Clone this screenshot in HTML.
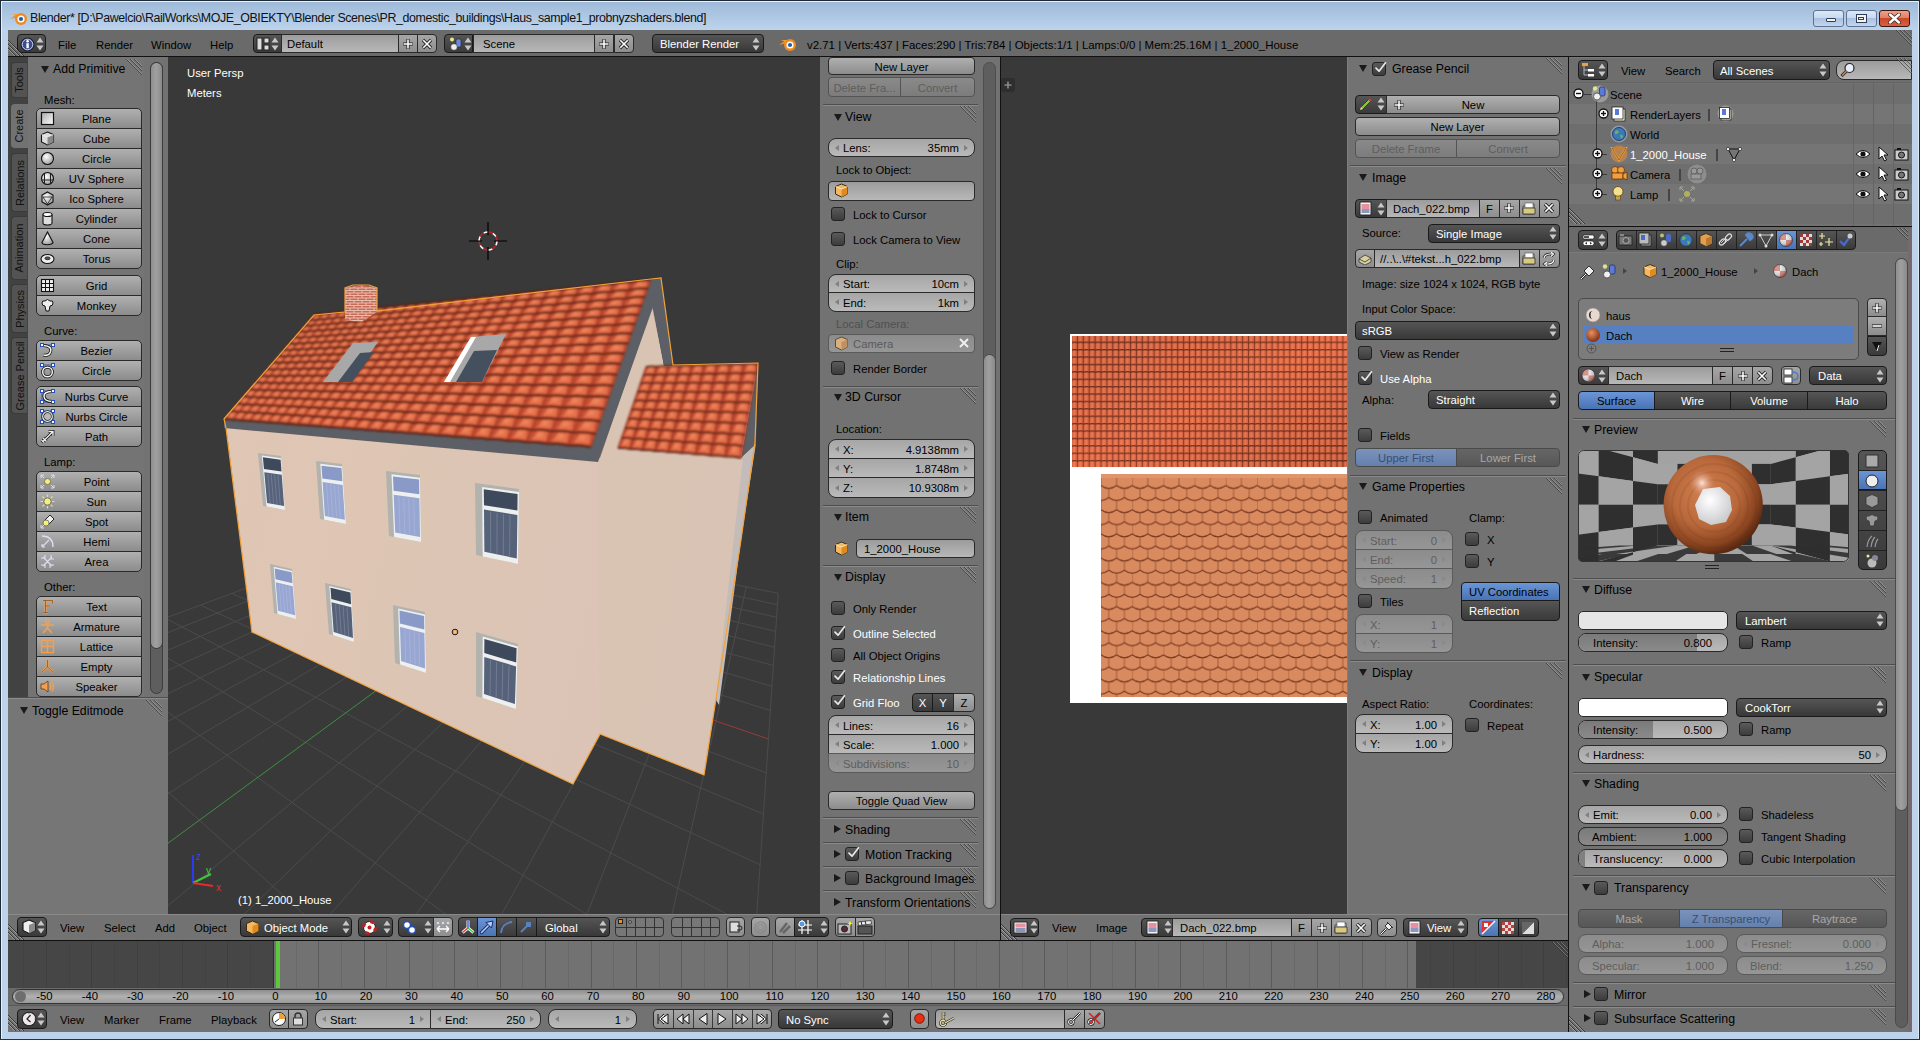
<!DOCTYPE html><html><head><meta charset="utf-8"><style>
*{margin:0;padding:0;box-sizing:border-box}
html,body{width:1920px;height:1040px;overflow:hidden}
body{position:relative;font-family:"Liberation Sans",sans-serif;font-size:11.3px;background:#b9d1ea}
.a{position:absolute}
.t{position:absolute;white-space:nowrap;line-height:1}
.bl{position:absolute;top:0;white-space:nowrap}
.arl{position:absolute;left:6px;width:0;height:0;border-top:3px solid transparent;border-bottom:3px solid transparent;border-right:4px solid #808080}
.arr{position:absolute;right:6px;width:0;height:0;border-top:3px solid transparent;border-bottom:3px solid transparent;border-left:4px solid #808080}
</style></head><body><div class="a " style="left:0px;top:0px;width:1920px;height:1040px;background:#bcd3eb"></div>
<div class="a " style="left:0px;top:0px;width:1920px;height:30px;background:linear-gradient(#9db9d8 0%,#a9c3e0 40%,#bcd3ec 100%)"></div>
<div class="a " style="left:0px;top:0px;width:1920px;height:1px;background:#1e2a36"></div>
<div class="a " style="left:0px;top:1px;width:1920px;height:1px;background:#e8f0f8"></div>
<div class="a " style="left:0px;top:0px;width:1px;height:1040px;background:#1e2a36"></div>
<div class="a " style="left:1px;top:1px;width:1px;height:1038px;background:#e8f0f8"></div>
<div class="a " style="left:1919px;top:0px;width:1px;height:1040px;background:#1e2a36"></div>
<div class="a " style="left:1918px;top:1px;width:1px;height:1038px;background:#dde8f5"></div>
<div class="a " style="left:0px;top:1039px;width:1920px;height:1px;background:#1a3a40"></div>
<svg class="a" style="left:9px;top:10px;" width="20" height="16" viewBox="0 0 20 16">
<path d="M1 9 L8 4 L9 7 Z" fill="#f0902a"/>
<path d="M3 4 L9 4 L8 6 Z" fill="#f5a040"/>
<circle cx="12" cy="9" r="6" fill="#f08a1c"/>
<circle cx="12" cy="9" r="3.6" fill="#fff"/>
<circle cx="12" cy="9" r="2.1" fill="#2a5aa8"/>
</svg>
<div class="t " style="left:30px;top:12.00px;font-size:12.4px;color:#111;letter-spacing:-0.38px">Blender* [D:\Pawelcio\RailWorks\MOJE_OBIEKTY\Blender Scenes\PR_domestic_buildings\Haus_sample1_probnyzshaders.blend]</div>
<div class="a " style="left:1813px;top:10px;width:31px;height:17px;background:linear-gradient(#dce8f6 0%,#c9daf0 45%,#aac0e0 50%,#c4d7ef 100%);border:1px solid #5f7294;border-radius:3px"></div>
<div class="a " style="left:1826px;top:18px;width:10px;height:4px;background:#f4f4ea;border:1px solid #303c5a;border-radius:1px"></div>
<div class="a " style="left:1846px;top:10px;width:31px;height:17px;background:linear-gradient(#dce8f6 0%,#c9daf0 45%,#aac0e0 50%,#c4d7ef 100%);border:1px solid #5f7294;border-radius:3px"></div>
<div class="a " style="left:1856px;top:14px;width:11px;height:9px;background:#f4f4f4;border:1px solid #303c5a;"></div>
<div class="a " style="left:1858px;top:17px;width:6px;height:3px;background:#f4f4f4;border:1px solid #303c5a;"></div>
<div class="a " style="left:1879px;top:10px;width:31px;height:17px;background:linear-gradient(#f0a08a 0%,#e0806a 45%,#c84a28 50%,#d86040 100%);border:1px solid #3a1810;border-radius:3px"></div>
<svg class="a" style="left:1888px;top:13px;" width="13" height="11" viewBox="0 0 13 11"><path d="M2 1.5 L11 9.5 M11 1.5 L2 9.5" stroke="#3a2a2a" stroke-width="4" stroke-linecap="round"/><path d="M2 1.5 L11 9.5 M11 1.5 L2 9.5" stroke="#fff" stroke-width="2.4" stroke-linecap="round"/></svg>
<div class="a " style="left:8px;top:30px;width:1904px;height:1002px;background:#111"></div>
<div class="a " style="left:8px;top:30px;width:1904px;height:26px;background:#6a6a6a"></div>
<div class="a " style="left:17px;top:34px;width:29px;height:19px;background:linear-gradient(#555,#3a3a3a);border:1px solid #1a1a1a;border-radius:4px;"></div>
<svg class="a" style="left:20px;top:37px;" width="15" height="15" viewBox="0 0 15 15"><circle cx="7.5" cy="7.5" r="6.5" fill="#3c4d8a" stroke="#1a1a2a" stroke-width="1"/><circle cx="7.5" cy="7.5" r="5.3" fill="none" stroke="#c8d0f0" stroke-width="1"/><rect x="6.4" y="6.2" width="2.4" height="5" fill="#fff"/><circle cx="7.6" cy="4.3" r="1.3" fill="#fff"/></svg>
<svg class="a" style="left:36px;top:37px;" width="8" height="14" viewBox="0 0 8 14"><path d="M4 0.5 L7.5 5.5 L0.5 5.5Z M4 13.5 L7.5 8.5 L0.5 8.5Z" fill="#c8c8c8"/></svg>
<div class="t " style="left:58px;top:40.43px;font-size:11.3px;color:#000;">File</div>
<div class="t " style="left:96px;top:40.43px;font-size:11.3px;color:#000;">Render</div>
<div class="t " style="left:151px;top:40.43px;font-size:11.3px;color:#000;">Window</div>
<div class="t " style="left:210px;top:40.43px;font-size:11.3px;color:#000;">Help</div>
<div class="a " style="left:253px;top:34px;width:29px;height:19px;background:linear-gradient(#555,#3a3a3a);border:1px solid #1a1a1a;border-radius:4px 0px 0px 4px;"></div>
<svg class="a" style="left:256px;top:37px;" width="14" height="14" viewBox="0 0 14 14"><rect x="1" y="1" width="5" height="12" fill="#ddd" stroke="#222" stroke-width="1"/><rect x="8" y="1" width="5" height="5" fill="#ddd" stroke="#222"/><rect x="8" y="8" width="5" height="5" fill="#ddd" stroke="#222"/></svg>
<svg class="a" style="left:271px;top:37px;" width="8" height="14" viewBox="0 0 8 14"><path d="M4 0.5 L7.5 5.5 L0.5 5.5Z M4 13.5 L7.5 8.5 L0.5 8.5Z" fill="#c8c8c8"/></svg>
<div class="a " style="left:281px;top:34px;width:118px;height:19px;background:linear-gradient(#9c9c9c,#b8b8b8);border:1px solid #2a2a2a;border-radius:0;"><div class="bl" style="left:5px;right:0;top:1px;text-align:left;line-height:17px;font-size:11.3px;color:#000">Default</div></div>
<div class="a " style="left:398px;top:34px;width:20px;height:19px;background:linear-gradient(#a6a6a6,#8e8e8e);border:1px solid #2a2a2a;border-radius:0;"></div>
<svg class="a" style="left:402px;top:38px;" width="12" height="12" viewBox="0 0 12 12"><path d="M6 1 V11 M1 6 H11" stroke="#222" stroke-width="3.2"/><path d="M6 1.5 V10.5 M1.5 6 H10.5" stroke="#fff" stroke-width="1.6"/></svg>
<div class="a " style="left:417px;top:34px;width:20px;height:19px;background:linear-gradient(#a6a6a6,#8e8e8e);border:1px solid #2a2a2a;border-radius:0px 4px 4px 0px;"></div>
<svg class="a" style="left:421px;top:38px;" width="12" height="12" viewBox="0 0 12 12"><path d="M2 2 L10 10 M10 2 L2 10" stroke="#222" stroke-width="3.2"/><path d="M2.3 2.3 L9.7 9.7 M9.7 2.3 L2.3 9.7" stroke="#fff" stroke-width="1.6"/></svg>
<div class="a " style="left:444px;top:34px;width:29px;height:19px;background:linear-gradient(#555,#3a3a3a);border:1px solid #1a1a1a;border-radius:4px 0px 0px 4px;"></div>
<svg class="a" style="left:448px;top:36px;" width="16" height="16" viewBox="0 0 16 16"><circle cx="4" cy="3.5" r="2" fill="#e8e890"/><rect x="8" y="3" width="5" height="8" rx="1.5" fill="#6a8ad8" stroke="#223" stroke-width="0.6"/><circle cx="6" cy="11" r="3.3" fill="#eee" stroke="#333" stroke-width="0.6"/></svg>
<svg class="a" style="left:464px;top:37px;" width="8" height="14" viewBox="0 0 8 14"><path d="M4 0.5 L7.5 5.5 L0.5 5.5Z M4 13.5 L7.5 8.5 L0.5 8.5Z" fill="#c8c8c8"/></svg>
<div class="a " style="left:473px;top:34px;width:122px;height:19px;background:linear-gradient(#9c9c9c,#b8b8b8);border:1px solid #2a2a2a;border-radius:0;"><div class="bl" style="left:9px;right:0;top:1px;text-align:left;line-height:17px;font-size:11.3px;color:#000">Scene</div></div>
<div class="a " style="left:594px;top:34px;width:20px;height:19px;background:linear-gradient(#a6a6a6,#8e8e8e);border:1px solid #2a2a2a;border-radius:0;"></div>
<svg class="a" style="left:598px;top:38px;" width="12" height="12" viewBox="0 0 12 12"><path d="M6 1 V11 M1 6 H11" stroke="#222" stroke-width="3.2"/><path d="M6 1.5 V10.5 M1.5 6 H10.5" stroke="#fff" stroke-width="1.6"/></svg>
<div class="a " style="left:614px;top:34px;width:20px;height:19px;background:linear-gradient(#a6a6a6,#8e8e8e);border:1px solid #2a2a2a;border-radius:0px 4px 4px 0px;"></div>
<svg class="a" style="left:618px;top:38px;" width="12" height="12" viewBox="0 0 12 12"><path d="M2 2 L10 10 M10 2 L2 10" stroke="#222" stroke-width="3.2"/><path d="M2.3 2.3 L9.7 9.7 M9.7 2.3 L2.3 9.7" stroke="#fff" stroke-width="1.6"/></svg>
<div class="a " style="left:652px;top:34px;width:112px;height:19px;background:linear-gradient(#555,#383838);border:1px solid #1a1a1a;border-radius:4px;"><div class="bl" style="left:7px;right:0;top:1px;text-align:left;line-height:17px;font-size:11.3px;color:#fff">Blender Render</div></div>
<svg class="a" style="left:752px;top:37px;" width="8" height="14" viewBox="0 0 8 14"><path d="M4 0.5 L7.5 5.5 L0.5 5.5Z M4 13.5 L7.5 8.5 L0.5 8.5Z" fill="#c8c8c8"/></svg>
<svg class="a" style="left:778px;top:36px;" width="20" height="16" viewBox="0 0 20 16">
<path d="M1 9 L8 4 L9 7 Z" fill="#f0902a"/>
<path d="M3 4 L9 4 L8 6 Z" fill="#f5a040"/>
<circle cx="12" cy="9" r="6" fill="#f08a1c"/>
<circle cx="12" cy="9" r="3.6" fill="#fff"/>
<circle cx="12" cy="9" r="2.1" fill="#2a5aa8"/>
</svg>
<div class="t " style="left:807px;top:40.31px;font-size:11.45px;color:#000;">v2.71 | Verts:437 | Faces:290 | Tris:784 | Objects:1/1 | Lamps:0/0 | Mem:25.16M | 1_2000_House</div>
<svg class="a" style="left:8px;top:40px" width="16" height="16"><line x1="0" y1="0" x2="16" y2="16" stroke="rgba(30,30,30,0.7)" stroke-width="1"/><line x1="0" y1="1" x2="15" y2="16" stroke="rgba(210,210,210,0.45)" stroke-width="1"/><line x1="0" y1="4" x2="12" y2="16" stroke="rgba(30,30,30,0.7)" stroke-width="1"/><line x1="0" y1="5" x2="11" y2="16" stroke="rgba(210,210,210,0.45)" stroke-width="1"/><line x1="0" y1="8" x2="8" y2="16" stroke="rgba(30,30,30,0.7)" stroke-width="1"/><line x1="0" y1="9" x2="7" y2="16" stroke="rgba(210,210,210,0.45)" stroke-width="1"/></svg>
<svg class="a" style="left:1896px;top:30px" width="16" height="16"><line x1="0" y1="0" x2="16" y2="16" stroke="rgba(40,40,40,0.55)" stroke-width="1"/><line x1="1" y1="0" x2="16" y2="15" stroke="rgba(200,200,200,0.35)" stroke-width="1"/><line x1="4" y1="0" x2="16" y2="12" stroke="rgba(40,40,40,0.55)" stroke-width="1"/><line x1="5" y1="0" x2="16" y2="11" stroke="rgba(200,200,200,0.35)" stroke-width="1"/><line x1="8" y1="0" x2="16" y2="8" stroke="rgba(40,40,40,0.55)" stroke-width="1"/><line x1="9" y1="0" x2="16" y2="7" stroke="rgba(200,200,200,0.35)" stroke-width="1"/></svg>
<svg width="0" height="0" style="position:absolute"><defs>
<linearGradient id="gw" x1="0" y1="0" x2="1" y2="1"><stop offset="0" stop-color="#aaa"/><stop offset="1" stop-color="#fff"/></linearGradient>
<radialGradient id="gs" cx="0.4" cy="0.35" r="0.7"><stop offset="0" stop-color="#fff"/><stop offset="1" stop-color="#999"/></radialGradient>
</defs></svg>
<div class="a " style="left:8px;top:57px;width:20px;height:857px;background:#424242"></div>
<div class="a " style="left:11px;top:62px;width:16px;height:36px;background:#535353;border-radius:4px 0 0 4px;border:1px solid #3a3a3a;border-right:none"></div>
<div class="t" style="left:1.0px;top:74.0px;width:36px;text-align:center;font-size:11px;transform:rotate(-90deg);color:#111;line-height:12px">Tools</div>
<div class="a " style="left:11px;top:104px;width:22px;height:44px;background:#727272;border-radius:4px 0 0 4px;"></div>
<div class="t" style="left:-3.0px;top:120.0px;width:44px;text-align:center;font-size:11px;transform:rotate(-90deg);color:#111;line-height:12px">Create</div>
<div class="a " style="left:11px;top:153px;width:16px;height:59px;background:#535353;border-radius:4px 0 0 4px;border:1px solid #3a3a3a;border-right:none"></div>
<div class="t" style="left:-10.5px;top:176.5px;width:59px;text-align:center;font-size:11px;transform:rotate(-90deg);color:#111;line-height:12px">Relations</div>
<div class="a " style="left:11px;top:216px;width:16px;height:64px;background:#535353;border-radius:4px 0 0 4px;border:1px solid #3a3a3a;border-right:none"></div>
<div class="t" style="left:-13.0px;top:242.0px;width:64px;text-align:center;font-size:11px;transform:rotate(-90deg);color:#111;line-height:12px">Animation</div>
<div class="a " style="left:11px;top:284px;width:16px;height:49px;background:#535353;border-radius:4px 0 0 4px;border:1px solid #3a3a3a;border-right:none"></div>
<div class="t" style="left:-5.5px;top:302.5px;width:49px;text-align:center;font-size:11px;transform:rotate(-90deg);color:#111;line-height:12px">Physics</div>
<div class="a " style="left:11px;top:337px;width:16px;height:77px;background:#535353;border-radius:4px 0 0 4px;border:1px solid #3a3a3a;border-right:none"></div>
<div class="t" style="left:-19.5px;top:369.5px;width:77px;text-align:center;font-size:11px;transform:rotate(-90deg);color:#111;line-height:12px">Grease Pencil</div>
<div class="a " style="left:28px;top:57px;width:140px;height:857px;background:#727272"></div>
<div class="a " style="left:28px;top:57px;width:116px;height:641px;background:#747474"></div>
<div class="a" style="left:41px;top:66px;width:0;height:0;border-left:4px solid transparent;border-right:4px solid transparent;border-top:7px solid #1a1a1a"></div>
<div class="t " style="left:53px;top:62.59px;font-size:12.3px;color:#000;">Add Primitive</div>
<svg class="a" style="left:126px;top:59px" width="16" height="16"><line x1="0" y1="0" x2="16" y2="16" stroke="rgba(40,40,40,0.55)" stroke-width="1"/><line x1="1" y1="0" x2="16" y2="15" stroke="rgba(200,200,200,0.35)" stroke-width="1"/><line x1="4" y1="0" x2="16" y2="12" stroke="rgba(40,40,40,0.55)" stroke-width="1"/><line x1="5" y1="0" x2="16" y2="11" stroke="rgba(200,200,200,0.35)" stroke-width="1"/><line x1="8" y1="0" x2="16" y2="8" stroke="rgba(40,40,40,0.55)" stroke-width="1"/><line x1="9" y1="0" x2="16" y2="7" stroke="rgba(200,200,200,0.35)" stroke-width="1"/></svg>
<div class="t " style="left:44px;top:95.43px;font-size:11.3px;color:#000;">Mesh:</div>
<div class="a " style="left:36px;top:108px;width:106px;height:21px;background:linear-gradient(#b0b0b0,#8c8c8c);border:1px solid #2a2a2a;border-radius:5px 5px 0px 0px;"><div class="bl" style="left:15px;right:0;top:1px;text-align:center;line-height:19px;font-size:11.3px;color:#000">Plane</div></div>
<svg class="a" style="left:40px;top:111px;" width="16" height="16" viewBox="0 0 16 16"><rect x="1.5" y="1.5" width="12" height="12" fill="url(#gw)" stroke="#111" stroke-width="1.2"/></svg>
<div class="a " style="left:36px;top:128px;width:106px;height:21px;background:linear-gradient(#b0b0b0,#8c8c8c);border:1px solid #2a2a2a;border-radius:0;"><div class="bl" style="left:15px;right:0;top:1px;text-align:center;line-height:19px;font-size:11.3px;color:#000">Cube</div></div>
<svg class="a" style="left:40px;top:131px;" width="16" height="16" viewBox="0 0 16 16"><path d="M7.5 1 L13.5 3.5 V11 L7.5 14 L1.5 11 V3.5Z" fill="#ddd" stroke="#111" stroke-width="1.1"/><path d="M7.5 6 L13.5 3.5 V11 L7.5 14Z" fill="#888"/><path d="M1.5 3.5 L7.5 6 L13.5 3.5" stroke="#eee" fill="none" stroke-width="0.8"/></svg>
<div class="a " style="left:36px;top:148px;width:106px;height:21px;background:linear-gradient(#b0b0b0,#8c8c8c);border:1px solid #2a2a2a;border-radius:0;"><div class="bl" style="left:15px;right:0;top:1px;text-align:center;line-height:19px;font-size:11.3px;color:#000">Circle</div></div>
<svg class="a" style="left:40px;top:151px;" width="16" height="16" viewBox="0 0 16 16"><circle cx="7.5" cy="7.5" r="6" fill="url(#gs)" stroke="#111" stroke-width="1.1"/></svg>
<div class="a " style="left:36px;top:168px;width:106px;height:21px;background:linear-gradient(#b0b0b0,#8c8c8c);border:1px solid #2a2a2a;border-radius:0;"><div class="bl" style="left:15px;right:0;top:1px;text-align:center;line-height:19px;font-size:11.3px;color:#000">UV Sphere</div></div>
<svg class="a" style="left:40px;top:171px;" width="16" height="16" viewBox="0 0 16 16"><circle cx="7.5" cy="7.5" r="6" fill="url(#gs)" stroke="#111" stroke-width="1.1"/><path d="M4.5 3 V13 M10.5 3 V13 M1.5 9 H13.5" stroke="#222" stroke-width="1"/></svg>
<div class="a " style="left:36px;top:188px;width:106px;height:21px;background:linear-gradient(#b0b0b0,#8c8c8c);border:1px solid #2a2a2a;border-radius:0;"><div class="bl" style="left:15px;right:0;top:1px;text-align:center;line-height:19px;font-size:11.3px;color:#000">Ico Sphere</div></div>
<svg class="a" style="left:40px;top:191px;" width="16" height="16" viewBox="0 0 16 16"><path d="M7.5 1 L13 4 V11 L7.5 14 L2 11 V4Z" fill="url(#gs)" stroke="#111" stroke-width="1.1"/><path d="M3 6 L12 6 L7.5 13Z" fill="none" stroke="#222" stroke-width="0.8"/></svg>
<div class="a " style="left:36px;top:208px;width:106px;height:21px;background:linear-gradient(#b0b0b0,#8c8c8c);border:1px solid #2a2a2a;border-radius:0;"><div class="bl" style="left:15px;right:0;top:1px;text-align:center;line-height:19px;font-size:11.3px;color:#000">Cylinder</div></div>
<svg class="a" style="left:40px;top:211px;" width="16" height="16" viewBox="0 0 16 16"><path d="M3 3.5 V12 A4.5 2 0 0 0 12 12 V3.5" fill="#ddd" stroke="#111" stroke-width="1.1"/><ellipse cx="7.5" cy="3.5" rx="4.5" ry="2" fill="#fff" stroke="#111" stroke-width="1.1"/></svg>
<div class="a " style="left:36px;top:228px;width:106px;height:21px;background:linear-gradient(#b0b0b0,#8c8c8c);border:1px solid #2a2a2a;border-radius:0;"><div class="bl" style="left:15px;right:0;top:1px;text-align:center;line-height:19px;font-size:11.3px;color:#000">Cone</div></div>
<svg class="a" style="left:40px;top:231px;" width="16" height="16" viewBox="0 0 16 16"><path d="M7.5 1 L13 11.5 A5.5 2.2 0 0 1 2 11.5Z" fill="url(#gs)" stroke="#111" stroke-width="1.1"/></svg>
<div class="a " style="left:36px;top:248px;width:106px;height:21px;background:linear-gradient(#b0b0b0,#8c8c8c);border:1px solid #2a2a2a;border-radius:0px 0px 5px 5px;"><div class="bl" style="left:15px;right:0;top:1px;text-align:center;line-height:19px;font-size:11.3px;color:#000">Torus</div></div>
<svg class="a" style="left:40px;top:251px;" width="16" height="16" viewBox="0 0 16 16"><ellipse cx="7.5" cy="8" rx="6.5" ry="4.5" fill="#eee" stroke="#111" stroke-width="1.1"/><ellipse cx="7.5" cy="7.3" rx="2.6" ry="1.4" fill="#555" stroke="#111" stroke-width="0.8"/></svg>
<div class="a " style="left:36px;top:275px;width:106px;height:21px;background:linear-gradient(#b0b0b0,#8c8c8c);border:1px solid #2a2a2a;border-radius:5px 5px 0px 0px;"><div class="bl" style="left:15px;right:0;top:1px;text-align:center;line-height:19px;font-size:11.3px;color:#000">Grid</div></div>
<svg class="a" style="left:40px;top:278px;" width="16" height="16" viewBox="0 0 16 16"><rect x="1.5" y="1.5" width="12" height="12" fill="#eee" stroke="#111" stroke-width="1.1"/><path d="M5.5 1.5 V13.5 M9.5 1.5 V13.5 M1.5 5.5 H13.5 M1.5 9.5 H13.5" stroke="#111" stroke-width="1"/></svg>
<div class="a " style="left:36px;top:295px;width:106px;height:21px;background:linear-gradient(#b0b0b0,#8c8c8c);border:1px solid #2a2a2a;border-radius:0px 0px 5px 5px;"><div class="bl" style="left:15px;right:0;top:1px;text-align:center;line-height:19px;font-size:11.3px;color:#000">Monkey</div></div>
<svg class="a" style="left:40px;top:298px;" width="16" height="16" viewBox="0 0 16 16"><path d="M2 5 Q2 2 5 3 Q7.5 0 10 3 Q13 2 13 5 Q13 8 10 8 L9 13 L6 13 L5 8 Q2 8 2 5Z" fill="#eee" stroke="#111" stroke-width="1"/></svg>
<div class="t " style="left:44px;top:326.43px;font-size:11.3px;color:#000;">Curve:</div>
<div class="a " style="left:36px;top:340px;width:106px;height:21px;background:linear-gradient(#b0b0b0,#8c8c8c);border:1px solid #2a2a2a;border-radius:5px 5px 0px 0px;"><div class="bl" style="left:15px;right:0;top:1px;text-align:center;line-height:19px;font-size:11.3px;color:#000">Bezier</div></div>
<svg class="a" style="left:40px;top:343px;" width="16" height="16" viewBox="0 0 16 16"><path d="M2 2 H13" stroke="#2050c0" stroke-width="0.9"/><path d="M3.5 2.5 Q12.5 3 10.5 9 Q8.5 13.5 3.5 12" fill="none" stroke="#111" stroke-width="3"/><path d="M3.5 2.5 Q12.5 3 10.5 9 Q8.5 13.5 3.5 12" fill="none" stroke="#f4f4f4" stroke-width="1.5"/><rect x="0.5" y="0.5" width="3" height="3" fill="#fff" stroke="#2050c0"/><rect x="11.5" y="0.5" width="3" height="3" fill="#fff" stroke="#2050c0"/></svg>
<div class="a " style="left:36px;top:360px;width:106px;height:21px;background:linear-gradient(#b0b0b0,#8c8c8c);border:1px solid #2a2a2a;border-radius:0px 0px 5px 5px;"><div class="bl" style="left:15px;right:0;top:1px;text-align:center;line-height:19px;font-size:11.3px;color:#000">Circle</div></div>
<svg class="a" style="left:40px;top:363px;" width="16" height="16" viewBox="0 0 16 16"><path d="M2 2 H13" stroke="#2050c0" stroke-width="0.9"/><circle cx="7.5" cy="9" r="4.8" fill="none" stroke="#111" stroke-width="3"/><circle cx="7.5" cy="9" r="4.8" fill="none" stroke="#f4f4f4" stroke-width="1.5"/><rect x="0.5" y="0.5" width="3" height="3" fill="#fff" stroke="#2050c0"/><rect x="11.5" y="0.5" width="3" height="3" fill="#fff" stroke="#2050c0"/></svg>
<div class="a " style="left:36px;top:386px;width:106px;height:21px;background:linear-gradient(#b0b0b0,#8c8c8c);border:1px solid #2a2a2a;border-radius:5px 5px 0px 0px;"><div class="bl" style="left:15px;right:0;top:1px;text-align:center;line-height:19px;font-size:11.3px;color:#000">Nurbs Curve</div></div>
<svg class="a" style="left:40px;top:389px;" width="16" height="16" viewBox="0 0 16 16"><path d="M2 2 V13 M2 2 H13 M2 13 H13" stroke="#2050c0" stroke-width="0.9"/><path d="M12.5 2.5 Q3.5 2.5 4 7.5 Q4.5 12.5 12.5 12.5" fill="none" stroke="#111" stroke-width="3"/><path d="M12.5 2.5 Q3.5 2.5 4 7.5 Q4.5 12.5 12.5 12.5" fill="none" stroke="#f4f4f4" stroke-width="1.5"/><rect x="0.5" y="0.5" width="3" height="3" fill="#fff" stroke="#2050c0"/><rect x="11.5" y="0.5" width="3" height="3" fill="#fff" stroke="#2050c0"/><rect x="0.5" y="11.5" width="3" height="3" fill="#fff" stroke="#2050c0"/><rect x="11.5" y="11.5" width="3" height="3" fill="#fff" stroke="#2050c0"/></svg>
<div class="a " style="left:36px;top:406px;width:106px;height:21px;background:linear-gradient(#b0b0b0,#8c8c8c);border:1px solid #2a2a2a;border-radius:0;"><div class="bl" style="left:15px;right:0;top:1px;text-align:center;line-height:19px;font-size:11.3px;color:#000">Nurbs Circle</div></div>
<svg class="a" style="left:40px;top:409px;" width="16" height="16" viewBox="0 0 16 16"><rect x="2" y="2" width="11" height="11" fill="none" stroke="#2050c0" stroke-width="0.9"/><circle cx="7.5" cy="7.5" r="4.8" fill="#b8b8b8" stroke="#111" stroke-width="2.6"/><circle cx="7.5" cy="7.5" r="4.8" fill="none" stroke="#f4f4f4" stroke-width="1.2"/><rect x="0.5" y="0.5" width="3" height="3" fill="#fff" stroke="#2050c0"/><rect x="11.5" y="0.5" width="3" height="3" fill="#fff" stroke="#2050c0"/><rect x="0.5" y="11.5" width="3" height="3" fill="#fff" stroke="#2050c0"/><rect x="11.5" y="11.5" width="3" height="3" fill="#fff" stroke="#2050c0"/></svg>
<div class="a " style="left:36px;top:426px;width:106px;height:21px;background:linear-gradient(#b0b0b0,#8c8c8c);border:1px solid #2a2a2a;border-radius:0px 0px 5px 5px;"><div class="bl" style="left:15px;right:0;top:1px;text-align:center;line-height:19px;font-size:11.3px;color:#000">Path</div></div>
<svg class="a" style="left:40px;top:429px;" width="16" height="16" viewBox="0 0 16 16"><path d="M2.5 13 L12.5 3 M8.5 2.5 H13 V7 M3 9 L6.5 12.5 M1.5 11 L4 13.5" stroke="#111" stroke-width="2.8" fill="none"/><path d="M2.5 13 L12.5 3 M8.5 2.5 H13 V7 M3 9 L6.5 12.5 M1.5 11 L4 13.5" stroke="#f4f4f4" stroke-width="1.3" fill="none"/></svg>
<div class="t " style="left:44px;top:457.43px;font-size:11.3px;color:#000;">Lamp:</div>
<div class="a " style="left:36px;top:471px;width:106px;height:21px;background:linear-gradient(#b0b0b0,#8c8c8c);border:1px solid #2a2a2a;border-radius:5px 5px 0px 0px;"><div class="bl" style="left:15px;right:0;top:1px;text-align:center;line-height:19px;font-size:11.3px;color:#000">Point</div></div>
<svg class="a" style="left:40px;top:474px;" width="16" height="16" viewBox="0 0 16 16"><circle cx="7.5" cy="7.5" r="3" fill="#f5f07a" stroke="#665" stroke-width="0.8"/><path d="M1 1 L4 4 M14 1 L11 4 M1 14 L4 11 M14 14 L11 11 M1 1 H4 M1 1 V4 M14 1 H11 M14 1 V4 M1 14 H4 M1 14 V11 M14 14 H11 M14 14 V11" stroke="#dde" stroke-width="1"/></svg>
<div class="a " style="left:36px;top:491px;width:106px;height:21px;background:linear-gradient(#b0b0b0,#8c8c8c);border:1px solid #2a2a2a;border-radius:0;"><div class="bl" style="left:15px;right:0;top:1px;text-align:center;line-height:19px;font-size:11.3px;color:#000">Sun</div></div>
<svg class="a" style="left:40px;top:494px;" width="16" height="16" viewBox="0 0 16 16"><circle cx="7.5" cy="7.5" r="3.6" fill="#f5f07a" stroke="#665" stroke-width="0.8"/><path d="M7.5 0.5 V3 M7.5 12 V14.5 M0.5 7.5 H3 M12 7.5 H14.5 M2.5 2.5 L4.3 4.3 M12.5 2.5 L10.7 4.3 M2.5 12.5 L4.3 10.7 M12.5 12.5 L10.7 10.7" stroke="#dda" stroke-width="1.2"/></svg>
<div class="a " style="left:36px;top:511px;width:106px;height:21px;background:linear-gradient(#b0b0b0,#8c8c8c);border:1px solid #2a2a2a;border-radius:0;"><div class="bl" style="left:15px;right:0;top:1px;text-align:center;line-height:19px;font-size:11.3px;color:#000">Spot</div></div>
<svg class="a" style="left:40px;top:514px;" width="16" height="16" viewBox="0 0 16 16"><path d="M5 6 L10 1 L14 5 L9 10Z" fill="#eee" stroke="#111" stroke-width="0.9"/><circle cx="6" cy="9" r="3" fill="#f5f07a" stroke="#665" stroke-width="0.8"/><path d="M1 14 L4 11 M1 14 H4 M1 14 V11" stroke="#ddd" stroke-width="1"/></svg>
<div class="a " style="left:36px;top:531px;width:106px;height:21px;background:linear-gradient(#b0b0b0,#8c8c8c);border:1px solid #2a2a2a;border-radius:0;"><div class="bl" style="left:15px;right:0;top:1px;text-align:center;line-height:19px;font-size:11.3px;color:#000">Hemi</div></div>
<svg class="a" style="left:40px;top:534px;" width="16" height="16" viewBox="0 0 16 16"><path d="M2 2 Q13 2 13 13" fill="none" stroke="#dde" stroke-width="1.4"/><path d="M2 13 L9 6 M2 13 H5 M2 13 V10" stroke="#dde" stroke-width="1.2"/></svg>
<div class="a " style="left:36px;top:551px;width:106px;height:21px;background:linear-gradient(#b0b0b0,#8c8c8c);border:1px solid #2a2a2a;border-radius:0px 0px 5px 5px;"><div class="bl" style="left:15px;right:0;top:1px;text-align:center;line-height:19px;font-size:11.3px;color:#000">Area</div></div>
<svg class="a" style="left:40px;top:554px;" width="16" height="16" viewBox="0 0 16 16"><path d="M3 3 L12 12 M12 3 L3 12 M1 4 H5 V1 M14 11 H10 V14 M11 1 V5 H14 M1 11 H5 V14" stroke="#dde" stroke-width="1.1" fill="none"/></svg>
<div class="t " style="left:44px;top:582.43px;font-size:11.3px;color:#000;">Other:</div>
<div class="a " style="left:36px;top:596px;width:106px;height:21px;background:linear-gradient(#b0b0b0,#8c8c8c);border:1px solid #2a2a2a;border-radius:5px 5px 0px 0px;"><div class="bl" style="left:15px;right:0;top:1px;text-align:center;line-height:19px;font-size:11.3px;color:#000">Text</div></div>
<svg class="a" style="left:40px;top:599px;" width="16" height="16" viewBox="0 0 16 16"><path d="M3 1.5 H12.5 V4.5 M5.5 1.5 V13.5 M3 13.5 H8 M5.5 7 H10" stroke="#f2a050" stroke-width="2" fill="none"/><path d="M3 1.5 H12.5 V4.5 M5.5 1.5 V13.5 M3 13.5 H8 M5.5 7 H10" stroke="#5a2a00" stroke-width="0.5" fill="none"/></svg>
<div class="a " style="left:36px;top:616px;width:106px;height:21px;background:linear-gradient(#b0b0b0,#8c8c8c);border:1px solid #2a2a2a;border-radius:0;"><div class="bl" style="left:15px;right:0;top:1px;text-align:center;line-height:19px;font-size:11.3px;color:#000">Armature</div></div>
<svg class="a" style="left:40px;top:619px;" width="16" height="16" viewBox="0 0 16 16"><circle cx="7.5" cy="2.5" r="2" fill="none" stroke="#f2a050" stroke-width="1.4"/><path d="M1 6 H14 M7.5 5 V9 L3 14 M7.5 9 L12 14" stroke="#f2a050" stroke-width="1.6" fill="none"/></svg>
<div class="a " style="left:36px;top:636px;width:106px;height:21px;background:linear-gradient(#b0b0b0,#8c8c8c);border:1px solid #2a2a2a;border-radius:0;"><div class="bl" style="left:15px;right:0;top:1px;text-align:center;line-height:19px;font-size:11.3px;color:#000">Lattice</div></div>
<svg class="a" style="left:40px;top:639px;" width="16" height="16" viewBox="0 0 16 16"><rect x="1.5" y="1.5" width="12" height="12" fill="none" stroke="#f2a050" stroke-width="1.4"/><path d="M7.5 1.5 V13.5 M1.5 7.5 H13.5" stroke="#f2a050" stroke-width="1.4"/></svg>
<div class="a " style="left:36px;top:656px;width:106px;height:21px;background:linear-gradient(#b0b0b0,#8c8c8c);border:1px solid #2a2a2a;border-radius:0;"><div class="bl" style="left:15px;right:0;top:1px;text-align:center;line-height:19px;font-size:11.3px;color:#000">Empty</div></div>
<svg class="a" style="left:40px;top:659px;" width="16" height="16" viewBox="0 0 16 16"><path d="M7.5 1 V8 L2 13 M7.5 8 L13 13" stroke="#f2a050" stroke-width="2" fill="none"/><path d="M7.5 1 V8 L2 13 M7.5 8 L13 13" stroke="#5a2a00" stroke-width="0.5" fill="none"/></svg>
<div class="a " style="left:36px;top:676px;width:106px;height:21px;background:linear-gradient(#b0b0b0,#8c8c8c);border:1px solid #2a2a2a;border-radius:0px 0px 5px 5px;"><div class="bl" style="left:15px;right:0;top:1px;text-align:center;line-height:19px;font-size:11.3px;color:#000">Speaker</div></div>
<svg class="a" style="left:40px;top:679px;" width="16" height="16" viewBox="0 0 16 16"><path d="M1 5 H4 L8 2 V13 L4 10 H1Z" fill="#f2a050" stroke="#5a2a00" stroke-width="0.7"/><path d="M10 4 Q12 7.5 10 11 M12 2.5 Q15 7.5 12 12.5" fill="none" stroke="#f2a050" stroke-width="1.3"/></svg>
<div class="a " style="left:150px;top:62px;width:13px;height:632px;background:#5e5e5e;border:1px solid #3c3c3c;border-radius:7px"></div>
<div class="a " style="left:150px;top:62px;width:13px;height:587px;background:linear-gradient(90deg,#8e8e8e,#a0a0a0 45%,#8a8a8a);border:1px solid #3c3c3c;border-radius:7px"></div>
<div class="a " style="left:8px;top:698px;width:160px;height:216px;background:#767676"></div>
<div class="a " style="left:8px;top:697px;width:160px;height:1px;background:#4e4e4e"></div>
<div class="a " style="left:8px;top:698px;width:160px;height:1px;background:#8a8a8a"></div>
<div class="a" style="left:20px;top:707px;width:0;height:0;border-left:4px solid transparent;border-right:4px solid transparent;border-top:7px solid #1a1a1a"></div>
<div class="t " style="left:32px;top:704.59px;font-size:12.3px;color:#000;">Toggle Editmode</div>
<svg class="a" style="left:146px;top:700px" width="16" height="16"><line x1="0" y1="0" x2="16" y2="16" stroke="rgba(40,40,40,0.55)" stroke-width="1"/><line x1="1" y1="0" x2="16" y2="15" stroke="rgba(200,200,200,0.35)" stroke-width="1"/><line x1="4" y1="0" x2="16" y2="12" stroke="rgba(40,40,40,0.55)" stroke-width="1"/><line x1="5" y1="0" x2="16" y2="11" stroke="rgba(200,200,200,0.35)" stroke-width="1"/><line x1="8" y1="0" x2="16" y2="8" stroke="rgba(40,40,40,0.55)" stroke-width="1"/><line x1="9" y1="0" x2="16" y2="7" stroke="rgba(200,200,200,0.35)" stroke-width="1"/></svg>
<div class="a " style="left:168px;top:57px;width:652px;height:857px;background:#393939"></div>
<svg class="a" style="left:168px;top:57px" width="652" height="857" viewBox="168 57 652 857"><line x1="-28.6" y1="690.1" x2="425.5" y2="521.6" stroke="#4b4b4b" stroke-width="1"/><line x1="-28.6" y1="690.1" x2="713.4" y2="1564.9" stroke="#4b4b4b" stroke-width="1"/><line x1="-15.8" y1="705.3" x2="440.6" y2="524.7" stroke="#4b4b4b" stroke-width="1"/><line x1="30.3" y1="668.2" x2="731.2" y2="1298.3" stroke="#4b4b4b" stroke-width="1"/><line x1="-1.6" y1="722.0" x2="456.4" y2="527.9" stroke="#4b4b4b" stroke-width="1"/><line x1="81.4" y1="649.3" x2="742.4" y2="1130.0" stroke="#4b4b4b" stroke-width="1"/><line x1="14.1" y1="740.5" x2="472.8" y2="531.3" stroke="#4b4b4b" stroke-width="1"/><line x1="126.1" y1="632.7" x2="750.1" y2="1014.1" stroke="#4b4b4b" stroke-width="1"/><line x1="31.6" y1="761.1" x2="490.0" y2="534.8" stroke="#4b4b4b" stroke-width="1"/><line x1="165.5" y1="618.1" x2="755.8" y2="929.4" stroke="#4b4b4b" stroke-width="1"/><line x1="51.1" y1="784.2" x2="508.0" y2="538.4" stroke="#4b4b4b" stroke-width="1"/><line x1="200.4" y1="605.1" x2="760.1" y2="864.8" stroke="#4b4b4b" stroke-width="1"/><line x1="73.2" y1="810.1" x2="526.8" y2="542.3" stroke="#4b4b4b" stroke-width="1"/><line x1="231.7" y1="593.5" x2="763.5" y2="814.0" stroke="#4b4b4b" stroke-width="1"/><line x1="98.2" y1="839.6" x2="546.5" y2="546.3" stroke="#4b4b4b" stroke-width="1"/><line x1="259.8" y1="583.1" x2="766.2" y2="772.9" stroke="#4b4b4b" stroke-width="1"/><line x1="159.9" y1="912.4" x2="588.9" y2="554.9" stroke="#4b4b4b" stroke-width="1"/><line x1="308.4" y1="565.1" x2="770.4" y2="710.5" stroke="#4b4b4b" stroke-width="1"/><line x1="198.7" y1="958.1" x2="611.8" y2="559.6" stroke="#4b4b4b" stroke-width="1"/><line x1="329.5" y1="557.2" x2="772.0" y2="686.3" stroke="#4b4b4b" stroke-width="1"/><line x1="244.7" y1="1012.3" x2="635.9" y2="564.5" stroke="#4b4b4b" stroke-width="1"/><line x1="348.9" y1="550.1" x2="773.4" y2="665.5" stroke="#4b4b4b" stroke-width="1"/><line x1="300.0" y1="1077.6" x2="661.2" y2="569.6" stroke="#4b4b4b" stroke-width="1"/><line x1="366.7" y1="543.5" x2="774.6" y2="647.3" stroke="#4b4b4b" stroke-width="1"/><line x1="368.0" y1="1157.7" x2="688.0" y2="575.1" stroke="#4b4b4b" stroke-width="1"/><line x1="383.1" y1="537.4" x2="775.7" y2="631.4" stroke="#4b4b4b" stroke-width="1"/><line x1="453.5" y1="1258.5" x2="716.3" y2="580.9" stroke="#4b4b4b" stroke-width="1"/><line x1="398.3" y1="531.7" x2="776.6" y2="617.3" stroke="#4b4b4b" stroke-width="1"/><line x1="564.3" y1="1389.1" x2="746.3" y2="587.0" stroke="#4b4b4b" stroke-width="1"/><line x1="412.4" y1="526.5" x2="777.4" y2="604.7" stroke="#4b4b4b" stroke-width="1"/><line x1="713.4" y1="1564.9" x2="778.2" y2="593.4" stroke="#4b4b4b" stroke-width="1"/><line x1="425.5" y1="521.6" x2="778.2" y2="593.4" stroke="#4b4b4b" stroke-width="1"/><line x1="126.8" y1="873.4" x2="567.2" y2="550.5" stroke="#3f8f3f" stroke-width="1"/><line x1="285.3" y1="573.7" x2="768.5" y2="739.0" stroke="#9a3a3a" stroke-width="1"/><defs>
<filter id="tblur" x="-2%" y="-2%" width="104%" height="104%"><feGaussianBlur stdDeviation="1.0"/></filter>
<pattern id="tiles" patternUnits="userSpaceOnUse" width="10" height="8" patternTransform="matrix(1.2,0.09,0.69,-0.79,224,419)">
<rect width="10" height="8" fill="#d45a38"/>
<ellipse cx="5.3" cy="4.8" rx="4.2" ry="3.4" fill="#e87250"/>
<ellipse cx="4.8" cy="5.4" rx="2.5" ry="1.8" fill="#f08560"/>
<path d="M0 0.9 Q5 2.2 10 0.9" stroke="#7a2c1a" stroke-width="1.5" fill="none"/>
<line x1="0.4" y1="0" x2="0.4" y2="8" stroke="#a8442c" stroke-width="0.8"/>
</pattern>
<pattern id="tiles2" patternUnits="userSpaceOnUse" width="10" height="8" patternTransform="matrix(1.5,0.1,0.8,-1.15,618,448)">
<rect width="10" height="8" fill="#d45a38"/>
<ellipse cx="5.3" cy="4.8" rx="4.2" ry="3.4" fill="#e87250"/>
<ellipse cx="4.8" cy="5.4" rx="2.5" ry="1.8" fill="#f08560"/>
<path d="M0 0.9 Q5 2.2 10 0.9" stroke="#7a2c1a" stroke-width="1.5" fill="none"/>
<line x1="0.4" y1="0" x2="0.4" y2="8" stroke="#a8442c" stroke-width="0.8"/>
</pattern>
<pattern id="brick" patternUnits="userSpaceOnUse" width="8" height="5">
<rect width="8" height="5" fill="#c86a58"/>
<path d="M0 0.5 H8 M0 3 H8 M2 0.5 V3 M6 3 V5" stroke="#f0d0c0" stroke-width="0.8"/>
</pattern>
<linearGradient id="wallg" x1="0" y1="0" x2="1" y2="0.2"><stop offset="0" stop-color="#e0c6b4"/><stop offset="1" stop-color="#dac4b6"/></linearGradient>
</defs><polygon points="226.0,426.0 600.0,458.0 652.0,306.0 664.0,366.0 756.0,364.0 754.0,442.0 741.0,540.0 704.0,775.0 600.0,734.0 573.0,784.0 252.0,632.0" fill="url(#wallg)"/><polygon points="598.0,460.0 653.0,306.0 664.0,366.0 646.0,367.0 618.0,448.0 741.0,458.0 741.0,540.0 704.0,775.0 600.0,734.0" fill="#d8c2b2" opacity="0.5"/><polygon points="743.0,458.0 756.0,443.0 741.0,540.0 719.0,705.0 716.0,700.0 733.0,545.0" fill="#c4bcb8"/><polygon points="224.0,418.0 651.0,279.0 661.0,278.0 673.0,366.0 664.0,366.0 653.0,307.0 598.0,462.0 224.0,428.0" fill="#5c6066"/><g filter="url(#tblur)"><polygon points="224.0,419.0 591.0,447.0 651.0,280.0 314.0,315.0" fill="#c85034"/><path d="M226.9,417.4L232.6,417.9L236.5,412.3L232.6,412.0ZM235.1,418.0L240.9,418.5L244.8,412.8L240.8,412.6ZM243.5,418.7L249.5,419.1L253.4,413.3L249.3,413.1ZM252.2,419.3L258.4,419.7L262.3,413.9L258.0,413.6ZM261.2,419.9L267.6,420.4L271.5,414.5L267.0,414.2ZM270.5,420.6L277.1,421.1L280.9,415.0L276.3,414.8ZM280.0,421.3L287.0,421.8L290.7,415.6L286.0,415.4ZM290.0,422.0L297.1,422.6L300.8,416.3L295.9,416.0ZM300.2,422.8L307.6,423.3L311.3,416.9L306.2,416.6ZM310.9,423.6L318.5,424.1L322.2,417.6L316.9,417.3ZM321.9,424.4L329.8,425.0L333.4,418.3L327.9,418.0ZM333.3,425.2L341.5,425.8L345.0,419.0L339.4,418.7ZM345.1,426.1L353.7,426.7L357.1,419.8L351.3,419.4ZM357.4,427.0L366.3,427.6L369.7,420.5L363.6,420.2ZM370.2,427.9L379.4,428.6L382.7,421.4L376.4,421.0ZM383.4,428.9L393.0,429.6L396.2,422.2L389.7,421.8ZM397.2,429.9L407.2,430.6L410.3,423.1L403.5,422.6ZM411.6,430.9L422.0,431.7L425.0,424.0L417.9,423.5ZM426.6,432.0L437.4,432.8L440.3,424.9L432.9,424.5ZM442.2,433.2L453.5,434.0L456.2,425.9L448.5,425.4ZM458.5,434.3L470.3,435.2L472.9,427.0L464.8,426.4ZM475.5,435.6L487.9,436.5L490.3,428.0L481.8,427.5ZM493.3,436.9L506.3,437.8L508.5,429.2L499.6,428.6ZM512.0,438.2L525.6,439.2L527.5,430.3L518.3,429.8ZM531.5,439.7L545.8,440.7L547.5,431.6L537.8,431.0ZM552.0,441.2L567.0,442.3L568.5,432.9L558.3,432.2ZM573.6,442.7L589.3,443.9L590.5,434.2L579.8,433.6ZM233.3,410.0L239.0,410.3L242.8,404.9L238.9,404.7ZM241.5,410.5L247.4,410.8L251.2,405.3L247.2,405.1ZM250.0,410.9L256.0,411.3L259.8,405.7L255.6,405.5ZM258.7,411.5L264.9,411.8L268.7,406.1L264.4,405.9ZM267.7,412.0L274.1,412.4L277.9,406.5L273.4,406.3ZM277.0,412.5L283.6,412.9L287.3,407.0L282.7,406.8ZM286.5,413.1L293.5,413.5L297.1,407.4L292.4,407.2ZM296.5,413.6L303.6,414.1L307.2,407.9L302.3,407.7ZM306.7,414.2L314.1,414.7L317.7,408.4L312.6,408.2ZM317.3,414.9L325.0,415.3L328.5,408.9L323.3,408.7ZM328.3,415.5L336.3,416.0L339.7,409.5L334.3,409.2ZM339.7,416.2L347.9,416.6L351.4,410.0L345.7,409.8ZM351.5,416.8L360.1,417.3L363.4,410.6L357.6,410.3ZM363.8,417.6L372.6,418.1L375.9,411.2L369.8,410.9ZM376.5,418.3L385.7,418.8L388.9,411.8L382.6,411.5ZM389.7,419.1L399.3,419.6L402.4,412.5L395.8,412.1ZM403.5,419.9L413.4,420.4L416.4,413.1L409.6,412.8ZM417.8,420.7L428.1,421.3L431.0,413.8L423.9,413.5ZM432.7,421.6L443.5,422.2L446.2,414.5L438.8,414.2ZM448.2,422.5L459.5,423.1L462.1,415.3L454.4,414.9ZM464.4,423.4L476.1,424.1L478.6,416.1L470.6,415.7ZM481.3,424.4L493.6,425.1L495.9,416.9L487.5,416.5ZM499.0,425.4L511.8,426.2L513.9,417.8L505.1,417.4ZM517.5,426.5L530.9,427.3L532.8,418.7L523.6,418.2ZM536.8,427.6L550.9,428.4L552.6,419.6L543.0,419.2ZM557.1,428.8L571.9,429.7L573.3,420.6L563.2,420.1ZM578.4,430.0L594.0,430.9L595.1,421.6L584.5,421.1ZM239.6,402.7L245.4,402.9L249.1,397.6L245.2,397.4ZM247.8,403.0L253.7,403.3L257.4,397.9L253.4,397.7ZM256.3,403.4L262.4,403.7L266.1,398.2L261.9,398.0ZM265.0,403.8L271.3,404.1L274.9,398.5L270.6,398.3ZM274.0,404.2L280.5,404.5L284.1,398.8L279.7,398.6ZM283.3,404.6L290.0,404.9L293.6,399.1L289.0,398.9ZM292.9,405.0L299.8,405.3L303.4,399.4L298.6,399.3ZM302.8,405.4L310.0,405.7L313.5,399.8L308.6,399.6ZM313.1,405.9L320.5,406.2L323.9,400.1L318.9,399.9ZM323.7,406.3L331.3,406.7L334.7,400.5L329.5,400.3ZM334.6,406.8L342.6,407.2L345.9,400.9L340.5,400.7ZM346.0,407.3L354.2,407.7L357.5,401.3L351.9,401.1ZM357.8,407.8L366.3,408.2L369.5,401.7L363.7,401.5ZM370.0,408.4L378.8,408.8L382.0,402.1L376.0,401.9ZM382.7,408.9L391.9,409.3L394.9,402.5L388.7,402.3ZM395.9,409.5L405.4,409.9L408.4,403.0L401.9,402.8ZM409.5,410.1L419.5,410.6L422.3,403.5L415.6,403.2ZM423.8,410.7L434.1,411.2L436.8,403.9L429.8,403.7ZM438.6,411.4L449.3,411.9L452.0,404.5L444.6,404.2ZM454.0,412.1L465.2,412.6L467.7,405.0L460.1,404.7ZM470.1,412.8L481.8,413.3L484.1,405.5L476.2,405.3ZM486.9,413.5L499.1,414.0L501.3,406.1L493.0,405.8ZM504.4,414.3L517.2,414.8L519.2,406.7L510.5,406.4ZM522.8,415.1L536.1,415.7L537.9,407.4L528.8,407.1ZM542.0,415.9L555.9,416.5L557.5,408.0L548.0,407.7ZM562.1,416.8L576.7,417.5L578.0,408.7L568.0,408.4ZM583.2,417.7L598.5,418.4L599.5,409.5L589.1,409.1ZM245.8,395.5L251.6,395.7L255.2,390.4L251.3,390.4ZM254.1,395.7L260.0,395.9L263.6,390.6L259.5,390.5ZM262.5,396.0L268.6,396.2L272.2,390.8L268.0,390.7ZM271.2,396.3L277.5,396.4L281.1,391.0L276.8,390.9ZM280.2,396.5L286.7,396.7L290.2,391.2L285.8,391.1ZM289.5,396.8L296.2,397.0L299.7,391.4L295.1,391.3ZM299.1,397.1L306.0,397.3L309.5,391.6L304.8,391.5ZM309.0,397.4L316.2,397.6L319.6,391.8L314.7,391.7ZM319.3,397.7L326.6,397.9L330.0,392.0L325.0,391.9ZM329.9,398.0L337.5,398.3L340.8,392.2L335.6,392.1ZM340.8,398.4L348.7,398.6L352.0,392.4L346.6,392.3ZM352.2,398.7L360.3,399.0L363.5,392.7L357.9,392.6ZM363.9,399.1L372.4,399.3L375.5,392.9L369.7,392.8ZM376.1,399.4L384.9,399.7L387.9,393.2L381.9,393.1ZM388.7,399.8L397.9,400.1L400.8,393.5L394.6,393.3ZM401.8,400.2L411.3,400.5L414.2,393.7L407.7,393.6ZM415.5,400.6L425.3,400.9L428.1,394.0L421.4,393.9ZM429.6,401.1L439.9,401.4L442.5,394.3L435.5,394.2ZM444.4,401.5L455.0,401.8L457.6,394.6L450.3,394.5ZM459.7,402.0L470.8,402.3L473.2,395.0L465.6,394.8ZM475.7,402.4L487.3,402.8L489.5,395.3L481.6,395.1ZM492.4,403.0L504.5,403.3L506.5,395.6L498.3,395.5ZM509.8,403.5L522.4,403.9L524.3,396.0L515.7,395.8ZM527.9,404.0L541.2,404.4L542.8,396.4L533.8,396.2ZM547.0,404.6L560.8,405.0L562.2,396.8L552.8,396.6ZM566.9,405.2L581.4,405.6L582.6,397.2L572.7,397.0ZM587.7,405.8L602.9,406.3L603.9,397.7L593.5,397.4ZM251.9,388.5L257.6,388.6L261.2,383.4L257.2,383.4ZM260.1,388.6L266.0,388.7L269.6,383.5L265.5,383.5ZM268.6,388.7L274.7,388.8L278.2,383.6L274.0,383.5ZM277.3,388.9L283.6,389.0L287.1,383.7L282.8,383.6ZM286.3,389.0L292.8,389.2L296.2,383.7L291.8,383.7ZM295.6,389.2L302.3,389.3L305.7,383.8L301.1,383.8ZM305.2,389.4L312.1,389.5L315.5,383.9L310.7,383.8ZM315.1,389.5L322.2,389.7L325.6,384.0L320.7,383.9ZM325.3,389.7L332.7,389.8L336.0,384.0L330.9,384.0ZM335.9,389.9L343.5,390.0L346.8,384.1L341.5,384.1ZM346.8,390.1L354.7,390.2L357.9,384.2L352.5,384.2ZM358.2,390.3L366.3,390.4L369.4,384.3L363.8,384.3ZM369.9,390.5L378.3,390.6L381.4,384.4L375.6,384.4ZM382.0,390.7L390.8,390.8L393.7,384.5L387.7,384.5ZM394.6,390.9L403.7,391.1L406.6,384.6L400.4,384.6ZM407.7,391.1L417.1,391.3L419.9,384.7L413.4,384.7ZM421.2,391.4L431.0,391.5L433.7,384.8L427.0,384.8ZM435.3,391.6L445.5,391.8L448.1,384.9L441.1,384.9ZM450.0,391.9L460.6,392.1L463.0,385.1L455.8,385.0ZM465.2,392.1L476.3,392.3L478.6,385.2L471.0,385.1ZM481.1,392.4L492.6,392.6L494.8,385.3L486.9,385.3ZM497.7,392.7L509.7,392.9L511.6,385.5L503.5,385.4ZM514.9,393.0L527.5,393.2L529.3,385.6L520.7,385.5ZM532.9,393.3L546.0,393.5L547.6,385.7L538.7,385.7ZM551.8,393.6L565.5,393.9L566.9,385.9L557.5,385.8ZM571.5,394.0L585.9,394.2L587.0,386.1L577.2,386.0ZM592.1,394.3L607.2,394.6L608.0,386.2L597.8,386.2ZM257.9,381.6L263.6,381.6L267.1,376.6L263.1,376.6ZM266.1,381.6L272.0,381.6L275.4,376.5L271.4,376.6ZM274.6,381.6L280.7,381.7L284.1,376.5L279.9,376.5ZM283.3,381.7L289.6,381.7L293.0,376.5L288.7,376.5ZM292.3,381.7L298.8,381.7L302.1,376.4L297.7,376.5ZM301.6,381.8L308.3,381.8L311.6,376.4L307.0,376.4ZM311.2,381.8L318.1,381.8L321.3,376.4L316.6,376.4ZM321.1,381.9L328.2,381.9L331.4,376.3L326.5,376.3ZM331.3,381.9L338.6,381.9L341.8,376.3L336.8,376.3ZM341.8,382.0L349.4,382.0L352.6,376.2L347.4,376.3ZM352.7,382.0L360.6,382.0L363.7,376.2L358.3,376.2ZM364.0,382.1L372.2,382.1L375.2,376.1L369.6,376.2ZM375.7,382.1L384.1,382.2L387.1,376.1L381.3,376.1ZM387.8,382.2L396.5,382.2L399.4,376.0L393.4,376.1ZM400.4,382.2L409.4,382.3L412.2,376.0L406.0,376.0ZM413.4,382.3L422.8,382.3L425.4,375.9L419.0,376.0ZM426.9,382.4L436.6,382.4L439.2,375.9L432.5,375.9ZM440.9,382.4L451.0,382.5L453.5,375.8L446.6,375.8ZM455.5,382.5L466.0,382.5L468.3,375.8L461.1,375.8ZM470.6,382.6L481.6,382.6L483.8,375.7L476.3,375.7ZM486.4,382.6L497.8,382.7L499.9,375.6L492.1,375.7ZM502.8,382.7L514.7,382.8L516.6,375.6L508.5,375.6ZM519.9,382.8L532.4,382.9L534.1,375.5L525.6,375.5ZM537.8,382.9L550.8,382.9L552.3,375.4L543.5,375.4ZM556.5,383.0L570.1,383.0L571.3,375.3L562.1,375.4ZM576.0,383.1L590.2,383.1L591.3,375.3L581.6,375.3ZM596.4,383.2L611.3,383.2L612.1,375.2L602.0,375.2ZM263.7,374.8L269.4,374.7L272.8,369.9L268.9,369.9ZM271.9,374.7L277.9,374.7L281.2,369.7L277.1,369.8ZM280.4,374.7L286.5,374.6L289.8,369.6L285.7,369.6ZM289.2,374.6L295.4,374.6L298.7,369.4L294.4,369.5ZM298.2,374.5L304.6,374.5L307.9,369.3L303.5,369.4ZM307.4,374.5L314.1,374.4L317.3,369.1L312.8,369.2ZM317.0,374.4L323.9,374.3L327.1,369.0L322.4,369.1ZM326.9,374.3L334.0,374.3L337.1,368.8L332.3,368.9ZM337.1,374.3L344.4,374.2L347.5,368.7L342.5,368.8ZM347.6,374.2L355.2,374.1L358.2,368.5L353.0,368.6ZM358.5,374.1L366.3,374.0L369.3,368.3L364.0,368.4ZM369.8,374.0L377.9,374.0L380.8,368.1L375.2,368.2ZM381.4,373.9L389.8,373.9L392.7,368.0L386.9,368.1ZM393.5,373.8L402.2,373.8L404.9,367.8L399.0,367.9ZM406.0,373.7L415.0,373.7L417.7,367.6L411.5,367.7ZM418.9,373.7L428.3,373.6L430.9,367.4L424.5,367.5ZM432.4,373.6L442.1,373.5L444.5,367.1L437.9,367.2ZM446.3,373.5L456.4,373.4L458.8,366.9L451.9,367.0ZM460.8,373.3L471.3,373.3L473.5,366.7L466.4,366.8ZM475.8,373.2L486.7,373.2L488.9,366.4L481.4,366.6ZM491.5,373.1L502.9,373.0L504.8,366.2L497.1,366.3ZM507.8,373.0L519.6,372.9L521.4,365.9L513.4,366.1ZM524.8,372.9L537.1,372.8L538.8,365.7L530.4,365.8ZM542.5,372.8L555.4,372.7L556.8,365.4L548.1,365.5ZM561.0,372.6L574.5,372.5L575.7,365.1L566.5,365.2ZM580.4,372.5L594.4,372.4L595.4,364.8L585.8,364.9ZM600.6,372.3L615.3,372.2L616.0,364.4L606.0,364.6ZM269.4,368.1L275.2,368.0L278.5,363.2L274.5,363.4ZM277.7,368.0L283.6,367.9L286.9,363.0L282.8,363.1ZM286.2,367.8L292.2,367.7L295.5,362.8L291.3,362.9ZM294.9,367.7L301.2,367.6L304.4,362.5L300.1,362.7ZM303.9,367.5L310.4,367.4L313.5,362.3L309.1,362.4ZM313.2,367.3L319.8,367.2L323.0,362.0L318.4,362.2ZM322.7,367.1L329.6,367.0L332.7,361.8L328.0,361.9ZM332.6,367.0L339.7,366.8L342.7,361.5L337.9,361.6ZM342.8,366.8L350.1,366.6L353.1,361.2L348.1,361.4ZM353.3,366.6L360.8,366.4L363.8,360.9L358.6,361.1ZM364.1,366.4L372.0,366.2L374.9,360.6L369.5,360.8ZM375.4,366.2L383.5,366.0L386.3,360.3L380.7,360.5ZM387.0,365.9L395.3,365.8L398.1,360.0L392.4,360.2ZM399.0,365.7L407.7,365.5L410.3,359.7L404.4,359.8ZM411.4,365.5L420.4,365.3L423.0,359.3L416.9,359.5ZM424.3,365.2L433.6,365.1L436.1,359.0L429.8,359.2ZM437.7,365.0L447.4,364.8L449.8,358.6L443.2,358.8ZM451.6,364.7L461.6,364.5L463.9,358.2L457.0,358.4ZM466.0,364.4L476.4,364.2L478.6,357.8L471.4,358.0ZM480.9,364.2L491.8,364.0L493.8,357.4L486.4,357.6ZM496.5,363.9L507.8,363.7L509.7,357.0L502.0,357.2ZM512.7,363.6L524.4,363.3L526.2,356.6L518.1,356.8ZM529.6,363.2L541.8,363.0L543.3,356.1L535.0,356.3ZM547.1,362.9L559.9,362.7L561.2,355.6L552.6,355.8ZM565.5,362.6L578.8,362.3L579.9,355.1L570.9,355.4ZM584.6,362.2L598.5,361.9L599.4,354.6L590.0,354.8ZM604.6,361.8L619.2,361.6L619.8,354.0L609.9,354.3ZM275.1,361.6L280.8,361.5L284.0,356.8L280.1,356.9ZM283.3,361.4L289.2,361.2L292.4,356.5L288.3,356.6ZM291.8,361.1L297.9,361.0L301.0,356.1L296.9,356.3ZM300.5,360.9L306.8,360.7L309.9,355.8L305.6,356.0ZM309.5,360.6L316.0,360.4L319.1,355.4L314.6,355.6ZM318.8,360.3L325.4,360.1L328.5,355.1L323.9,355.3ZM328.3,360.0L335.2,359.8L338.2,354.7L333.5,354.9ZM338.2,359.7L345.2,359.5L348.2,354.3L343.4,354.5ZM348.3,359.4L355.6,359.2L358.6,354.0L353.6,354.1ZM358.8,359.1L366.4,358.9L369.2,353.5L364.1,353.7ZM369.7,358.8L377.4,358.6L380.3,353.1L374.9,353.3ZM380.8,358.5L388.9,358.2L391.6,352.7L386.1,352.9ZM392.4,358.1L400.8,357.9L403.4,352.3L397.7,352.5ZM404.4,357.8L413.0,357.5L415.6,351.8L409.7,352.0ZM416.8,357.4L425.7,357.1L428.2,351.3L422.1,351.5ZM429.6,357.0L438.9,356.7L441.3,350.8L435.0,351.1ZM442.9,356.6L452.5,356.3L454.8,350.3L448.3,350.6ZM456.7,356.2L466.7,355.9L468.9,349.8L462.1,350.0ZM471.0,355.8L481.4,355.5L483.5,349.2L476.4,349.5ZM485.9,355.3L496.7,355.0L498.6,348.7L491.3,348.9ZM501.4,354.9L512.6,354.5L514.4,348.1L506.7,348.3ZM517.4,354.4L529.1,354.0L530.7,347.4L522.8,347.7ZM534.2,353.9L546.3,353.5L547.8,346.8L539.5,347.1ZM551.6,353.3L564.2,353.0L565.5,346.1L556.9,346.4ZM569.8,352.8L583.0,352.4L584.0,345.4L575.0,345.8ZM588.7,352.2L602.5,351.8L603.4,344.7L594.0,345.0ZM608.5,351.6L622.9,351.2L623.5,343.9L613.7,344.3ZM280.6,355.2L286.3,355.0L289.5,350.4L285.5,350.6ZM288.8,354.9L294.7,354.7L297.8,350.0L293.8,350.2ZM297.3,354.6L303.4,354.3L306.5,349.6L302.3,349.8ZM306.0,354.2L312.3,354.0L315.3,349.2L311.1,349.4ZM315.0,353.8L321.5,353.6L324.5,348.7L320.1,348.9ZM324.3,353.5L330.9,353.2L333.9,348.3L329.3,348.5ZM333.8,353.1L340.7,352.8L343.6,347.8L338.9,348.0ZM343.6,352.7L350.7,352.4L353.6,347.3L348.8,347.6ZM353.8,352.3L361.1,352.0L363.9,346.8L358.9,347.1ZM364.2,351.8L371.8,351.5L374.6,346.3L369.4,346.6ZM375.0,351.4L382.8,351.1L385.5,345.8L380.2,346.0ZM386.2,350.9L394.2,350.6L396.9,345.2L391.4,345.5ZM397.7,350.5L406.0,350.1L408.6,344.7L403.0,344.9ZM409.7,350.0L418.3,349.6L420.8,344.1L414.9,344.4ZM422.0,349.5L430.9,349.1L433.3,343.5L427.3,343.8ZM434.8,349.0L444.0,348.6L446.3,342.8L440.0,343.2ZM448.0,348.4L457.6,348.0L459.8,342.2L453.3,342.5ZM461.7,347.9L471.7,347.5L473.8,341.5L467.0,341.8ZM476.0,347.3L486.3,346.9L488.3,340.8L481.2,341.2ZM490.8,346.7L501.4,346.3L503.3,340.1L496.0,340.5ZM506.1,346.1L517.2,345.6L518.9,339.3L511.4,339.7ZM522.1,345.4L533.6,345.0L535.2,338.6L527.3,338.9ZM538.7,344.7L550.7,344.3L552.1,337.7L543.9,338.1ZM555.9,344.0L568.5,343.5L569.7,336.9L561.1,337.3ZM573.9,343.3L587.0,342.8L588.0,336.0L579.1,336.4ZM592.7,342.5L606.4,342.0L607.2,335.1L597.9,335.5ZM612.3,341.7L626.6,341.2L627.1,334.1L617.4,334.6ZM286.0,349.0L291.7,348.7L294.8,344.2L290.9,344.4ZM294.2,348.5L300.1,348.2L303.2,343.7L299.1,343.9ZM302.7,348.1L308.8,347.8L311.8,343.2L307.6,343.4ZM311.4,347.7L317.7,347.4L320.7,342.7L316.4,342.9ZM320.4,347.2L326.9,346.9L329.8,342.1L325.4,342.4ZM329.7,346.7L336.3,346.4L339.2,341.6L334.6,341.9ZM339.2,346.3L346.0,345.9L348.9,341.0L344.2,341.3ZM349.0,345.8L356.0,345.4L358.9,340.4L354.0,340.7ZM359.1,345.2L366.4,344.9L369.1,339.8L364.2,340.1ZM369.5,344.7L377.1,344.3L379.8,339.2L374.6,339.5ZM380.3,344.2L388.1,343.8L390.7,338.6L385.4,338.9ZM391.4,343.6L399.5,343.2L402.0,337.9L396.6,338.2ZM402.9,343.0L411.2,342.6L413.7,337.2L408.1,337.6ZM414.8,342.4L423.4,342.0L425.8,336.5L420.0,336.9ZM427.1,341.8L436.0,341.3L438.3,335.8L432.3,336.2ZM439.8,341.1L449.0,340.7L451.3,335.1L445.0,335.4ZM453.0,340.5L462.5,340.0L464.7,334.3L458.2,334.7ZM466.6,339.8L476.5,339.3L478.5,333.5L471.8,333.9ZM480.8,339.0L491.0,338.5L492.9,332.6L486.0,333.0ZM495.5,338.3L506.1,337.7L507.9,331.8L500.6,332.2ZM510.7,337.5L521.7,336.9L523.4,330.9L515.9,331.3ZM526.6,336.7L538.0,336.1L539.5,329.9L531.7,330.4ZM543.0,335.9L555.0,335.3L556.3,328.9L548.2,329.4ZM560.2,335.0L572.6,334.4L573.7,327.9L565.3,328.4ZM578.0,334.1L591.0,333.4L591.9,326.9L583.1,327.4ZM596.6,333.1L610.1,332.4L610.8,325.8L601.7,326.3ZM616.0,332.1L630.1,331.4L630.6,324.6L621.0,325.2ZM291.3,342.8L297.1,342.5L300.1,338.0L296.1,338.3ZM299.6,342.3L305.5,341.9L308.4,337.5L304.4,337.8ZM308.0,341.8L314.1,341.4L317.0,336.9L312.9,337.2ZM316.7,341.3L323.0,340.9L325.9,336.3L321.6,336.6ZM325.7,340.7L332.1,340.3L335.0,335.7L330.6,336.0ZM334.9,340.2L341.6,339.7L344.4,335.0L339.9,335.3ZM344.4,339.6L351.3,339.2L354.1,334.4L349.4,334.7ZM354.2,339.0L361.3,338.5L364.0,333.7L359.2,334.0ZM364.3,338.4L371.6,337.9L374.3,333.0L369.3,333.3ZM374.7,337.7L382.2,337.3L384.9,332.3L379.7,332.6ZM385.5,337.1L393.2,336.6L395.8,331.5L390.5,331.9ZM396.6,336.4L404.6,335.9L407.1,330.8L401.6,331.1ZM408.0,335.7L416.3,335.2L418.7,330.0L413.1,330.4ZM419.9,335.0L428.4,334.5L430.7,329.2L424.9,329.6ZM432.1,334.2L440.9,333.7L443.2,328.3L437.2,328.7ZM444.8,333.5L453.9,332.9L456.1,327.4L449.8,327.9ZM457.9,332.7L467.3,332.1L469.4,326.5L462.9,327.0ZM471.4,331.8L481.2,331.2L483.2,325.6L476.5,326.1ZM485.5,331.0L495.7,330.4L497.5,324.6L490.6,325.1ZM500.1,330.1L510.6,329.4L512.4,323.6L505.2,324.1ZM515.2,329.2L526.2,328.5L527.8,322.6L520.3,323.1ZM530.9,328.2L542.3,327.5L543.8,321.5L536.0,322.0ZM547.3,327.2L559.1,326.5L560.4,320.4L552.3,320.9ZM564.3,326.2L576.6,325.4L577.7,319.2L569.3,319.8ZM582.0,325.1L594.8,324.3L595.7,318.0L586.9,318.6ZM600.4,324.0L613.8,323.2L614.4,316.7L605.3,317.3ZM619.6,322.8L633.5,322.0L634.0,315.4L624.5,316.0ZM296.5,336.8L302.3,336.4L305.2,332.0L301.3,332.3ZM304.8,336.2L310.7,335.8L313.6,331.4L309.5,331.7ZM313.2,335.6L319.3,335.2L322.2,330.7L318.0,331.0ZM321.9,335.0L328.2,334.5L331.0,330.0L326.7,330.4ZM330.9,334.3L337.3,333.9L340.1,329.3L335.7,329.7ZM340.1,333.7L346.7,333.2L349.5,328.6L345.0,329.0ZM349.6,333.0L356.4,332.5L359.1,327.9L354.5,328.2ZM359.4,332.3L366.4,331.8L369.1,327.1L364.3,327.5ZM369.5,331.6L376.7,331.1L379.3,326.3L374.3,326.7ZM379.8,330.9L387.3,330.4L389.9,325.5L384.7,325.9ZM390.5,330.1L398.2,329.6L400.7,324.6L395.5,325.1ZM401.6,329.4L409.5,328.8L412.0,323.8L406.5,324.2ZM413.0,328.5L421.2,328.0L423.6,322.9L418.0,323.3ZM424.8,327.7L433.3,327.1L435.6,322.0L429.8,322.4ZM437.0,326.9L445.8,326.2L447.9,321.0L442.0,321.5ZM449.6,326.0L458.7,325.3L460.8,320.0L454.6,320.5ZM462.6,325.1L472.0,324.4L474.0,319.0L467.6,319.5ZM476.1,324.1L485.8,323.4L487.7,317.9L481.1,318.4ZM490.1,323.1L500.2,322.4L502.0,316.8L495.1,317.4ZM504.6,322.1L515.0,321.4L516.7,315.7L509.6,316.2ZM519.6,321.0L530.5,320.3L532.0,314.5L524.6,315.1ZM535.2,319.9L546.5,319.1L547.9,313.3L540.2,313.9ZM551.4,318.8L563.2,318.0L564.4,312.0L556.4,312.6ZM568.3,317.6L580.5,316.7L581.5,310.7L573.2,311.3ZM585.8,316.4L598.5,315.5L599.3,309.3L590.7,310.0ZM604.1,315.1L617.3,314.1L617.9,307.9L608.9,308.6ZM623.1,313.7L636.9,312.8L637.3,306.4L627.9,307.1ZM301.7,330.8L307.4,330.4L310.3,326.1L306.3,326.5ZM309.9,330.2L315.8,329.7L318.6,325.4L314.6,325.8ZM318.4,329.5L324.4,329.0L327.2,324.7L323.1,325.0ZM327.1,328.8L333.3,328.3L336.1,323.9L331.8,324.3ZM336.0,328.1L342.4,327.6L345.1,323.1L340.7,323.5ZM345.2,327.3L351.8,326.8L354.5,322.3L350.0,322.7ZM354.7,326.6L361.5,326.0L364.1,321.5L359.5,321.9ZM364.4,325.8L371.4,325.3L374.0,320.6L369.2,321.0ZM374.5,325.0L381.7,324.4L384.2,319.7L379.3,320.2ZM384.8,324.2L392.3,323.6L394.7,318.8L389.7,319.3ZM395.5,323.3L403.2,322.7L405.6,317.9L400.3,318.3ZM406.5,322.5L414.4,321.8L416.8,316.9L411.4,317.4ZM417.9,321.5L426.1,320.9L428.3,315.9L422.8,316.4ZM429.6,320.6L438.1,319.9L440.3,314.9L434.5,315.4ZM441.7,319.6L450.5,318.9L452.6,313.8L446.6,314.4ZM454.3,318.6L463.3,317.9L465.4,312.7L459.2,313.3ZM467.2,317.6L476.6,316.9L478.5,311.6L472.2,312.2ZM480.7,316.5L490.3,315.8L492.2,310.4L485.6,311.0ZM494.6,315.4L504.6,314.6L506.3,309.2L499.5,309.8ZM509.0,314.3L519.4,313.5L521.0,307.9L513.9,308.6ZM523.9,313.1L534.7,312.2L536.1,306.6L528.8,307.3ZM539.4,311.9L550.6,311.0L551.9,305.3L544.3,305.9ZM555.5,310.6L567.1,309.6L568.2,303.9L560.3,304.5ZM572.2,309.2L584.3,308.3L585.2,302.4L577.0,303.1ZM589.6,307.9L602.1,306.9L602.9,300.9L594.4,301.6ZM607.6,306.4L620.7,305.4L621.3,299.3L612.4,300.0ZM626.5,304.9L640.1,303.8L640.5,297.6L631.2,298.4ZM306.7,325.0L312.4,324.5L315.2,320.3L311.3,320.7ZM314.9,324.3L320.8,323.7L323.6,319.5L319.5,319.9ZM323.4,323.5L329.4,323.0L332.2,318.7L328.0,319.1ZM332.1,322.7L338.3,322.2L341.0,317.9L336.7,318.3ZM341.0,321.9L347.4,321.4L350.1,317.0L345.7,317.4ZM350.2,321.1L356.8,320.5L359.4,316.1L354.9,316.6ZM359.6,320.3L366.4,319.7L369.0,315.2L364.3,315.7ZM369.4,319.4L376.3,318.8L378.9,314.3L374.1,314.7ZM379.4,318.5L386.6,317.9L389.1,313.3L384.1,313.8ZM389.7,317.6L397.1,317.0L399.5,312.3L394.5,312.8ZM400.3,316.7L408.0,316.0L410.4,311.3L405.1,311.8ZM411.3,315.7L419.2,315.0L421.5,310.2L416.1,310.7ZM422.6,314.7L430.8,314.0L433.0,309.1L427.4,309.7ZM434.3,313.7L442.7,312.9L444.9,308.0L439.1,308.5ZM446.4,312.6L455.1,311.8L457.2,306.8L451.2,307.4ZM458.9,311.5L467.9,310.7L469.8,305.6L463.7,306.2ZM471.8,310.3L481.1,309.5L483.0,304.4L476.6,305.0ZM485.1,309.2L494.7,308.3L496.5,303.1L489.9,303.7ZM498.9,307.9L508.9,307.1L510.6,301.8L503.8,302.4ZM513.2,306.7L523.6,305.7L525.1,300.4L518.1,301.1ZM528.1,305.3L538.8,304.4L540.2,298.9L532.9,299.6ZM543.5,304.0L554.6,303.0L555.8,297.5L548.2,298.2ZM559.4,302.6L570.9,301.5L572.0,295.9L564.2,296.7ZM576.0,301.1L588.0,300.0L588.9,294.3L580.7,295.1ZM593.2,299.6L605.7,298.5L606.4,292.7L597.9,293.5ZM611.1,298.0L624.1,296.8L624.6,290.9L615.8,291.8ZM629.8,296.3L643.3,295.1L643.6,289.1L634.4,290.0ZM311.7,319.3L317.4,318.7L320.1,314.6L316.2,315.0ZM319.9,318.5L325.8,317.9L328.5,313.8L324.4,314.2ZM328.3,317.6L334.4,317.0L337.0,312.9L332.9,313.3ZM337.0,316.8L343.2,316.2L345.8,312.0L341.6,312.4ZM345.9,315.9L352.3,315.3L354.9,311.0L350.5,311.5ZM355.1,315.0L361.6,314.4L364.2,310.1L359.7,310.5ZM364.5,314.1L371.3,313.4L373.8,309.1L369.1,309.6ZM374.2,313.2L381.2,312.5L383.6,308.1L378.9,308.5ZM384.2,312.2L391.4,311.5L393.8,307.0L388.9,307.5ZM394.5,311.2L401.9,310.5L404.2,305.9L399.2,306.4ZM405.1,310.2L412.7,309.4L415.0,304.8L409.8,305.3ZM416.0,309.1L423.9,308.3L426.1,303.7L420.7,304.2ZM427.3,308.0L435.4,307.2L437.6,302.5L432.0,303.0ZM439.0,306.9L447.3,306.0L449.4,301.2L443.7,301.8ZM451.0,305.7L459.6,304.9L461.6,300.0L455.7,300.6ZM463.4,304.5L472.3,303.6L474.2,298.7L468.1,299.3ZM476.2,303.2L485.5,302.3L487.3,297.3L481.0,298.0ZM489.5,301.9L499.0,301.0L500.8,295.9L494.2,296.6ZM503.2,300.6L513.1,299.6L514.7,294.5L507.9,295.2ZM517.4,299.2L527.7,298.2L529.1,293.0L522.2,293.7ZM532.2,297.8L542.8,296.8L544.1,291.5L536.9,292.2ZM547.4,296.3L558.4,295.2L559.6,289.8L552.1,290.6ZM563.3,294.8L574.7,293.7L575.7,288.2L567.9,289.0ZM579.7,293.2L591.6,292.0L592.4,286.5L584.3,287.3ZM596.8,291.5L609.1,290.3L609.8,284.7L601.4,285.5ZM614.5,289.8L627.4,288.5L627.8,282.8L619.1,283.7ZM633.0,288.0L646.4,286.7L646.6,280.8L637.5,281.8Z" fill="#e6724c"/><path d="M229.3,415.8L231.9,416.0L234.5,413.0L232.3,412.8ZM237.6,416.4L240.2,416.5L242.8,413.5L240.6,413.3ZM246.0,416.9L248.8,417.1L251.4,414.0L249.0,413.9ZM254.8,417.5L257.6,417.7L260.2,414.6L257.8,414.4ZM263.8,418.2L266.7,418.4L269.3,415.2L266.8,415.0ZM273.1,418.8L276.1,419.0L278.7,415.8L276.2,415.6ZM282.7,419.5L285.9,419.7L288.5,416.4L285.8,416.2ZM292.7,420.2L295.9,420.4L298.5,417.0L295.8,416.8ZM303.0,420.9L306.4,421.1L309.0,417.7L306.1,417.5ZM313.7,421.6L317.2,421.9L319.7,418.4L316.8,418.2ZM324.7,422.4L328.3,422.7L330.9,419.1L327.9,418.9ZM336.2,423.2L339.9,423.5L342.5,419.8L339.3,419.6ZM348.0,424.0L351.9,424.3L354.5,420.6L351.2,420.4ZM360.4,424.9L364.4,425.2L367.0,421.4L363.6,421.1ZM373.2,425.8L377.4,426.1L379.9,422.2L376.4,422.0ZM386.5,426.7L390.9,427.0L393.4,423.0L389.7,422.8ZM400.4,427.7L404.9,428.0L407.4,423.9L403.6,423.7ZM414.8,428.7L419.5,429.0L422.0,424.9L418.0,424.6ZM429.8,429.7L434.8,430.1L437.2,425.8L433.0,425.6ZM445.5,430.8L450.7,431.2L453.0,426.8L448.7,426.6ZM461.9,431.9L467.2,432.3L469.6,427.9L465.0,427.6ZM478.9,433.1L484.6,433.5L486.9,429.0L482.1,428.7ZM496.8,434.4L502.7,434.8L505.0,430.1L500.0,429.8ZM515.5,435.7L521.7,436.1L523.9,431.3L518.7,431.0ZM535.2,437.0L541.6,437.5L543.7,432.6L538.3,432.2ZM555.7,438.5L562.5,438.9L564.5,433.9L558.8,433.5ZM577.3,440.0L584.5,440.5L586.4,435.3L580.4,434.9ZM235.8,408.3L238.4,408.5L240.9,405.5L238.7,405.4ZM244.0,408.8L246.7,408.9L249.2,405.9L246.9,405.8ZM252.5,409.3L255.2,409.4L257.8,406.4L255.4,406.2ZM261.2,409.7L264.1,409.9L266.6,406.8L264.2,406.7ZM270.2,410.2L273.2,410.4L275.7,407.2L273.2,407.1ZM279.6,410.7L282.6,410.9L285.2,407.7L282.6,407.6ZM289.2,411.3L292.3,411.4L294.9,408.2L292.2,408.0ZM299.1,411.8L302.4,412.0L305.0,408.7L302.2,408.5ZM309.4,412.4L312.8,412.6L315.4,409.2L312.5,409.0ZM320.1,413.0L323.6,413.1L326.1,409.7L323.2,409.6ZM331.1,413.6L334.8,413.8L337.3,410.3L334.2,410.1ZM342.6,414.2L346.3,414.4L348.8,410.8L345.7,410.7ZM354.4,414.8L358.3,415.0L360.8,411.4L357.5,411.3ZM366.7,415.5L370.8,415.7L373.3,412.0L369.9,411.9ZM379.5,416.2L383.7,416.4L386.2,412.7L382.6,412.5ZM392.8,416.9L397.1,417.2L399.6,413.3L395.9,413.1ZM406.6,417.7L411.1,417.9L413.5,414.0L409.7,413.8ZM420.9,418.5L425.6,418.7L428.0,414.7L424.1,414.5ZM435.9,419.3L440.8,419.6L443.1,415.5L439.0,415.3ZM451.4,420.2L456.6,420.4L458.9,416.2L454.6,416.0ZM467.7,421.0L473.1,421.3L475.3,417.0L470.8,416.8ZM484.7,422.0L490.3,422.3L492.5,417.9L487.8,417.6ZM502.4,422.9L508.3,423.3L510.4,418.8L505.5,418.5ZM521.0,424.0L527.1,424.3L529.2,419.7L524.0,419.4ZM540.4,425.0L546.8,425.4L548.8,420.6L543.4,420.4ZM560.8,426.1L567.5,426.5L569.4,421.7L563.8,421.4ZM582.2,427.3L589.2,427.7L591.1,422.7L585.1,422.4ZM242.1,401.0L244.7,401.1L247.1,398.3L244.9,398.2ZM250.3,401.4L253.0,401.5L255.5,398.5L253.2,398.5ZM258.8,401.7L261.5,401.8L264.0,398.8L261.7,398.8ZM267.5,402.1L270.4,402.2L272.9,399.2L270.5,399.1ZM276.6,402.4L279.5,402.6L282.0,399.5L279.5,399.4ZM285.9,402.8L288.9,402.9L291.4,399.8L288.9,399.7ZM295.5,403.2L298.7,403.3L301.2,400.2L298.5,400.1ZM305.5,403.6L308.7,403.8L311.2,400.5L308.5,400.4ZM315.8,404.0L319.1,404.2L321.6,400.9L318.8,400.8ZM326.4,404.5L329.9,404.6L332.4,401.3L329.4,401.2ZM337.4,404.9L341.0,405.1L343.5,401.6L340.5,401.5ZM348.8,405.4L352.6,405.5L355.0,402.1L351.9,401.9ZM360.7,405.9L364.5,406.0L367.0,402.5L363.7,402.4ZM372.9,406.4L376.9,406.5L379.4,402.9L376.0,402.8ZM385.6,406.9L389.8,407.1L392.2,403.4L388.7,403.2ZM398.9,407.4L403.2,407.6L405.6,403.8L401.9,403.7ZM412.6,408.0L417.1,408.2L419.5,404.3L415.7,404.2ZM426.9,408.6L431.6,408.8L433.9,404.8L430.0,404.7ZM441.8,409.2L446.6,409.4L448.9,405.4L444.8,405.2ZM457.2,409.8L462.3,410.0L464.6,405.9L460.3,405.8ZM473.4,410.5L478.7,410.7L480.9,406.5L476.4,406.3ZM490.2,411.1L495.8,411.4L497.9,407.1L493.3,406.9ZM507.8,411.9L513.6,412.1L515.7,407.7L510.9,407.5ZM526.2,412.6L532.3,412.9L534.3,408.4L529.2,408.2ZM545.5,413.4L551.8,413.6L553.8,409.1L548.5,408.9ZM565.7,414.2L572.3,414.5L574.2,409.8L568.6,409.6ZM586.8,415.1L593.8,415.4L595.6,410.5L589.7,410.3ZM248.2,393.9L250.8,394.0L253.3,391.1L251.1,391.1ZM256.5,394.1L259.2,394.2L261.6,391.3L259.3,391.3ZM265.0,394.3L267.7,394.4L270.2,391.5L267.8,391.4ZM273.7,394.6L276.6,394.7L279.0,391.7L276.6,391.6ZM282.8,394.8L285.7,394.9L288.2,391.9L285.7,391.8ZM292.1,395.1L295.1,395.2L297.6,392.1L295.0,392.0ZM301.7,395.3L304.9,395.4L307.3,392.3L304.6,392.2ZM311.7,395.6L314.9,395.7L317.3,392.5L314.6,392.5ZM321.9,395.9L325.3,396.0L327.7,392.8L324.9,392.7ZM332.6,396.2L336.0,396.3L338.5,393.0L335.5,392.9ZM343.6,396.5L347.2,396.6L349.6,393.2L346.5,393.2ZM354.9,396.8L358.7,396.9L361.1,393.5L357.9,393.4ZM366.7,397.1L370.6,397.2L373.0,393.8L369.7,393.7ZM379.0,397.4L383.0,397.6L385.3,394.0L382.0,394.0ZM391.6,397.8L395.8,397.9L398.2,394.3L394.6,394.2ZM404.8,398.1L409.1,398.3L411.5,394.6L407.8,394.5ZM418.5,398.5L423.0,398.6L425.3,394.9L421.5,394.8ZM432.7,398.9L437.4,399.0L439.6,395.2L435.7,395.1ZM447.5,399.3L452.3,399.4L454.6,395.5L450.5,395.5ZM462.9,399.7L467.9,399.9L470.1,395.9L465.9,395.8ZM478.9,400.2L484.2,400.3L486.3,396.2L481.9,396.1ZM495.6,400.6L501.1,400.8L503.2,396.6L498.6,396.5ZM513.1,401.1L518.8,401.3L520.9,397.0L516.0,396.9ZM531.3,401.6L537.3,401.8L539.3,397.4L534.3,397.3ZM550.4,402.1L556.7,402.3L558.6,397.8L553.3,397.7ZM570.4,402.7L577.0,402.8L578.8,398.3L573.3,398.2ZM591.3,403.2L598.2,403.4L600.0,398.7L594.1,398.6ZM254.3,386.9L256.9,386.9L259.3,384.1L257.1,384.1ZM262.5,387.0L265.2,387.0L267.6,384.2L265.3,384.2ZM271.0,387.1L273.8,387.1L276.2,384.3L273.8,384.3ZM279.8,387.2L282.6,387.3L285.0,384.4L282.6,384.3ZM288.8,387.4L291.8,387.4L294.2,384.4L291.7,384.4ZM298.1,387.5L301.2,387.5L303.6,384.5L301.0,384.5ZM307.8,387.6L310.9,387.7L313.3,384.6L310.6,384.6ZM317.7,387.8L321.0,387.8L323.3,384.7L320.6,384.7ZM328.0,387.9L331.3,388.0L333.7,384.8L330.9,384.8ZM338.6,388.1L342.0,388.1L344.4,384.9L341.5,384.9ZM349.6,388.2L353.1,388.3L355.5,385.0L352.5,385.0ZM360.9,388.4L364.6,388.4L367.0,385.1L363.8,385.1ZM372.7,388.6L376.5,388.6L378.9,385.2L375.6,385.2ZM384.9,388.7L388.8,388.8L391.2,385.4L387.8,385.3ZM397.5,388.9L401.6,389.0L403.9,385.5L400.4,385.4ZM410.6,389.1L414.9,389.2L417.2,385.6L413.5,385.6ZM424.2,389.3L428.7,389.4L430.9,385.7L427.2,385.7ZM438.3,389.5L443.0,389.6L445.2,385.9L441.3,385.8ZM453.0,389.7L457.9,389.8L460.1,386.0L456.0,386.0ZM468.3,389.9L473.4,390.0L475.5,386.1L471.3,386.1ZM484.3,390.2L489.5,390.2L491.6,386.3L487.2,386.2ZM500.9,390.4L506.3,390.5L508.4,386.4L503.8,386.4ZM518.2,390.6L523.9,390.7L525.9,386.6L521.1,386.6ZM536.3,390.9L542.3,391.0L544.2,386.8L539.2,386.7ZM555.2,391.2L561.4,391.3L563.3,386.9L558.0,386.9ZM575.0,391.5L581.5,391.6L583.3,387.1L577.8,387.1ZM595.7,391.8L602.5,391.9L604.2,387.3L598.4,387.3ZM260.2,380.0L262.8,380.0L265.2,377.3L262.9,377.3ZM268.5,380.0L271.2,380.0L273.5,377.2L271.2,377.2ZM277.0,380.0L279.7,380.0L282.1,377.2L279.7,377.2ZM285.7,380.0L288.6,380.0L290.9,377.2L288.5,377.2ZM294.8,380.1L297.7,380.1L300.1,377.2L297.6,377.2ZM304.1,380.1L307.1,380.1L309.5,377.1L306.9,377.1ZM313.7,380.1L316.8,380.1L319.2,377.1L316.5,377.1ZM323.6,380.1L326.9,380.1L329.2,377.1L326.5,377.1ZM333.9,380.1L337.2,380.1L339.5,377.0L336.7,377.1ZM344.5,380.1L347.9,380.2L350.2,377.0L347.3,377.0ZM355.4,380.2L359.0,380.2L361.3,377.0L358.3,377.0ZM366.7,380.2L370.4,380.2L372.7,377.0L369.6,377.0ZM378.5,380.2L382.3,380.2L384.6,376.9L381.3,376.9ZM390.6,380.2L394.6,380.2L396.8,376.9L393.5,376.9ZM403.2,380.3L407.3,380.3L409.6,376.8L406.1,376.9ZM416.2,380.3L420.5,380.3L422.7,376.8L419.1,376.8ZM429.8,380.3L434.2,380.3L436.4,376.8L432.7,376.8ZM443.9,380.3L448.5,380.3L450.6,376.7L446.7,376.7ZM458.5,380.4L463.3,380.4L465.4,376.7L461.4,376.7ZM473.7,380.4L478.7,380.4L480.8,376.6L476.5,376.7ZM489.5,380.4L494.7,380.4L496.7,376.6L492.4,376.6ZM506.0,380.5L511.4,380.5L513.4,376.5L508.8,376.6ZM523.2,380.5L528.8,380.5L530.8,376.5L526.0,376.5ZM541.1,380.5L547.0,380.5L548.9,376.4L543.9,376.5ZM559.8,380.6L566.0,380.6L567.8,376.4L562.6,376.4ZM579.4,380.6L585.9,380.6L587.6,376.3L582.2,376.3ZM599.9,380.6L606.7,380.7L608.3,376.3L602.6,376.3ZM266.0,373.2L268.6,373.2L270.9,370.5L268.7,370.6ZM274.3,373.2L277.0,373.1L279.3,370.4L277.0,370.4ZM282.8,373.1L285.6,373.0L287.9,370.3L285.5,370.3ZM291.6,373.0L294.4,373.0L296.7,370.2L294.3,370.2ZM300.6,372.9L303.5,372.9L305.8,370.0L303.3,370.1ZM309.9,372.8L312.9,372.8L315.2,369.9L312.7,369.9ZM319.5,372.7L322.6,372.7L324.9,369.7L322.3,369.8ZM329.4,372.6L332.7,372.6L334.9,369.6L332.2,369.6ZM339.6,372.5L343.0,372.5L345.3,369.5L342.4,369.5ZM350.2,372.4L353.7,372.4L355.9,369.3L353.0,369.3ZM361.1,372.3L364.7,372.3L367.0,369.1L364.0,369.2ZM372.4,372.2L376.1,372.1L378.4,369.0L375.3,369.0ZM384.1,372.1L388.0,372.0L390.2,368.8L386.9,368.8ZM396.2,371.9L400.2,371.9L402.4,368.6L399.1,368.7ZM408.8,371.8L412.9,371.8L415.1,368.4L411.6,368.5ZM421.8,371.7L426.0,371.6L428.2,368.2L424.6,368.3ZM435.2,371.5L439.7,371.5L441.8,368.0L438.1,368.1ZM449.2,371.4L453.8,371.4L455.9,367.8L452.1,367.9ZM463.8,371.3L468.5,371.2L470.6,367.6L466.6,367.7ZM478.9,371.1L483.8,371.1L485.9,367.4L481.7,367.5ZM494.6,371.0L499.8,370.9L501.7,367.2L497.4,367.2ZM511.0,370.8L516.3,370.7L518.3,366.9L513.7,367.0ZM528.0,370.6L533.6,370.6L535.5,366.7L530.8,366.7ZM545.8,370.4L551.6,370.4L553.4,366.4L548.5,366.5ZM564.3,370.3L570.5,370.2L572.2,366.1L567.1,366.2ZM583.7,370.1L590.1,370.0L591.8,365.8L586.4,365.9ZM604.0,369.9L610.7,369.8L612.3,365.5L606.6,365.6ZM271.7,366.6L274.3,366.6L276.6,363.9L274.4,364.0ZM280.0,366.4L282.7,366.4L284.9,363.7L282.7,363.8ZM288.5,366.3L291.3,366.2L293.5,363.5L291.2,363.6ZM297.3,366.1L300.1,366.0L302.4,363.3L300.0,363.3ZM306.3,365.9L309.2,365.8L311.5,363.0L309.0,363.1ZM315.6,365.7L318.6,365.6L320.9,362.8L318.3,362.9ZM325.2,365.5L328.3,365.4L330.6,362.5L327.9,362.6ZM335.1,365.3L338.3,365.2L340.6,362.3L337.8,362.4ZM345.3,365.0L348.6,365.0L350.9,362.0L348.0,362.1ZM355.8,364.8L359.3,364.7L361.5,361.7L358.6,361.8ZM366.7,364.6L370.3,364.5L372.5,361.5L369.5,361.5ZM378.0,364.3L381.7,364.3L383.9,361.2L380.8,361.2ZM389.7,364.1L393.5,364.0L395.6,360.9L392.4,360.9ZM401.7,363.8L405.7,363.7L407.8,360.5L404.5,360.6ZM414.2,363.6L418.3,363.5L420.4,360.2L417.0,360.3ZM427.1,363.3L431.4,363.2L433.5,359.9L429.9,360.0ZM440.6,363.0L445.0,362.9L447.0,359.5L443.3,359.6ZM454.5,362.7L459.0,362.6L461.1,359.2L457.2,359.3ZM468.9,362.4L473.7,362.3L475.7,358.8L471.7,358.9ZM483.9,362.1L488.9,362.0L490.8,358.4L486.7,358.5ZM499.5,361.7L504.7,361.6L506.6,358.0L502.3,358.1ZM515.8,361.4L521.1,361.3L523.0,357.6L518.5,357.7ZM532.7,361.0L538.3,360.9L540.1,357.1L535.4,357.2ZM550.3,360.6L556.1,360.5L557.9,356.6L553.0,356.8ZM568.7,360.2L574.8,360.1L576.5,356.2L571.4,356.3ZM587.9,359.8L594.2,359.7L595.9,355.7L590.5,355.8ZM608.0,359.4L614.6,359.3L616.1,355.1L610.6,355.3ZM277.3,360.1L279.9,360.0L282.2,357.5L279.9,357.5ZM285.6,359.9L288.3,359.8L290.5,357.2L288.2,357.2ZM294.1,359.6L296.9,359.5L299.1,356.8L296.7,356.9ZM302.9,359.3L305.7,359.2L307.9,356.5L305.5,356.6ZM311.9,359.0L314.8,358.9L317.0,356.2L314.5,356.3ZM321.2,358.7L324.2,358.6L326.4,355.8L323.8,355.9ZM330.8,358.4L333.9,358.3L336.1,355.5L333.4,355.6ZM340.6,358.1L343.9,358.0L346.1,355.1L343.3,355.2ZM350.8,357.7L354.2,357.6L356.3,354.7L353.5,354.8ZM361.4,357.4L364.8,357.3L367.0,354.3L364.1,354.5ZM372.2,357.0L375.8,356.9L377.9,353.9L374.9,354.1ZM383.5,356.7L387.1,356.6L389.3,353.5L386.2,353.6ZM395.1,356.3L398.9,356.2L401.0,353.1L397.8,353.2ZM407.1,355.9L411.0,355.8L413.1,352.6L409.8,352.8ZM419.5,355.5L423.6,355.4L425.7,352.2L422.2,352.3ZM432.4,355.1L436.6,355.0L438.7,351.7L435.1,351.8ZM445.7,354.7L450.1,354.5L452.1,351.2L448.5,351.3ZM459.6,354.2L464.1,354.1L466.1,350.7L462.3,350.8ZM473.9,353.7L478.7,353.6L480.6,350.2L476.6,350.3ZM488.9,353.3L493.8,353.1L495.7,349.6L491.6,349.8ZM504.4,352.8L509.5,352.6L511.3,349.0L507.0,349.2ZM520.5,352.2L525.8,352.1L527.6,348.4L523.2,348.6ZM537.3,351.7L542.8,351.5L544.6,347.8L539.9,348.0ZM554.7,351.1L560.5,350.9L562.2,347.2L557.4,347.3ZM573.0,350.5L579.0,350.3L580.6,346.5L575.6,346.7ZM592.0,349.9L598.2,349.7L599.8,345.8L594.5,346.0ZM611.8,349.3L618.4,349.0L619.9,345.0L614.4,345.2ZM282.8,353.7L285.4,353.6L287.6,351.1L285.4,351.2ZM291.1,353.4L293.8,353.3L295.9,350.7L293.7,350.8ZM299.6,353.0L302.4,352.9L304.5,350.3L302.2,350.4ZM308.3,352.6L311.2,352.5L313.4,349.9L311.0,350.0ZM317.4,352.3L320.3,352.1L322.5,349.5L320.0,349.6ZM326.6,351.9L329.7,351.7L331.8,349.0L329.3,349.1ZM336.2,351.4L339.3,351.3L341.5,348.6L338.8,348.7ZM346.1,351.0L349.3,350.9L351.4,348.1L348.7,348.2ZM356.2,350.6L359.6,350.4L361.7,347.6L358.9,347.7ZM366.7,350.1L370.2,350.0L372.3,347.1L369.4,347.2ZM377.6,349.7L381.1,349.5L383.2,346.6L380.2,346.7ZM388.8,349.2L392.4,349.0L394.5,346.1L391.4,346.2ZM400.4,348.7L404.1,348.5L406.2,345.5L403.0,345.7ZM412.3,348.2L416.2,348.0L418.3,344.9L415.0,345.1ZM424.7,347.6L428.8,347.5L430.8,344.3L427.4,344.5ZM437.5,347.1L441.7,346.9L443.7,343.7L440.2,343.9ZM450.8,346.5L455.1,346.3L457.1,343.1L453.5,343.3ZM464.6,345.9L469.1,345.7L471.0,342.4L467.2,342.6ZM478.8,345.3L483.5,345.1L485.4,341.8L481.5,342.0ZM493.7,344.7L498.5,344.5L500.4,341.1L496.3,341.3ZM509.1,344.0L514.1,343.8L515.9,340.3L511.7,340.5ZM525.1,343.3L530.3,343.1L532.1,339.6L527.7,339.8ZM541.7,342.6L547.2,342.4L548.9,338.8L544.3,339.0ZM559.0,341.8L564.7,341.6L566.4,337.9L561.6,338.2ZM577.1,341.1L583.0,340.8L584.6,337.1L579.6,337.3ZM595.9,340.3L602.1,340.0L603.7,336.2L598.4,336.4ZM615.6,339.4L622.1,339.1L623.5,335.2L618.1,335.5ZM288.2,347.5L290.8,347.3L293.0,344.9L290.7,345.0ZM296.5,347.0L299.2,346.9L301.3,344.4L299.0,344.5ZM305.0,346.6L307.8,346.4L309.9,343.9L307.5,344.0ZM313.7,346.1L316.6,346.0L318.7,343.4L316.3,343.5ZM322.7,345.6L325.7,345.5L327.8,342.9L325.3,343.0ZM332.0,345.2L335.0,345.0L337.1,342.3L334.6,342.5ZM341.6,344.6L344.7,344.5L346.8,341.8L344.2,341.9ZM351.4,344.1L354.6,343.9L356.7,341.2L354.0,341.4ZM361.6,343.6L364.9,343.4L367.0,340.6L364.2,340.8ZM372.0,343.0L375.4,342.8L377.5,340.0L374.6,340.2ZM382.8,342.4L386.4,342.3L388.4,339.4L385.4,339.6ZM394.0,341.9L397.6,341.7L399.7,338.8L396.6,338.9ZM405.5,341.2L409.3,341.0L411.3,338.1L408.1,338.3ZM417.4,340.6L421.3,340.4L423.4,337.4L420.1,337.6ZM429.8,339.9L433.8,339.7L435.8,336.7L432.4,336.9ZM442.5,339.3L446.7,339.0L448.7,335.9L445.1,336.1ZM455.7,338.6L460.1,338.3L462.0,335.2L458.4,335.4ZM469.4,337.8L473.9,337.6L475.8,334.4L472.0,334.6ZM483.6,337.1L488.3,336.8L490.1,333.6L486.2,333.8ZM498.3,336.3L503.2,336.0L505.0,332.7L500.9,333.0ZM513.6,335.5L518.7,335.2L520.4,331.8L516.2,332.1ZM529.5,334.6L534.7,334.3L536.5,330.9L532.1,331.2ZM546.0,333.7L551.5,333.5L553.1,330.0L548.6,330.2ZM563.2,332.8L568.9,332.5L570.5,329.0L565.7,329.2ZM581.1,331.9L587.0,331.6L588.6,327.9L583.6,328.2ZM599.8,330.9L605.9,330.6L607.4,326.9L602.2,327.2ZM619.2,329.8L625.6,329.5L627.0,325.7L621.7,326.0ZM293.5,341.3L296.1,341.2L298.2,338.7L296.0,338.9ZM301.8,340.8L304.5,340.7L306.6,338.2L304.3,338.3ZM310.3,340.3L313.0,340.1L315.1,337.6L312.8,337.8ZM319.0,339.7L321.9,339.6L323.9,337.0L321.5,337.2ZM328.0,339.2L330.9,339.0L333.0,336.4L330.5,336.6ZM337.3,338.6L340.3,338.4L342.4,335.8L339.8,336.0ZM346.8,338.0L349.9,337.8L352.0,335.1L349.3,335.3ZM356.6,337.4L359.8,337.2L361.9,334.5L359.2,334.7ZM366.8,336.7L370.1,336.5L372.1,333.8L369.3,334.0ZM377.2,336.1L380.6,335.8L382.6,333.1L379.8,333.3ZM388.0,335.4L391.5,335.2L393.5,332.4L390.5,332.6ZM399.1,334.7L402.7,334.4L404.7,331.6L401.7,331.8ZM410.6,334.0L414.3,333.7L416.3,330.8L413.2,331.0ZM422.5,333.2L426.3,333.0L428.3,330.0L425.0,330.2ZM434.7,332.4L438.7,332.2L440.7,329.2L437.3,329.4ZM447.4,331.6L451.6,331.4L453.5,328.3L450.0,328.6ZM460.6,330.8L464.9,330.5L466.8,327.5L463.1,327.7ZM474.2,329.9L478.6,329.7L480.5,326.5L476.7,326.8ZM488.3,329.0L492.9,328.8L494.7,325.6L490.8,325.8ZM502.9,328.1L507.7,327.8L509.5,324.6L505.5,324.9ZM518.1,327.2L523.1,326.8L524.8,323.6L520.6,323.8ZM533.9,326.2L539.0,325.8L540.7,322.5L536.4,322.8ZM550.3,325.1L555.6,324.8L557.3,321.4L552.7,321.7ZM567.3,324.1L572.9,323.7L574.5,320.2L569.8,320.6ZM585.0,322.9L590.9,322.6L592.4,319.0L587.5,319.4ZM603.5,321.8L609.6,321.4L611.0,317.8L605.9,318.1ZM622.8,320.6L629.1,320.2L630.5,316.5L625.1,316.8ZM298.7,335.3L301.3,335.1L303.4,332.7L301.2,332.9ZM307.0,334.7L309.7,334.5L311.7,332.1L309.4,332.3ZM315.5,334.1L318.2,333.9L320.3,331.4L317.9,331.6ZM324.2,333.5L327.0,333.3L329.1,330.8L326.7,330.9ZM333.2,332.8L336.1,332.6L338.1,330.1L335.7,330.3ZM342.4,332.1L345.4,331.9L347.5,329.4L344.9,329.6ZM351.9,331.4L355.0,331.2L357.1,328.6L354.4,328.8ZM361.7,330.7L364.9,330.5L367.0,327.9L364.3,328.1ZM371.8,330.0L375.1,329.8L377.1,327.1L374.4,327.3ZM382.3,329.2L385.7,329.0L387.6,326.3L384.8,326.5ZM393.0,328.5L396.5,328.2L398.5,325.5L395.5,325.7ZM404.1,327.7L407.7,327.4L409.7,324.6L406.6,324.8ZM415.5,326.8L419.3,326.6L421.2,323.7L418.1,324.0ZM427.4,326.0L431.2,325.7L433.1,322.8L429.9,323.1ZM439.6,325.1L443.6,324.8L445.5,321.9L442.1,322.1ZM452.2,324.2L456.3,323.9L458.2,320.9L454.7,321.2ZM465.3,323.2L469.6,322.9L471.4,319.9L467.8,320.2ZM478.8,322.2L483.2,321.9L485.1,318.9L481.3,319.1ZM492.8,321.2L497.4,320.9L499.2,317.8L495.3,318.1ZM507.4,320.2L512.1,319.8L513.9,316.7L509.9,317.0ZM522.5,319.1L527.4,318.7L529.1,315.5L524.9,315.8ZM538.1,317.9L543.2,317.5L544.9,314.3L540.6,314.6ZM554.4,316.7L559.7,316.3L561.3,313.0L556.8,313.4ZM571.3,315.5L576.8,315.1L578.3,311.7L573.7,312.1ZM588.8,314.2L594.6,313.8L596.1,310.4L591.2,310.7ZM607.1,312.9L613.2,312.5L614.6,309.0L609.5,309.4ZM626.2,311.5L632.5,311.1L633.8,307.5L628.5,307.9ZM303.8,329.4L306.4,329.2L308.4,326.8L306.2,327.0ZM312.1,328.7L314.8,328.5L316.8,326.1L314.5,326.3ZM320.6,328.0L323.3,327.8L325.3,325.4L323.0,325.6ZM329.3,327.3L332.1,327.1L334.1,324.6L331.7,324.8ZM338.2,326.6L341.2,326.3L343.2,323.9L340.7,324.1ZM347.5,325.8L350.5,325.6L352.5,323.1L349.9,323.3ZM357.0,325.0L360.1,324.8L362.1,322.2L359.4,322.5ZM366.8,324.2L369.9,324.0L371.9,321.4L369.2,321.6ZM376.8,323.4L380.1,323.1L382.1,320.5L379.3,320.8ZM387.2,322.6L390.6,322.3L392.6,319.6L389.7,319.9ZM397.9,321.7L401.4,321.4L403.4,318.7L400.4,319.0ZM409.0,320.8L412.6,320.5L414.5,317.8L411.5,318.0ZM420.4,319.8L424.1,319.5L426.0,316.8L422.9,317.0ZM432.1,318.9L436.0,318.6L437.9,315.8L434.6,316.0ZM444.3,317.9L448.3,317.6L450.1,314.7L446.8,315.0ZM456.9,316.9L461.0,316.5L462.8,313.6L459.4,313.9ZM469.9,315.8L474.1,315.4L475.9,312.5L472.4,312.8ZM483.3,314.7L487.8,314.3L489.5,311.4L485.8,311.7ZM497.3,313.6L501.8,313.2L503.6,310.2L499.7,310.5ZM511.7,312.4L516.5,312.0L518.2,308.9L514.2,309.3ZM526.7,311.1L531.6,310.7L533.3,307.6L529.1,308.0ZM542.2,309.9L547.3,309.5L548.9,306.3L544.6,306.6ZM558.4,308.6L563.6,308.1L565.2,304.9L560.7,305.3ZM575.1,307.2L580.6,306.7L582.1,303.4L577.5,303.8ZM592.5,305.8L598.3,305.3L599.7,301.9L594.9,302.4ZM610.7,304.3L616.6,303.8L618.0,300.4L613.0,300.8ZM629.5,302.7L635.8,302.2L637.0,298.8L631.8,299.2ZM308.8,323.6L311.4,323.3L313.4,321.0L311.2,321.2ZM317.1,322.8L319.8,322.6L321.7,320.2L319.5,320.5ZM325.6,322.0L328.3,321.8L330.3,319.4L328.0,319.7ZM334.3,321.3L337.1,321.0L339.1,318.6L336.7,318.8ZM343.2,320.4L346.1,320.2L348.1,317.8L345.6,318.0ZM352.4,319.6L355.4,319.3L357.4,316.9L354.9,317.1ZM361.9,318.8L365.0,318.5L366.9,316.0L364.3,316.2ZM371.7,317.9L374.9,317.6L376.8,315.1L374.1,315.3ZM381.7,317.0L385.0,316.7L386.9,314.1L384.2,314.4ZM392.1,316.0L395.5,315.7L397.4,313.1L394.5,313.4ZM402.7,315.0L406.2,314.7L408.1,312.1L405.2,312.4ZM413.8,314.1L417.3,313.7L419.2,311.1L416.2,311.3ZM425.1,313.0L428.8,312.7L430.7,310.0L427.6,310.3ZM436.8,312.0L440.7,311.6L442.5,308.9L439.3,309.2ZM448.9,310.9L452.9,310.5L454.7,307.7L451.4,308.0ZM461.5,309.7L465.5,309.4L467.3,306.5L463.9,306.9ZM474.4,308.6L478.6,308.2L480.4,305.3L476.8,305.6ZM487.8,307.3L492.2,306.9L493.9,304.0L490.2,304.4ZM501.6,306.1L506.2,305.7L507.9,302.7L504.0,303.1ZM516.0,304.8L520.7,304.4L522.3,301.4L518.4,301.7ZM530.8,303.4L535.7,303.0L537.3,299.9L533.2,300.3ZM546.3,302.0L551.3,301.6L552.9,298.5L548.6,298.9ZM562.3,300.6L567.5,300.1L569.0,297.0L564.6,297.4ZM578.9,299.1L584.3,298.6L585.8,295.4L581.2,295.8ZM596.1,297.5L601.8,297.0L603.2,293.7L598.4,294.2ZM614.1,295.9L620.0,295.3L621.3,292.0L616.4,292.5ZM632.8,294.2L638.9,293.6L640.2,290.3L635.0,290.7ZM313.8,317.8L316.4,317.6L318.3,315.3L316.1,315.5ZM322.0,317.0L324.7,316.8L326.6,314.5L324.4,314.7ZM330.5,316.2L333.2,315.9L335.2,313.6L332.8,313.8ZM339.2,315.3L342.0,315.0L343.9,312.7L341.5,312.9ZM348.1,314.4L351.0,314.2L352.9,311.8L350.5,312.0ZM357.3,313.5L360.3,313.2L362.2,310.8L359.7,311.1ZM366.8,312.6L369.8,312.3L371.8,309.8L369.1,310.1ZM376.5,311.6L379.7,311.3L381.6,308.8L378.9,309.1ZM386.5,310.6L389.8,310.3L391.7,307.8L388.9,308.1ZM396.8,309.6L400.2,309.3L402.1,306.7L399.2,307.0ZM407.5,308.5L410.9,308.2L412.8,305.6L409.9,305.9ZM418.4,307.5L422.0,307.1L423.9,304.5L420.8,304.8ZM429.8,306.3L433.4,306.0L435.3,303.3L432.2,303.6ZM441.4,305.2L445.2,304.8L447.0,302.1L443.8,302.4ZM453.5,304.0L457.4,303.6L459.2,300.9L455.9,301.2ZM465.9,302.7L470.0,302.3L471.7,299.6L468.3,299.9ZM478.8,301.5L483.0,301.0L484.7,298.2L481.2,298.6ZM492.1,300.1L496.4,299.7L498.1,296.9L494.5,297.2ZM505.9,298.8L510.4,298.3L512.0,295.4L508.2,295.8ZM520.1,297.4L524.8,296.9L526.4,294.0L522.5,294.4ZM534.9,295.9L539.7,295.4L541.3,292.4L537.2,292.9ZM550.2,294.4L555.2,293.9L556.7,290.9L552.5,291.3ZM566.1,292.8L571.3,292.3L572.7,289.2L568.4,289.7ZM582.5,291.2L587.9,290.6L589.4,287.5L584.8,288.0ZM599.7,289.5L605.3,288.9L606.6,285.7L601.9,286.2ZM617.5,287.7L623.3,287.1L624.6,283.9L619.7,284.4ZM636.0,285.9L642.0,285.3L643.3,282.0L638.1,282.5Z" fill="#f49068" opacity="0.6"/><path d="M224.0,419.0L314.0,315.0M232.1,419.6L322.2,314.2M240.5,420.3L330.6,313.3M249.2,420.9L339.2,312.4M258.1,421.6L348.0,311.5M267.3,422.3L357.2,310.5M276.8,423.0L366.5,309.5M286.7,423.8L376.2,308.5M296.9,424.6L386.1,307.5M307.5,425.4L396.3,306.5M318.4,426.2L406.8,305.4M329.7,427.1L417.7,304.2M341.5,428.0L428.8,303.1M353.7,428.9L440.4,301.9M366.4,429.9L452.3,300.6M379.6,430.9L464.6,299.4M393.3,431.9L477.3,298.0M407.6,433.0L490.4,296.7M422.5,434.1L504.0,295.3M438.0,435.3L518.0,293.8M454.2,436.6L532.6,292.3M471.1,437.9L547.7,290.7M488.8,439.2L563.3,289.1M507.3,440.6L579.5,287.4M526.7,442.1L596.4,285.7M547.1,443.7L613.9,283.9M568.5,445.3L632.1,282.0M591.0,447.0L651.0,280.0" stroke="#8a3420" stroke-width="0.9" fill="none"/><path d="M224.0,419.0L228.4,418.9L232.1,419.6L236.7,419.5L240.5,420.3L245.2,420.1L249.2,420.9L254.0,420.8L258.1,421.6L263.1,421.5L267.3,422.3L272.4,422.2L276.8,423.0L282.1,422.9L286.7,423.8L292.2,423.7L296.9,424.6L302.5,424.4L307.5,425.4L313.3,425.2L318.4,426.2L324.4,426.1L329.7,427.1L336.0,427.0L341.5,428.0L347.9,427.9L353.7,428.9L360.4,428.8L366.4,429.9L373.3,429.8L379.6,430.9L386.8,430.8L393.3,431.9L400.7,431.8L407.6,433.0L415.3,432.9L422.5,434.1L430.5,434.1L438.0,435.3L446.3,435.3L454.2,436.6L462.9,436.5L471.1,437.9L480.2,437.8L488.8,439.2L498.3,439.2L507.3,440.6L517.2,440.6L526.7,442.1L537.1,442.1L547.1,443.7L558.0,443.7L568.5,445.3L579.9,445.3L591.0,447.0M230.5,411.5L234.9,411.3L238.6,412.0L243.2,411.8L247.0,412.5L251.7,412.3L255.7,413.1L260.5,412.9L264.6,413.6L269.6,413.4L273.8,414.2L279.0,414.0L283.4,414.8L288.7,414.6L293.2,415.4L298.7,415.2L303.4,416.0L309.0,415.8L314.0,416.6L319.8,416.5L324.9,417.3L330.9,417.1L336.2,418.0L342.4,417.8L348.0,418.7L354.4,418.5L360.2,419.5L366.8,419.3L372.8,420.2L379.7,420.1L385.9,421.1L393.1,420.9L399.6,421.9L407.0,421.7L413.8,422.8L421.5,422.6L428.6,423.7L436.6,423.5L444.0,424.6L452.4,424.5L460.1,425.6L468.8,425.5L476.9,426.6L486.0,426.5L494.5,427.7L503.9,427.6L512.9,428.8L522.7,428.7L532.1,430.0L542.4,429.9L552.3,431.2L563.0,431.1L573.5,432.5L584.7,432.5L595.7,433.9M236.8,404.2L241.2,403.9L245.0,404.6L249.5,404.3L253.4,405.0L258.1,404.7L262.1,405.4L266.9,405.1L271.0,405.8L276.0,405.5L280.2,406.2L285.3,406.0L289.8,406.7L295.0,406.4L299.6,407.1L305.1,406.9L309.8,407.6L315.4,407.4L320.4,408.1L326.1,407.9L331.3,408.6L337.2,408.4L342.6,409.2L348.7,408.9L354.3,409.7L360.7,409.5L366.4,410.3L373.0,410.0L379.0,410.9L385.9,410.6L392.1,411.5L399.2,411.2L405.7,412.1L413.1,411.9L419.9,412.8L427.5,412.5L434.6,413.5L442.5,413.2L449.9,414.2L458.2,413.9L465.9,415.0L474.5,414.7L482.6,415.7L491.6,415.5L500.0,416.6L509.4,416.3L518.3,417.4L528.0,417.2L537.3,418.3L547.5,418.1L557.3,419.2L567.9,419.0L578.2,420.2L589.4,420.0L600.2,421.3M243.0,397.0L247.5,396.7L251.2,397.3L255.7,397.0L259.6,397.6L264.3,397.3L268.3,397.8L273.1,397.5L277.2,398.1L282.2,397.8L286.5,398.4L291.6,398.1L296.0,398.8L301.3,398.5L305.9,399.1L311.3,398.8L316.1,399.4L321.6,399.1L326.6,399.8L332.3,399.5L337.5,400.1L343.4,399.8L348.7,400.5L354.9,400.2L360.4,400.9L366.8,400.6L372.5,401.3L379.1,401.0L385.1,401.7L391.9,401.4L398.1,402.2L405.2,401.8L411.7,402.6L419.0,402.3L425.8,403.1L433.4,402.7L440.4,403.6L448.3,403.2L455.7,404.1L463.9,403.7L471.5,404.6L480.1,404.3L488.1,405.1L497.0,404.8L505.4,405.7L514.7,405.4L523.5,406.3L533.1,406.0L542.4,407.0L552.4,406.6L562.2,407.6L572.7,407.3L582.9,408.3L593.9,407.9L604.6,409.0M249.1,390.0L253.6,389.6L257.3,390.1L261.9,389.8L265.7,390.3L270.4,389.9L274.4,390.5L279.2,390.1L283.4,390.6L288.3,390.3L292.6,390.8L297.7,390.5L302.1,391.0L307.4,390.7L312.0,391.2L317.4,390.9L322.2,391.4L327.7,391.1L332.7,391.6L338.4,391.3L343.5,391.9L349.5,391.5L354.8,392.1L360.9,391.7L366.4,392.3L372.8,391.9L378.5,392.6L385.1,392.2L391.0,392.8L397.8,392.4L404.0,393.1L411.0,392.7L417.5,393.3L424.8,392.9L431.5,393.6L439.1,393.2L446.1,393.9L453.9,393.5L461.2,394.2L469.4,393.8L477.0,394.5L485.5,394.1L493.5,394.9L502.3,394.4L510.6,395.2L519.8,394.8L528.5,395.6L538.1,395.1L547.3,395.9L557.2,395.5L566.9,396.3L577.3,395.9L587.4,396.7L598.3,396.3L608.9,397.2M255.1,383.0L259.5,382.7L263.3,383.1L267.8,382.7L271.7,383.2L276.4,382.8L280.4,383.2L285.2,382.8L289.4,383.3L294.3,382.9L298.6,383.4L303.7,383.0L308.1,383.4L313.4,383.0L318.0,383.5L323.4,383.1L328.1,383.6L333.7,383.2L338.6,383.7L344.3,383.2L349.5,383.8L355.4,383.3L360.7,383.8L366.8,383.4L372.3,383.9L378.6,383.5L384.3,384.0L390.9,383.5L396.8,384.1L403.6,383.6L409.7,384.2L416.7,383.7L423.2,384.3L430.4,383.8L437.1,384.4L444.6,383.9L451.6,384.5L459.4,384.0L466.7,384.6L474.7,384.1L482.3,384.7L490.7,384.2L498.7,384.9L507.4,384.3L515.7,385.0L524.8,384.4L533.5,385.1L542.9,384.6L552.0,385.3L561.9,384.7L571.4,385.4L581.7,384.8L591.7,385.6L602.5,385.0L613.0,385.7M261.0,376.3L265.4,375.8L269.2,376.2L273.7,375.8L277.6,376.2L282.3,375.8L286.3,376.2L291.1,375.7L295.2,376.1L300.2,375.7L304.5,376.1L309.5,375.6L314.0,376.0L319.2,375.6L323.8,376.0L329.2,375.5L334.0,375.9L339.5,375.4L344.4,375.9L350.1,375.4L355.3,375.8L361.2,375.3L366.5,375.8L372.5,375.3L378.0,375.7L384.3,375.2L390.0,375.7L396.5,375.1L402.5,375.6L409.2,375.1L415.3,375.5L422.3,375.0L428.7,375.5L435.9,374.9L442.6,375.4L450.0,374.8L457.0,375.4L464.7,374.8L471.9,375.3L480.0,374.7L487.5,375.2L495.9,374.6L503.7,375.1L512.4,374.5L520.6,375.1L529.6,374.4L538.3,375.0L547.6,374.3L556.7,374.9L566.4,374.2L575.9,374.8L586.1,374.1L596.0,374.7L606.6,374.0L617.0,374.6M266.7,369.6L271.1,369.2L274.9,369.5L279.5,369.0L283.4,369.4L288.0,368.9L292.1,369.2L296.8,368.7L301.0,369.1L305.9,368.6L310.2,368.9L315.3,368.4L319.7,368.8L324.9,368.2L329.5,368.6L334.9,368.1L339.7,368.4L345.2,367.9L350.1,368.3L355.8,367.7L360.9,368.1L366.8,367.5L372.1,367.9L378.2,367.3L383.6,367.7L389.9,367.1L395.6,367.5L402.1,366.9L408.0,367.3L414.7,366.7L420.8,367.1L427.7,366.5L434.1,366.9L441.2,366.3L447.9,366.7L455.3,366.0L462.2,366.4L469.9,365.8L477.1,366.2L485.1,365.5L492.6,365.9L500.8,365.2L508.7,365.7L517.3,365.0L525.4,365.4L534.4,364.7L542.9,365.1L552.2,364.4L561.1,364.8L570.8,364.1L580.2,364.5L590.3,363.7L600.1,364.2L610.6,363.4L620.9,363.8M272.4,363.1L276.8,362.6L280.6,362.9L285.1,362.4L289.0,362.6L293.7,362.1L297.7,362.4L302.5,361.9L306.6,362.2L311.6,361.6L315.9,361.9L320.9,361.4L325.4,361.6L330.6,361.1L335.2,361.4L340.5,360.8L345.3,361.1L350.8,360.5L355.7,360.8L361.4,360.2L366.5,360.5L372.3,359.9L377.6,360.2L383.6,359.6L389.1,359.9L395.3,359.2L401.0,359.6L407.5,358.9L413.4,359.2L420.0,358.6L426.1,358.9L433.0,358.2L439.4,358.5L446.5,357.8L453.1,358.1L460.4,357.4L467.3,357.7L474.9,357.0L482.1,357.3L490.0,356.6L497.5,356.9L505.7,356.1L513.5,356.5L522.0,355.7L530.1,356.0L538.9,355.2L547.4,355.5L556.6,354.7L565.5,355.0L575.1,354.2L584.4,354.5L594.3,353.6L604.0,354.0L614.5,353.1L624.6,353.4M277.9,356.7L282.3,356.2L286.1,356.4L290.6,355.8L294.6,356.1L299.2,355.5L303.2,355.7L308.0,355.2L312.2,355.4L317.1,354.8L321.4,355.0L326.4,354.4L330.9,354.7L336.0,354.1L340.6,354.3L346.0,353.7L350.7,353.9L356.2,353.3L361.1,353.5L366.8,352.9L371.9,353.1L377.7,352.4L383.0,352.7L389.0,352.0L394.5,352.2L400.7,351.5L406.3,351.8L412.7,351.1L418.6,351.3L425.2,350.6L431.3,350.8L438.2,350.1L444.5,350.3L451.6,349.6L458.1,349.8L465.5,349.0L472.3,349.2L479.9,348.5L487.0,348.7L494.8,347.9L502.3,348.1L510.4,347.3L518.1,347.5L526.6,346.6L534.6,346.8L543.4,346.0L551.8,346.2L560.9,345.3L569.7,345.5L579.2,344.6L588.4,344.8L598.3,343.8L607.9,344.0L618.2,343.1L628.3,343.3M283.4,350.4L287.8,349.8L291.6,350.0L296.1,349.4L300.0,349.6L304.6,349.0L308.7,349.2L313.4,348.6L317.6,348.7L322.5,348.1L326.8,348.3L331.8,347.7L336.3,347.8L341.4,347.2L346.0,347.4L351.3,346.7L356.1,346.9L361.6,346.2L366.5,346.4L372.1,345.7L377.2,345.8L383.0,345.1L388.3,345.3L394.3,344.6L399.7,344.7L405.9,344.0L411.5,344.2L417.9,343.4L423.8,343.6L430.3,342.8L436.4,342.9L443.2,342.2L449.5,342.3L456.5,341.5L463.1,341.6L470.3,340.8L477.2,341.0L484.7,340.1L491.8,340.3L499.6,339.4L506.9,339.5L515.0,338.6L522.7,338.7L531.1,337.8L539.1,337.9L547.8,337.0L556.1,337.1L565.1,336.1L573.9,336.2L583.2,335.3L592.4,335.3L602.1,334.3L611.7,334.4L621.8,333.3L631.8,333.4M288.7,344.2L293.1,343.6L296.9,343.8L301.4,343.1L305.3,343.3L309.9,342.6L314.0,342.8L318.7,342.1L322.9,342.2L327.8,341.6L332.1,341.7L337.1,341.0L341.6,341.1L346.7,340.4L351.3,340.6L356.6,339.9L361.4,340.0L366.8,339.3L371.7,339.4L377.3,338.6L382.4,338.7L388.2,338.0L393.4,338.1L399.4,337.3L404.8,337.4L411.0,336.6L416.6,336.7L422.9,335.9L428.8,336.0L435.3,335.2L441.4,335.3L448.1,334.4L454.4,334.5L461.4,333.6L467.9,333.7L475.1,332.8L481.9,332.9L489.4,332.0L496.4,332.0L504.1,331.1L511.5,331.1L519.5,330.2L527.1,330.2L535.4,329.2L543.4,329.3L552.0,328.3L560.3,328.3L569.2,327.2L577.9,327.2L587.2,326.2L596.2,326.2L605.9,325.1L615.3,325.0L625.4,323.9L635.2,323.9M293.9,338.2L298.3,337.5L302.1,337.6L306.6,337.0L310.6,337.0L315.2,336.4L319.2,336.4L324.0,335.8L328.1,335.8L333.0,335.1L337.3,335.2L342.3,334.5L346.7,334.6L351.9,333.8L356.5,333.9L361.8,333.2L366.5,333.2L371.9,332.5L376.8,332.5L382.4,331.7L387.5,331.8L393.2,331.0L398.5,331.0L404.4,330.2L409.8,330.2L415.9,329.4L421.6,329.4L427.9,328.6L433.7,328.6L440.2,327.8L446.2,327.8L452.9,326.9L459.2,326.9L466.1,326.0L472.6,326.0L479.8,325.0L486.5,325.0L493.9,324.0L501.0,324.0L508.6,323.0L515.9,323.0L523.9,322.0L531.4,321.9L539.7,320.9L547.6,320.8L556.1,319.8L564.3,319.7L573.2,318.6L581.8,318.5L591.0,317.3L599.9,317.2L609.5,316.1L618.8,315.9L628.8,314.7L638.6,314.6M299.1,332.2L303.5,331.6L307.3,331.6L311.8,330.9L315.7,330.9L320.3,330.2L324.4,330.3L329.1,329.6L333.3,329.6L338.1,328.8L342.4,328.9L347.4,328.1L351.8,328.1L357.0,327.4L361.5,327.4L366.8,326.6L371.5,326.6L377.0,325.8L381.8,325.8L387.4,325.0L392.5,325.0L398.2,324.1L403.4,324.1L409.3,323.3L414.7,323.2L420.8,322.4L426.4,322.3L432.7,321.4L438.5,321.4L445.0,320.5L451.0,320.4L457.6,319.5L463.9,319.4L470.8,318.5L477.2,318.4L484.3,317.4L491.1,317.3L498.4,316.3L505.4,316.2L513.0,315.2L520.2,315.0L528.1,314.0L535.6,313.8L543.8,312.7L551.6,312.6L560.1,311.5L568.3,311.3L577.1,310.1L585.6,310.0L594.7,308.8L603.6,308.6L613.0,307.3L622.3,307.1L632.1,305.8L641.8,305.6M304.1,326.4L308.5,325.7L312.3,325.7L316.8,325.0L320.7,324.9L325.3,324.2L329.4,324.2L334.1,323.4L338.3,323.4L343.1,322.7L347.4,322.6L352.4,321.9L356.8,321.8L361.9,321.0L366.5,321.0L371.8,320.2L376.5,320.1L381.9,319.3L386.8,319.2L392.3,318.4L397.3,318.3L403.1,317.4L408.3,317.4L414.1,316.5L419.5,316.4L425.6,315.5L431.2,315.4L437.4,314.4L443.2,314.3L449.6,313.4L455.6,313.2L462.2,312.3L468.4,312.1L475.3,311.1L481.7,311.0L488.8,309.9L495.5,309.8L502.8,308.7L509.7,308.6L517.3,307.5L524.5,307.3L532.3,306.2L539.8,305.9L547.9,304.8L555.6,304.6L564.0,303.4L572.1,303.1L580.8,301.9L589.3,301.7L598.3,300.4L607.1,300.1L616.5,298.8L625.6,298.5L635.4,297.2L645.0,296.8M309.1,320.6L313.5,319.9L317.3,319.9L321.8,319.1L325.7,319.1L330.3,318.3L334.3,318.2L339.0,317.5L343.2,317.4L348.0,316.6L352.3,316.5L357.3,315.7L361.7,315.6L366.8,314.8L371.4,314.7L376.6,313.9L381.3,313.7L386.7,312.9L391.6,312.8L397.1,311.9L402.1,311.8L407.8,310.9L413.0,310.7L418.9,309.8L424.2,309.7L430.3,308.7L435.8,308.5L442.0,307.6L447.8,307.4L454.2,306.4L460.1,306.2L466.7,305.2L472.9,305.0L479.7,304.0L486.1,303.7L493.1,302.7L499.8,302.4L507.0,301.3L513.9,301.1L521.4,300.0L528.6,299.7L536.3,298.5L543.8,298.2L551.8,297.0L559.5,296.7L567.8,295.5L575.9,295.2L584.5,293.9L592.9,293.6L601.8,292.2L610.5,291.9L619.8,290.5L628.9,290.1L638.5,288.7L648.0,288.3M314.0,315.0L318.3,314.2L322.2,314.2L326.6,313.4L330.6,313.3L335.1,312.5L339.2,312.4L343.9,311.6L348.0,311.5L352.9,310.6L357.2,310.5L362.1,309.7L366.5,309.5L371.6,308.7L376.2,308.5L381.4,307.7L386.1,307.5L391.4,306.6L396.3,306.5L401.8,305.5L406.8,305.4L412.5,304.4L417.7,304.2L423.5,303.3L428.8,303.1L434.8,302.1L440.4,301.9L446.5,300.9L452.3,300.6L458.6,299.6L464.6,299.4L471.1,298.3L477.3,298.0L484.0,297.0L490.4,296.7L497.4,295.6L504.0,295.3L511.2,294.1L518.0,293.8L525.5,292.6L532.6,292.3L540.3,291.1L547.7,290.7L555.6,289.5L563.3,289.1L571.6,287.8L579.5,287.4L588.1,286.1L596.4,285.7L605.2,284.3L613.9,283.9L623.1,282.4L632.1,282.0L641.6,280.5L651.0,280.0" stroke="#5a2414" stroke-width="2.2" fill="none"/></g><path d="M345 288 Q361 283 377 288 L377 312 L361 322 L345 320Z" fill="url(#brick)"/><polygon points="353.0,343.0 378.0,342.0 349.0,382.0 323.0,382.0" fill="#a8a8a8"/><polygon points="360.0,353.0 374.0,352.0 352.0,382.0 338.0,382.0" fill="#44505e"/><polygon points="471.0,337.0 506.0,334.0 482.0,382.0 444.0,382.0" fill="#a8a8a8"/><polygon points="471.0,337.0 476.0,337.0 450.0,382.0 444.0,382.0" fill="#ffffff"/><polygon points="474.0,351.0 497.0,350.0 482.0,382.0 456.0,382.0" fill="#44505e"/><polygon points="758.0,364.0 756.0,444.0 741.0,458.0" fill="#5c6066"/><g filter="url(#tblur)"><polygon points="618.0,448.0 741.0,458.0 758.0,364.0 646.0,367.0" fill="#c85034"/><path d="M620.9,446.0L629.2,446.6L630.5,439.2L624.8,438.8ZM632.8,446.9L641.4,447.6L642.6,440.0L636.7,439.6ZM645.2,447.9L654.1,448.6L655.1,440.9L649.0,440.4ZM657.9,448.9L667.1,449.6L668.0,441.7L661.7,441.3ZM671.1,449.9L680.6,450.6L681.3,442.6L674.9,442.2ZM684.8,451.0L694.6,451.7L695.1,443.6L688.5,443.1ZM698.9,452.1L709.1,452.9L709.4,444.6L702.5,444.1ZM713.5,453.2L724.0,454.0L724.2,445.6L717.1,445.1ZM728.6,454.4L739.6,455.2L739.6,446.6L732.1,446.1ZM624.3,436.0L632.5,436.6L633.7,429.3L628.1,429.0ZM636.1,436.8L644.7,437.4L645.7,430.0L639.9,429.7ZM648.4,437.6L657.2,438.2L658.1,430.7L652.1,430.4ZM661.0,438.4L670.1,439.0L670.9,431.4L664.7,431.0ZM674.0,439.3L683.4,439.9L684.1,432.1L677.7,431.8ZM687.5,440.1L697.3,440.8L697.8,432.9L691.2,432.5ZM701.5,441.0L711.6,441.7L711.9,433.6L705.1,433.3ZM715.9,442.0L726.4,442.6L726.5,434.5L719.4,434.1ZM730.9,442.9L741.7,443.6L741.7,435.3L734.3,434.9ZM627.6,426.4L635.8,426.8L636.9,419.8L631.3,419.5ZM639.3,427.0L647.8,427.4L648.8,420.3L643.0,420.0ZM651.5,427.6L660.2,428.1L661.1,420.8L655.1,420.5ZM664.0,428.2L673.0,428.7L673.7,421.3L667.6,421.1ZM676.9,428.9L686.2,429.4L686.8,421.9L680.5,421.6ZM690.2,429.6L699.9,430.1L700.3,422.5L693.8,422.2ZM704.0,430.3L714.0,430.8L714.3,423.0L707.5,422.8ZM718.3,431.0L728.6,431.6L728.8,423.7L721.8,423.4ZM733.1,431.8L743.8,432.4L743.7,424.3L736.5,424.0ZM630.8,417.0L638.9,417.3L640.0,410.4L634.5,410.3ZM642.5,417.4L650.8,417.7L651.8,410.8L646.1,410.6ZM654.5,417.9L663.1,418.2L664.0,411.2L658.1,411.0ZM666.9,418.4L675.8,418.7L676.5,411.5L670.4,411.4ZM679.7,418.9L688.9,419.2L689.4,411.9L683.2,411.7ZM692.9,419.4L702.4,419.7L702.8,412.3L696.3,412.1ZM706.5,419.9L716.4,420.3L716.6,412.7L709.9,412.5ZM720.6,420.4L730.8,420.8L730.9,413.2L724.0,413.0ZM735.2,421.0L745.8,421.4L745.7,413.6L738.5,413.4ZM634.0,407.8L642.0,408.0L643.0,401.4L637.6,401.3ZM645.5,408.1L653.8,408.3L654.7,401.6L649.1,401.5ZM657.4,408.4L666.0,408.6L666.8,401.8L660.9,401.7ZM669.7,408.7L678.5,409.0L679.2,402.0L673.2,401.9ZM682.3,409.1L691.5,409.3L692.0,402.2L685.8,402.1ZM695.4,409.4L704.8,409.7L705.2,402.5L698.8,402.4ZM708.9,409.8L718.6,410.0L718.9,402.7L712.3,402.6ZM722.9,410.1L732.9,410.4L733.0,403.0L726.2,402.8ZM737.3,410.5L747.7,410.8L747.6,403.2L740.5,403.1ZM637.0,398.8L645.0,399.0L646.0,392.5L640.6,392.5ZM648.5,399.0L656.7,399.1L657.6,392.6L652.0,392.5ZM660.3,399.2L668.7,399.3L669.5,392.6L663.7,392.6ZM672.4,399.4L681.2,399.5L681.8,392.7L675.9,392.7ZM685.0,399.5L694.0,399.7L694.5,392.8L688.3,392.8ZM697.9,399.7L707.2,399.9L707.6,392.9L701.2,392.8ZM711.3,399.9L720.9,400.1L721.1,393.0L714.6,392.9ZM725.1,400.1L735.0,400.3L735.1,393.1L728.3,393.0ZM739.3,400.3L749.6,400.5L749.5,393.1L742.5,393.1ZM640.0,390.1L647.9,390.1L648.9,383.8L643.5,383.9ZM651.4,390.2L659.5,390.2L660.4,383.8L654.8,383.8ZM663.0,390.2L671.4,390.2L672.2,383.7L666.5,383.8ZM675.1,390.2L683.7,390.3L684.4,383.7L678.5,383.7ZM687.5,390.3L696.4,390.3L696.9,383.6L690.8,383.6ZM700.3,390.3L709.5,390.3L709.9,383.5L703.6,383.6ZM713.5,390.4L723.0,390.4L723.2,383.5L716.8,383.5ZM727.2,390.4L737.0,390.4L737.0,383.4L730.4,383.4ZM741.3,390.4L751.4,390.5L751.3,383.3L744.4,383.4ZM642.9,381.6L650.8,381.5L651.7,375.4L646.3,375.5ZM654.2,381.5L662.3,381.4L663.1,375.2L657.6,375.3ZM665.8,381.4L674.1,381.4L674.8,375.0L669.1,375.1ZM677.7,381.3L686.3,381.3L686.8,374.9L681.0,374.9ZM690.0,381.2L698.8,381.2L699.3,374.7L693.3,374.8ZM702.7,381.1L711.8,381.1L712.1,374.5L705.9,374.6ZM715.8,381.0L725.2,381.0L725.3,374.2L718.9,374.4ZM729.3,380.9L739.0,380.8L739.0,374.0L732.4,374.1ZM743.2,380.8L753.2,380.7L753.1,373.8L746.2,373.9ZM645.8,373.3L653.6,373.1L654.4,367.2L649.1,367.3ZM656.9,373.1L664.9,372.9L665.7,366.9L660.3,367.0ZM668.4,372.9L676.7,372.7L677.3,366.6L671.7,366.7ZM680.2,372.6L688.7,372.5L689.3,366.3L683.5,366.4ZM692.4,372.4L701.2,372.3L701.6,365.9L695.6,366.1ZM705.0,372.2L714.0,372.0L714.3,365.6L708.1,365.8ZM717.9,371.9L727.2,371.8L727.4,365.3L721.0,365.4ZM731.3,371.7L740.9,371.5L740.9,364.9L734.3,365.1ZM745.1,371.4L755.0,371.3L754.8,364.5L748.0,364.7Z" fill="#e6724c"/><path d="M623.1,443.8L626.9,444.0L628.2,440.0L625.0,439.8ZM635.1,444.7L639.0,444.9L640.3,440.9L637.0,440.6ZM647.4,445.6L651.5,445.9L652.7,441.7L649.3,441.5ZM660.2,446.5L664.4,446.9L665.6,442.6L662.1,442.4ZM673.4,447.5L677.7,447.9L678.9,443.6L675.2,443.3ZM687.1,448.6L691.5,448.9L692.6,444.5L688.9,444.3ZM701.2,449.6L705.8,450.0L706.9,445.5L703.0,445.2ZM715.8,450.7L720.6,451.1L721.6,446.5L717.6,446.3ZM731.0,451.9L736.0,452.2L736.9,447.6L732.7,447.3ZM626.4,433.9L630.2,434.1L631.5,430.2L628.4,430.0ZM638.3,434.6L642.2,434.8L643.5,430.9L640.2,430.7ZM650.6,435.4L654.6,435.6L655.8,431.6L652.4,431.4ZM663.2,436.1L667.4,436.4L668.5,432.3L665.1,432.1ZM676.3,436.9L680.6,437.2L681.7,433.0L678.1,432.8ZM689.8,437.8L694.2,438.1L695.3,433.8L691.6,433.6ZM703.8,438.6L708.4,438.9L709.4,434.6L705.5,434.4ZM718.3,439.5L723.0,439.8L723.9,435.4L719.9,435.2ZM733.2,440.5L738.2,440.8L739.0,436.3L734.9,436.0ZM629.7,424.3L633.5,424.4L634.7,420.6L631.6,420.5ZM641.5,424.8L645.3,425.0L646.6,421.2L643.3,421.0ZM653.6,425.4L657.6,425.6L658.8,421.7L655.5,421.5ZM666.2,426.0L670.3,426.2L671.4,422.2L668.0,422.1ZM679.1,426.7L683.3,426.9L684.4,422.8L680.9,422.6ZM692.5,427.3L696.9,427.5L697.9,423.4L694.2,423.2ZM706.3,428.0L710.8,428.2L711.8,424.0L708.0,423.8ZM720.6,428.7L725.3,428.9L726.2,424.6L722.2,424.4ZM735.4,429.4L740.3,429.6L741.1,425.3L737.0,425.1ZM632.9,414.9L636.6,415.0L637.9,411.3L634.8,411.2ZM644.6,415.3L648.4,415.4L649.6,411.7L646.4,411.6ZM656.6,415.7L660.5,415.9L661.7,412.1L658.4,411.9ZM669.0,416.2L673.1,416.3L674.2,412.4L670.8,412.3ZM681.8,416.6L686.0,416.8L687.1,412.8L683.6,412.7ZM695.1,417.1L699.4,417.3L700.4,413.3L696.8,413.1ZM708.7,417.6L713.2,417.8L714.2,413.7L710.4,413.6ZM722.9,418.1L727.5,418.3L728.4,414.1L724.5,414.0ZM737.5,418.6L742.3,418.8L743.1,414.6L739.1,414.5ZM636.0,405.7L639.7,405.8L640.9,402.2L637.8,402.2ZM647.6,406.0L651.4,406.1L652.5,402.4L649.4,402.4ZM659.5,406.3L663.4,406.4L664.5,402.7L661.3,402.6ZM671.8,406.6L675.8,406.7L676.9,402.9L673.5,402.8ZM684.5,406.9L688.6,407.0L689.7,403.1L686.2,403.1ZM697.6,407.2L701.9,407.3L702.8,403.4L699.2,403.3ZM711.1,407.5L715.5,407.6L716.4,403.7L712.7,403.6ZM725.1,407.9L729.7,408.0L730.5,403.9L726.7,403.9ZM739.5,408.2L744.3,408.3L745.1,404.2L741.1,404.1ZM639.1,396.8L642.7,396.9L643.9,393.4L640.8,393.3ZM650.5,397.0L654.3,397.0L655.4,393.4L652.3,393.4ZM662.3,397.1L666.2,397.2L667.3,393.5L664.1,393.5ZM674.5,397.3L678.5,397.3L679.5,393.6L676.2,393.6ZM687.1,397.4L691.2,397.5L692.2,393.7L688.7,393.7ZM700.0,397.6L704.3,397.6L705.2,393.8L701.7,393.8ZM713.4,397.7L717.8,397.8L718.7,393.9L715.0,393.9ZM727.2,397.9L731.8,397.9L732.6,394.0L728.8,394.0ZM741.5,398.1L746.2,398.1L747.0,394.1L743.0,394.1ZM642.0,388.1L645.6,388.1L646.8,384.7L643.8,384.7ZM653.4,388.1L657.1,388.1L658.2,384.7L655.1,384.7ZM665.1,388.2L668.9,388.2L670.0,384.6L666.8,384.6ZM677.2,388.2L681.1,388.2L682.1,384.6L678.8,384.6ZM689.6,388.2L693.7,388.2L694.6,384.5L691.2,384.5ZM702.4,388.2L706.6,388.2L707.5,384.5L704.0,384.5ZM715.7,388.2L720.0,388.2L720.9,384.4L717.2,384.4ZM729.3,388.2L733.8,388.2L734.6,384.4L730.8,384.4ZM743.5,388.2L748.1,388.2L748.8,384.3L744.9,384.3ZM644.9,379.7L648.5,379.6L649.6,376.3L646.6,376.3ZM656.2,379.5L659.9,379.5L661.0,376.1L657.9,376.1ZM667.8,379.4L671.6,379.4L672.6,375.9L669.4,376.0ZM679.7,379.3L683.6,379.3L684.6,375.8L681.4,375.8ZM692.1,379.2L696.1,379.1L697.0,375.6L693.6,375.6ZM704.8,379.0L708.9,379.0L709.8,375.4L706.3,375.4ZM717.9,378.9L722.1,378.9L723.0,375.2L719.4,375.2ZM731.4,378.8L735.8,378.7L736.6,375.0L732.9,375.0ZM745.3,378.6L749.9,378.6L750.6,374.8L746.8,374.8ZM647.8,371.4L651.3,371.3L652.4,368.0L649.4,368.1ZM658.9,371.1L662.6,371.1L663.6,367.8L660.6,367.8ZM670.4,370.9L674.2,370.8L675.2,367.5L672.0,367.5ZM682.3,370.7L686.1,370.6L687.1,367.2L683.8,367.2ZM694.4,370.4L698.4,370.3L699.4,366.9L696.0,366.9ZM707.0,370.1L711.1,370.0L712.0,366.5L708.5,366.6ZM720.0,369.9L724.2,369.8L725.0,366.2L721.5,366.3ZM733.3,369.6L737.7,369.5L738.5,365.9L734.8,366.0ZM747.2,369.3L751.7,369.2L752.4,365.5L748.6,365.6Z" fill="#f49068" opacity="0.6"/><path d="M618.0,448.0L646.0,367.0M629.9,449.0L657.0,366.7M642.2,450.0L668.4,366.4M654.9,451.0L680.0,366.1M668.1,452.1L692.1,365.8M681.6,453.2L704.4,365.4M695.7,454.3L717.2,365.1M710.3,455.5L730.4,364.7M725.4,456.7L744.0,364.4M741.0,458.0L758.0,364.0" stroke="#8a3420" stroke-width="1.1" fill="none"/><path d="M618.0,448.0L624.1,447.9L629.9,449.0L636.2,448.8L642.2,450.0L648.7,449.8L654.9,451.0L661.6,450.9L668.1,452.1L675.0,452.0L681.6,453.2L688.8,453.1L695.7,454.3L703.1,454.2L710.3,455.5L717.9,455.4L725.4,456.7L733.2,456.7L741.0,458.0M621.4,438.1L627.5,437.9L633.2,438.9L639.5,438.7L645.4,439.7L651.9,439.5L658.0,440.5L664.6,440.3L671.0,441.4L677.9,441.2L684.5,442.3L691.5,442.1L698.4,443.3L705.7,443.1L712.8,444.2L720.3,444.1L727.7,445.2L735.5,445.1L743.1,446.3M624.8,428.4L630.8,428.1L636.5,429.0L642.7,428.7L648.6,429.7L654.9,429.4L661.0,430.3L667.6,430.1L673.9,431.0L680.7,430.8L687.2,431.8L694.2,431.5L701.0,432.5L708.2,432.3L715.2,433.3L722.6,433.0L729.9,434.1L737.6,433.8L745.2,434.9M628.1,418.9L634.0,418.6L639.7,419.4L645.8,419.1L651.6,419.9L657.9,419.6L664.0,420.4L670.5,420.1L676.7,421.0L683.4,420.6L689.9,421.5L696.8,421.2L703.5,422.1L710.6,421.7L717.6,422.6L724.9,422.3L732.1,423.3L739.7,422.9L747.2,423.9M631.2,409.7L637.1,409.3L642.7,410.1L648.8,409.7L654.6,410.4L660.8,410.0L666.8,410.8L673.2,410.4L679.4,411.1L686.1,410.7L692.5,411.5L699.3,411.1L705.9,411.9L713.0,411.5L719.8,412.3L727.1,411.9L734.2,412.7L741.7,412.3L749.1,413.2M634.3,400.8L640.2,400.3L645.7,401.0L651.7,400.5L657.5,401.2L663.7,400.7L669.6,401.4L676.0,400.9L682.1,401.6L688.6,401.1L695.0,401.8L701.7,401.3L708.3,402.0L715.3,401.6L722.1,402.3L729.2,401.8L736.3,402.5L743.7,402.0L751.0,402.8M637.4,392.0L643.1,391.5L648.7,392.1L654.6,391.6L660.3,392.1L666.4,391.6L672.3,392.2L678.6,391.7L684.7,392.3L691.2,391.8L697.5,392.3L704.1,391.8L710.6,392.4L717.5,391.9L724.2,392.5L731.3,392.0L738.3,392.6L745.6,392.0L752.8,392.7M640.3,383.5L646.0,382.9L651.5,383.4L657.4,382.9L663.1,383.3L669.1,382.8L675.0,383.3L681.2,382.7L687.2,383.2L693.6,382.6L699.8,383.1L706.5,382.6L712.9,383.1L719.7,382.5L726.3,383.0L733.4,382.4L740.2,382.9L747.5,382.3L754.6,382.8M643.2,375.1L648.9,374.5L654.3,375.0L660.1,374.4L665.7,374.8L671.7,374.2L677.5,374.6L683.7,374.0L689.7,374.4L696.0,373.7L702.2,374.2L708.7,373.5L715.1,374.0L721.8,373.3L728.4,373.7L735.3,373.1L742.1,373.5L749.3,372.8L756.3,373.3M646.0,367.0L651.6,366.4L657.0,366.7L662.8,366.1L668.4,366.4L674.3,365.7L680.0,366.1L686.1,365.4L692.1,365.8L698.3,365.1L704.4,365.4L710.9,364.7L717.2,365.1L723.9,364.4L730.4,364.7L737.2,364.0L744.0,364.4L751.0,363.6L758.0,364.0" stroke="#5a2414" stroke-width="1.8" fill="none"/></g><polygon points="258.0,453.0 281.0,456.0 285.0,510.0 263.0,506.0" fill="#b2b2ae"/><polygon points="261.9,455.6 281.2,458.2 285.0,510.0 266.5,506.6" fill="#eef0f0"/><polygon points="262.9,457.3 280.6,459.7 281.5,471.6 264.0,469.0" fill="#3e4a5c"/><polygon points="264.3,472.2 281.7,474.8 284.1,506.1 267.1,503.1" fill="#56627a"/><line x1="267.8" y1="473.8" x2="270.3" y2="503.1" stroke="rgba(220,225,240,0.25)" stroke-width="0.8"/><line x1="271.2" y1="474.3" x2="273.6" y2="503.7" stroke="rgba(220,225,240,0.25)" stroke-width="0.8"/><line x1="274.6" y1="474.8" x2="277.0" y2="504.3" stroke="rgba(220,225,240,0.25)" stroke-width="0.8"/><line x1="278.0" y1="475.3" x2="280.3" y2="504.9" stroke="rgba(220,225,240,0.25)" stroke-width="0.8"/><polygon points="316.0,461.0 342.0,464.0 346.0,524.0 320.0,519.0" fill="#b2b2ae"/><polygon points="320.3,463.8 342.2,466.4 346.0,524.0 324.2,519.8" fill="#eef0f0"/><polygon points="321.5,465.7 341.5,468.1 342.4,481.3 322.4,478.5" fill="#8a9ac8"/><polygon points="322.6,482.0 342.6,484.9 344.9,519.7 324.9,515.9" fill="#98a6d2"/><line x1="326.6" y1="483.8" x2="328.8" y2="516.1" stroke="rgba(220,225,240,0.25)" stroke-width="0.8"/><line x1="330.5" y1="484.3" x2="332.7" y2="516.8" stroke="rgba(220,225,240,0.25)" stroke-width="0.8"/><line x1="334.4" y1="484.9" x2="336.6" y2="517.5" stroke="rgba(220,225,240,0.25)" stroke-width="0.8"/><line x1="338.3" y1="485.5" x2="340.5" y2="518.2" stroke="rgba(220,225,240,0.25)" stroke-width="0.8"/><polygon points="386.0,471.0 420.0,475.0 421.0,542.0 389.0,536.0" fill="#b2b2ae"/><polygon points="391.5,474.3 420.0,477.7 421.0,542.0 394.1,537.0" fill="#eef0f0"/><polygon points="393.0,476.4 419.1,479.6 419.3,494.3 393.6,490.8" fill="#8a9ac8"/><polygon points="393.7,494.7 419.4,498.3 420.0,537.1 395.2,532.6" fill="#98a6d2"/><line x1="398.8" y1="496.7" x2="400.0" y2="532.8" stroke="rgba(220,225,240,0.25)" stroke-width="0.8"/><line x1="403.7" y1="497.4" x2="404.8" y2="533.7" stroke="rgba(220,225,240,0.25)" stroke-width="0.8"/><line x1="408.7" y1="498.1" x2="409.7" y2="534.6" stroke="rgba(220,225,240,0.25)" stroke-width="0.8"/><line x1="413.7" y1="498.8" x2="414.5" y2="535.5" stroke="rgba(220,225,240,0.25)" stroke-width="0.8"/><polygon points="475.0,483.0 519.0,489.0 518.0,564.0 476.0,555.0" fill="#b2b2ae"/><polygon points="482.1,486.9 519.0,492.0 518.0,564.0 482.7,556.4" fill="#eef0f0"/><polygon points="483.8,489.3 517.6,494.1 517.4,510.5 484.0,505.3" fill="#3e4a5c"/><polygon points="484.0,509.6 517.4,515.0 516.8,558.5 484.4,551.7" fill="#56627a"/><line x1="490.5" y1="512.1" x2="490.7" y2="552.3" stroke="rgba(220,225,240,0.25)" stroke-width="0.8"/><line x1="497.0" y1="513.2" x2="497.0" y2="553.6" stroke="rgba(220,225,240,0.25)" stroke-width="0.8"/><line x1="503.5" y1="514.3" x2="503.3" y2="554.9" stroke="rgba(220,225,240,0.25)" stroke-width="0.8"/><line x1="510.0" y1="515.3" x2="509.6" y2="556.2" stroke="rgba(220,225,240,0.25)" stroke-width="0.8"/><polygon points="270.0,564.0 292.0,569.0 296.0,619.0 274.0,613.0" fill="#b2b2ae"/><polygon points="273.7,566.8 292.2,571.0 296.0,619.0 277.5,614.0" fill="#eef0f0"/><polygon points="274.7,568.4 291.6,572.3 292.5,583.3 275.6,579.3" fill="#8a9ac8"/><polygon points="275.8,582.2 292.7,586.3 295.1,615.3 278.1,610.8" fill="#98a6d2"/><line x1="279.2" y1="584.0" x2="281.4" y2="611.2" stroke="rgba(220,225,240,0.25)" stroke-width="0.8"/><line x1="282.5" y1="584.8" x2="284.7" y2="612.0" stroke="rgba(220,225,240,0.25)" stroke-width="0.8"/><line x1="285.8" y1="585.6" x2="288.0" y2="612.9" stroke="rgba(220,225,240,0.25)" stroke-width="0.8"/><line x1="289.1" y1="586.4" x2="291.3" y2="613.8" stroke="rgba(220,225,240,0.25)" stroke-width="0.8"/><polygon points="325.0,583.0 351.0,589.0 354.0,642.0 329.0,634.0" fill="#b2b2ae"/><polygon points="329.3,586.0 351.1,591.1 354.0,642.0 333.0,635.3" fill="#eef0f0"/><polygon points="330.5,587.8 350.4,592.5 351.1,604.2 331.3,599.1" fill="#3e4a5c"/><polygon points="331.5,602.2 351.3,607.3 353.0,638.1 333.7,632.0" fill="#56627a"/><line x1="335.5" y1="604.2" x2="337.5" y2="632.7" stroke="rgba(220,225,240,0.25)" stroke-width="0.8"/><line x1="339.3" y1="605.2" x2="341.2" y2="633.8" stroke="rgba(220,225,240,0.25)" stroke-width="0.8"/><line x1="343.1" y1="606.3" x2="345.0" y2="635.0" stroke="rgba(220,225,240,0.25)" stroke-width="0.8"/><line x1="347.0" y1="607.3" x2="348.7" y2="636.2" stroke="rgba(220,225,240,0.25)" stroke-width="0.8"/><polygon points="393.0,605.0 425.0,612.0 426.0,673.0 395.0,663.0" fill="#b2b2ae"/><polygon points="398.2,608.5 425.0,614.4 426.0,673.0 400.0,664.6" fill="#eef0f0"/><polygon points="399.5,610.5 424.1,616.1 424.3,629.5 399.9,623.4" fill="#8a9ac8"/><polygon points="400.0,626.9 424.4,633.1 425.0,668.4 401.1,660.9" fill="#98a6d2"/><line x1="404.8" y1="629.3" x2="405.7" y2="661.8" stroke="rgba(220,225,240,0.25)" stroke-width="0.8"/><line x1="409.6" y1="630.5" x2="410.4" y2="663.2" stroke="rgba(220,225,240,0.25)" stroke-width="0.8"/><line x1="414.3" y1="631.7" x2="415.0" y2="664.7" stroke="rgba(220,225,240,0.25)" stroke-width="0.8"/><line x1="419.0" y1="632.9" x2="419.7" y2="666.2" stroke="rgba(220,225,240,0.25)" stroke-width="0.8"/><polygon points="476.0,632.0 518.0,644.0 516.0,709.0 476.0,696.0" fill="#b2b2ae"/><polygon points="482.7,636.5 517.9,646.6 516.0,709.0 482.4,698.1" fill="#eef0f0"/><polygon points="484.4,638.9 516.6,648.2 516.2,662.5 484.3,653.0" fill="#3e4a5c"/><polygon points="484.3,656.9 516.1,666.4 514.9,704.1 484.0,694.1" fill="#56627a"/><line x1="490.4" y1="660.0" x2="490.1" y2="695.4" stroke="rgba(220,225,240,0.25)" stroke-width="0.8"/><line x1="496.6" y1="661.9" x2="496.1" y2="697.3" stroke="rgba(220,225,240,0.25)" stroke-width="0.8"/><line x1="502.8" y1="663.7" x2="502.1" y2="699.3" stroke="rgba(220,225,240,0.25)" stroke-width="0.8"/><line x1="509.0" y1="665.6" x2="508.1" y2="701.2" stroke="rgba(220,225,240,0.25)" stroke-width="0.8"/><polygon points="224.0,419.0 314.0,315.0 345.0,312.0 345.0,288.0 353.0,285.0 369.0,285.0 377.0,288.0 377.0,311.0 651.0,279.0 661.0,278.0 673.0,365.0 758.0,363.0 755.0,442.0 741.0,540.0 704.0,775.0 600.0,734.0 573.0,784.0 252.0,632.0 226.0,428.0" fill="none" stroke="#f2a23a" stroke-width="1.2"/><circle cx="455" cy="632" r="2.8" fill="none" stroke="#111" stroke-width="1"/><circle cx="455" cy="632" r="1.8" fill="none" stroke="#f0a030" stroke-width="0.8"/><circle cx="488" cy="241" r="9" fill="none" stroke="#fff" stroke-width="1.5" stroke-dasharray="4.7 4.7"/><circle cx="488" cy="241" r="9" fill="none" stroke="#c81e1e" stroke-width="1.5" stroke-dasharray="4.7 4.7" stroke-dashoffset="4.7"/><path d="M469 241 H482 M494 241 H507 M488 222 V235 M488 247 V260" stroke="#000" stroke-width="1.2"/><path d="M193 883 V855" stroke="#2a3af0" stroke-width="2"/><path d="M193 883 L211 874" stroke="#3ac83a" stroke-width="2"/><path d="M193 883 L213 886" stroke="#e82a2a" stroke-width="2"/><text x="196" y="860" font-size="10" fill="#3a4ad0" font-family="Liberation Sans">z</text><text x="206" y="874" font-size="10" fill="#4ac84a" font-family="Liberation Sans">y</text><text x="216" y="891" font-size="10" fill="#e03030" font-family="Liberation Sans">x</text></svg>
<div class="t " style="left:187px;top:68.43px;font-size:11.3px;color:#fff;">User Persp</div>
<div class="t " style="left:187px;top:88.43px;font-size:11.3px;color:#fff;">Meters</div>
<div class="t " style="left:238px;top:895.43px;font-size:11.3px;color:#fff;">(1) 1_2000_House</div>
<div class="a " style="left:820px;top:57px;width:180px;height:857px;background:#727272"></div>
<div class="a " style="left:828px;top:57px;width:147px;height:18px;background:linear-gradient(#b0b0b0,#8c8c8c);border:1px solid #2a2a2a;border-radius:4px;"><div class="bl" style="left:0px;right:0;top:1px;text-align:center;line-height:16px;font-size:11.3px;color:#000">New Layer</div></div>
<div class="a " style="left:828px;top:77px;width:73px;height:20px;background:linear-gradient(#8a8a8a,#7c7c7c);border:1px solid #545454;border-radius:4px 0px 0px 4px;"><div class="bl" style="left:0px;right:0;top:1px;text-align:center;line-height:18px;font-size:11.3px;color:#5e5e5e">Delete Fra...</div></div>
<div class="a " style="left:900px;top:77px;width:75px;height:20px;background:linear-gradient(#8a8a8a,#7c7c7c);border:1px solid #545454;border-radius:0px 4px 4px 0px;"><div class="bl" style="left:0px;right:0;top:1px;text-align:center;line-height:18px;font-size:11.3px;color:#5e5e5e">Convert</div></div>
<div class="a " style="left:823px;top:104px;width:155px;height:1px;background:#4e4e4e"></div>
<div class="a " style="left:823px;top:105px;width:155px;height:1px;background:#8a8a8a"></div>
<div class="a" style="left:834px;top:114px;width:0;height:0;border-left:4px solid transparent;border-right:4px solid transparent;border-top:7px solid #1a1a1a"></div>
<div class="t " style="left:845px;top:110.59px;font-size:12.3px;color:#000;">View</div>
<svg class="a" style="left:960px;top:106px" width="16" height="16"><line x1="0" y1="0" x2="16" y2="16" stroke="rgba(40,40,40,0.55)" stroke-width="1"/><line x1="1" y1="0" x2="16" y2="15" stroke="rgba(200,200,200,0.35)" stroke-width="1"/><line x1="4" y1="0" x2="16" y2="12" stroke="rgba(40,40,40,0.55)" stroke-width="1"/><line x1="5" y1="0" x2="16" y2="11" stroke="rgba(200,200,200,0.35)" stroke-width="1"/><line x1="8" y1="0" x2="16" y2="8" stroke="rgba(40,40,40,0.55)" stroke-width="1"/><line x1="9" y1="0" x2="16" y2="7" stroke="rgba(200,200,200,0.35)" stroke-width="1"/></svg>
<div class="a " style="left:828px;top:138px;width:147px;height:19px;background:linear-gradient(#a6a6a6,#bababa);border:1px solid #2a2a2a;border-radius:8px;"><div class="bl" style="left:14px;top:1px;line-height:17px;color:#000">Lens:</div><div class="bl" style="right:15px;top:1px;line-height:17px;color:#000">35mm</div><div class="arl" style="top:5.5px;border-right-color:#808080"></div><div class="arr" style="top:5.5px;border-left-color:#808080"></div></div>
<div class="t " style="left:836px;top:165.43px;font-size:11.3px;color:#000;">Lock to Object:</div>
<div class="a " style="left:828px;top:181px;width:147px;height:20px;background:linear-gradient(#9c9c9c,#b8b8b8);border:1px solid #2a2a2a;border-radius:4px;"></div>
<svg class="a" style="left:834px;top:183px;" width="15" height="15" viewBox="0 0 15 15"><path d="M7.5 1 L13.5 3.5 V11 L7.5 14 L1.5 11 V3.5Z" fill="#f5b862" stroke="#3a2a10" stroke-width="1"/><path d="M7.5 6 L13.5 3.5 V11 L7.5 14Z" fill="#e08a20"/><path d="M1.5 3.5 L7.5 6 L13.5 3.5" stroke="#fff3d0" fill="none" stroke-width="0.8"/></svg>
<div class="a " style="left:831px;top:207px;width:14px;height:14px;background:linear-gradient(#5a5a5a,#3c3c3c);border:1px solid #222;border-radius:3px;"></div>
<div class="t " style="left:853px;top:210.43px;font-size:11.3px;color:#000;">Lock to Cursor</div>
<div class="a " style="left:831px;top:232px;width:14px;height:14px;background:linear-gradient(#5a5a5a,#3c3c3c);border:1px solid #222;border-radius:3px;"></div>
<div class="t " style="left:853px;top:235.43px;font-size:11.3px;color:#000;">Lock Camera to View</div>
<div class="t " style="left:836px;top:259.43px;font-size:11.3px;color:#000;">Clip:</div>
<div class="a " style="left:828px;top:274px;width:147px;height:19px;background:linear-gradient(#a6a6a6,#bababa);border:1px solid #2a2a2a;border-radius:8px 8px 0px 0px;"><div class="bl" style="left:14px;top:1px;line-height:17px;color:#000">Start:</div><div class="bl" style="right:15px;top:1px;line-height:17px;color:#000">10cm</div><div class="arl" style="top:5.5px;border-right-color:#808080"></div><div class="arr" style="top:5.5px;border-left-color:#808080"></div></div>
<div class="a " style="left:828px;top:292px;width:147px;height:20px;background:linear-gradient(#a6a6a6,#bababa);border:1px solid #2a2a2a;border-radius:0px 0px 8px 8px;"><div class="bl" style="left:14px;top:1px;line-height:18px;color:#000">End:</div><div class="bl" style="right:15px;top:1px;line-height:18px;color:#000">1km</div><div class="arl" style="top:6.0px;border-right-color:#808080"></div><div class="arr" style="top:6.0px;border-left-color:#808080"></div></div>
<div class="t " style="left:836px;top:319.43px;font-size:11.3px;color:#505050;">Local Camera:</div>
<div class="a " style="left:828px;top:334px;width:147px;height:19px;background:linear-gradient(#8c8c8c,#969696);border:1px solid #5a5a5a;border-radius:4px;"></div>
<svg class="a" style="left:834px;top:336px;" width="15" height="15" viewBox="0 0 15 15"><path d="M7.5 1 L13.5 3.5 V11 L7.5 14 L1.5 11 V3.5Z" fill="#d8b080" stroke="#5a4a30" stroke-width="1"/><path d="M7.5 6 L13.5 3.5 V11 L7.5 14Z" fill="#c09060"/></svg>
<div class="t " style="left:853px;top:339.43px;font-size:11.3px;color:#5a5a5a;">Camera</div>
<svg class="a" style="left:957px;top:336px;" width="14" height="14" viewBox="0 0 14 14"><path d="M3 3 L11 11 M11 3 L3 11" stroke="#eee" stroke-width="2"/></svg>
<div class="a " style="left:831px;top:361px;width:14px;height:14px;background:linear-gradient(#5a5a5a,#3c3c3c);border:1px solid #222;border-radius:3px;"></div>
<div class="t " style="left:853px;top:364.43px;font-size:11.3px;color:#000;">Render Border</div>
<div class="a " style="left:823px;top:386px;width:155px;height:1px;background:#4e4e4e"></div>
<div class="a " style="left:823px;top:387px;width:155px;height:1px;background:#8a8a8a"></div>
<div class="a" style="left:834px;top:394px;width:0;height:0;border-left:4px solid transparent;border-right:4px solid transparent;border-top:7px solid #1a1a1a"></div>
<div class="t " style="left:845px;top:390.59px;font-size:12.3px;color:#000;">3D Cursor</div>
<svg class="a" style="left:960px;top:388px" width="16" height="16"><line x1="0" y1="0" x2="16" y2="16" stroke="rgba(40,40,40,0.55)" stroke-width="1"/><line x1="1" y1="0" x2="16" y2="15" stroke="rgba(200,200,200,0.35)" stroke-width="1"/><line x1="4" y1="0" x2="16" y2="12" stroke="rgba(40,40,40,0.55)" stroke-width="1"/><line x1="5" y1="0" x2="16" y2="11" stroke="rgba(200,200,200,0.35)" stroke-width="1"/><line x1="8" y1="0" x2="16" y2="8" stroke="rgba(40,40,40,0.55)" stroke-width="1"/><line x1="9" y1="0" x2="16" y2="7" stroke="rgba(200,200,200,0.35)" stroke-width="1"/></svg>
<div class="t " style="left:836px;top:424.43px;font-size:11.3px;color:#000;">Location:</div>
<div class="a " style="left:828px;top:439px;width:147px;height:20px;background:linear-gradient(#a6a6a6,#bababa);border:1px solid #2a2a2a;border-radius:8px 8px 0px 0px;"><div class="bl" style="left:14px;top:1px;line-height:18px;color:#000">X:</div><div class="bl" style="right:15px;top:1px;line-height:18px;color:#000">4.9138mm</div><div class="arl" style="top:6.0px;border-right-color:#808080"></div><div class="arr" style="top:6.0px;border-left-color:#808080"></div></div>
<div class="a " style="left:828px;top:458px;width:147px;height:20px;background:linear-gradient(#a6a6a6,#bababa);border:1px solid #2a2a2a;border-radius:0;"><div class="bl" style="left:14px;top:1px;line-height:18px;color:#000">Y:</div><div class="bl" style="right:15px;top:1px;line-height:18px;color:#000">1.8748m</div><div class="arl" style="top:6.0px;border-right-color:#808080"></div><div class="arr" style="top:6.0px;border-left-color:#808080"></div></div>
<div class="a " style="left:828px;top:477px;width:147px;height:21px;background:linear-gradient(#a6a6a6,#bababa);border:1px solid #2a2a2a;border-radius:0px 0px 8px 8px;"><div class="bl" style="left:14px;top:1px;line-height:19px;color:#000">Z:</div><div class="bl" style="right:15px;top:1px;line-height:19px;color:#000">10.9308m</div><div class="arl" style="top:6.5px;border-right-color:#808080"></div><div class="arr" style="top:6.5px;border-left-color:#808080"></div></div>
<div class="a " style="left:823px;top:505px;width:155px;height:1px;background:#4e4e4e"></div>
<div class="a " style="left:823px;top:506px;width:155px;height:1px;background:#8a8a8a"></div>
<div class="a" style="left:834px;top:514px;width:0;height:0;border-left:4px solid transparent;border-right:4px solid transparent;border-top:7px solid #1a1a1a"></div>
<div class="t " style="left:845px;top:510.59px;font-size:12.3px;color:#000;">Item</div>
<svg class="a" style="left:960px;top:507px" width="16" height="16"><line x1="0" y1="0" x2="16" y2="16" stroke="rgba(40,40,40,0.55)" stroke-width="1"/><line x1="1" y1="0" x2="16" y2="15" stroke="rgba(200,200,200,0.35)" stroke-width="1"/><line x1="4" y1="0" x2="16" y2="12" stroke="rgba(40,40,40,0.55)" stroke-width="1"/><line x1="5" y1="0" x2="16" y2="11" stroke="rgba(200,200,200,0.35)" stroke-width="1"/><line x1="8" y1="0" x2="16" y2="8" stroke="rgba(40,40,40,0.55)" stroke-width="1"/><line x1="9" y1="0" x2="16" y2="7" stroke="rgba(200,200,200,0.35)" stroke-width="1"/></svg>
<svg class="a" style="left:834px;top:541px;" width="15" height="15" viewBox="0 0 15 15"><path d="M7.5 1 L13.5 3.5 V11 L7.5 14 L1.5 11 V3.5Z" fill="#f5b862" stroke="#3a2a10" stroke-width="1"/><path d="M7.5 6 L13.5 3.5 V11 L7.5 14Z" fill="#e08a20"/><path d="M1.5 3.5 L7.5 6 L13.5 3.5" stroke="#fff3d0" fill="none" stroke-width="0.8"/></svg>
<div class="a " style="left:856px;top:539px;width:119px;height:19px;background:linear-gradient(#9c9c9c,#b8b8b8);border:1px solid #2a2a2a;border-radius:4px;"><div class="bl" style="left:7px;right:0;top:1px;text-align:left;line-height:17px;font-size:11.3px;color:#000">1_2000_House</div></div>
<div class="a " style="left:823px;top:565px;width:155px;height:1px;background:#4e4e4e"></div>
<div class="a " style="left:823px;top:566px;width:155px;height:1px;background:#8a8a8a"></div>
<div class="a" style="left:834px;top:574px;width:0;height:0;border-left:4px solid transparent;border-right:4px solid transparent;border-top:7px solid #1a1a1a"></div>
<div class="t " style="left:845px;top:570.59px;font-size:12.3px;color:#000;">Display</div>
<svg class="a" style="left:960px;top:567px" width="16" height="16"><line x1="0" y1="0" x2="16" y2="16" stroke="rgba(40,40,40,0.55)" stroke-width="1"/><line x1="1" y1="0" x2="16" y2="15" stroke="rgba(200,200,200,0.35)" stroke-width="1"/><line x1="4" y1="0" x2="16" y2="12" stroke="rgba(40,40,40,0.55)" stroke-width="1"/><line x1="5" y1="0" x2="16" y2="11" stroke="rgba(200,200,200,0.35)" stroke-width="1"/><line x1="8" y1="0" x2="16" y2="8" stroke="rgba(40,40,40,0.55)" stroke-width="1"/><line x1="9" y1="0" x2="16" y2="7" stroke="rgba(200,200,200,0.35)" stroke-width="1"/></svg>
<div class="a " style="left:831px;top:601px;width:14px;height:14px;background:linear-gradient(#5a5a5a,#3c3c3c);border:1px solid #222;border-radius:3px;"></div>
<div class="t " style="left:853px;top:604.43px;font-size:11.3px;color:#000;">Only Render</div>
<div class="a " style="left:831px;top:626px;width:14px;height:14px;background:linear-gradient(#5a5a5a,#3c3c3c);border:1px solid #222;border-radius:3px;"><svg width="14" height="14" viewBox="0 0 14 14" style="position:absolute;left:0;top:-2px"><path d="M3 7.2 L6 10.2 L12.5 1.8" stroke="#e8e8e8" stroke-width="1.7" fill="none" stroke-linecap="round" stroke-linejoin="round"/></svg></div>
<div class="t " style="left:853px;top:629.43px;font-size:11.3px;color:#fff;">Outline Selected</div>
<div class="a " style="left:831px;top:648px;width:14px;height:14px;background:linear-gradient(#5a5a5a,#3c3c3c);border:1px solid #222;border-radius:3px;"></div>
<div class="t " style="left:853px;top:651.43px;font-size:11.3px;color:#000;">All Object Origins</div>
<div class="a " style="left:831px;top:670px;width:14px;height:14px;background:linear-gradient(#5a5a5a,#3c3c3c);border:1px solid #222;border-radius:3px;"><svg width="14" height="14" viewBox="0 0 14 14" style="position:absolute;left:0;top:-2px"><path d="M3 7.2 L6 10.2 L12.5 1.8" stroke="#e8e8e8" stroke-width="1.7" fill="none" stroke-linecap="round" stroke-linejoin="round"/></svg></div>
<div class="t " style="left:853px;top:673.43px;font-size:11.3px;color:#fff;">Relationship Lines</div>
<div class="a " style="left:831px;top:695px;width:14px;height:14px;background:linear-gradient(#5a5a5a,#3c3c3c);border:1px solid #222;border-radius:3px;"><svg width="14" height="14" viewBox="0 0 14 14" style="position:absolute;left:0;top:-2px"><path d="M3 7.2 L6 10.2 L12.5 1.8" stroke="#e8e8e8" stroke-width="1.7" fill="none" stroke-linecap="round" stroke-linejoin="round"/></svg></div>
<div class="t " style="left:853px;top:698.43px;font-size:11.3px;color:#fff;">Grid Floo</div>
<div class="a " style="left:912px;top:693px;width:21px;height:19px;background:linear-gradient(#555,#3a3a3a);border:1px solid #1a1a1a;border-radius:4px 0px 0px 4px;"><div class="bl" style="left:0px;right:0;top:1px;text-align:center;line-height:17px;font-size:11.3px;color:#fff">X</div></div>
<div class="a " style="left:932px;top:693px;width:22px;height:19px;background:linear-gradient(#555,#3a3a3a);border:1px solid #1a1a1a;border-radius:0;"><div class="bl" style="left:0px;right:0;top:1px;text-align:center;line-height:17px;font-size:11.3px;color:#fff">Y</div></div>
<div class="a " style="left:953px;top:693px;width:22px;height:19px;background:linear-gradient(#b0b0b0,#8c8c8c);border:1px solid #2a2a2a;border-radius:0px 4px 4px 0px;"><div class="bl" style="left:0px;right:0;top:1px;text-align:center;line-height:17px;font-size:11.3px;color:#000">Z</div></div>
<div class="a " style="left:828px;top:715px;width:147px;height:20px;background:linear-gradient(#a6a6a6,#bababa);border:1px solid #2a2a2a;border-radius:8px 8px 0px 0px;"><div class="bl" style="left:14px;top:1px;line-height:18px;color:#000">Lines:</div><div class="bl" style="right:15px;top:1px;line-height:18px;color:#000">16</div><div class="arl" style="top:6.0px;border-right-color:#808080"></div><div class="arr" style="top:6.0px;border-left-color:#808080"></div></div>
<div class="a " style="left:828px;top:734px;width:147px;height:20px;background:linear-gradient(#a6a6a6,#bababa);border:1px solid #2a2a2a;border-radius:0;"><div class="bl" style="left:14px;top:1px;line-height:18px;color:#000">Scale:</div><div class="bl" style="right:15px;top:1px;line-height:18px;color:#000">1.000</div><div class="arl" style="top:6.0px;border-right-color:#808080"></div><div class="arr" style="top:6.0px;border-left-color:#808080"></div></div>
<div class="a " style="left:828px;top:753px;width:147px;height:20px;background:linear-gradient(#8c8c8c,#969696);border:1px solid #5a5a5a;border-radius:0px 0px 8px 8px;"><div class="bl" style="left:14px;top:1px;line-height:18px;color:#5e5e5e">Subdivisions:</div><div class="bl" style="right:15px;top:1px;line-height:18px;color:#5e5e5e">10</div><div class="arl" style="top:6.0px;border-right-color:#8a8a8a"></div><div class="arr" style="top:6.0px;border-left-color:#8a8a8a"></div></div>
<div class="a " style="left:828px;top:791px;width:147px;height:19px;background:linear-gradient(#b0b0b0,#8c8c8c);border:1px solid #2a2a2a;border-radius:4px;"><div class="bl" style="left:0px;right:0;top:1px;text-align:center;line-height:17px;font-size:11.3px;color:#000">Toggle Quad View</div></div>
<div class="a " style="left:823px;top:817px;width:155px;height:1px;background:#4e4e4e"></div>
<div class="a " style="left:823px;top:818px;width:155px;height:1px;background:#8a8a8a"></div>
<div class="a" style="left:834px;top:825px;width:0;height:0;border-top:4px solid transparent;border-bottom:4px solid transparent;border-left:7px solid #1a1a1a"></div>
<div class="t " style="left:845px;top:823.59px;font-size:12.3px;color:#000;">Shading</div>
<svg class="a" style="left:960px;top:819px" width="16" height="16"><line x1="0" y1="0" x2="16" y2="16" stroke="rgba(40,40,40,0.55)" stroke-width="1"/><line x1="1" y1="0" x2="16" y2="15" stroke="rgba(200,200,200,0.35)" stroke-width="1"/><line x1="4" y1="0" x2="16" y2="12" stroke="rgba(40,40,40,0.55)" stroke-width="1"/><line x1="5" y1="0" x2="16" y2="11" stroke="rgba(200,200,200,0.35)" stroke-width="1"/><line x1="8" y1="0" x2="16" y2="8" stroke="rgba(40,40,40,0.55)" stroke-width="1"/><line x1="9" y1="0" x2="16" y2="7" stroke="rgba(200,200,200,0.35)" stroke-width="1"/></svg>
<div class="a " style="left:823px;top:842px;width:155px;height:1px;background:#4e4e4e"></div>
<div class="a " style="left:823px;top:843px;width:155px;height:1px;background:#8a8a8a"></div>
<div class="a" style="left:834px;top:850px;width:0;height:0;border-top:4px solid transparent;border-bottom:4px solid transparent;border-left:7px solid #1a1a1a"></div>
<div class="a " style="left:845px;top:847px;width:14px;height:14px;background:linear-gradient(#5a5a5a,#3c3c3c);border:1px solid #222;border-radius:3px"><svg width="14" height="14" viewBox="0 0 14 14" style="position:absolute;left:0;top:-2px"><path d="M3 7.2 L6 10.2 L12.5 1.8" stroke="#e8e8e8" stroke-width="1.7" fill="none" stroke-linecap="round" stroke-linejoin="round"/></svg></div>
<div class="t " style="left:865px;top:848.59px;font-size:12.3px;color:#000;">Motion Tracking</div>
<svg class="a" style="left:960px;top:844px" width="16" height="16"><line x1="0" y1="0" x2="16" y2="16" stroke="rgba(40,40,40,0.55)" stroke-width="1"/><line x1="1" y1="0" x2="16" y2="15" stroke="rgba(200,200,200,0.35)" stroke-width="1"/><line x1="4" y1="0" x2="16" y2="12" stroke="rgba(40,40,40,0.55)" stroke-width="1"/><line x1="5" y1="0" x2="16" y2="11" stroke="rgba(200,200,200,0.35)" stroke-width="1"/><line x1="8" y1="0" x2="16" y2="8" stroke="rgba(40,40,40,0.55)" stroke-width="1"/><line x1="9" y1="0" x2="16" y2="7" stroke="rgba(200,200,200,0.35)" stroke-width="1"/></svg>
<div class="a " style="left:823px;top:866px;width:155px;height:1px;background:#4e4e4e"></div>
<div class="a " style="left:823px;top:867px;width:155px;height:1px;background:#8a8a8a"></div>
<div class="a" style="left:834px;top:874px;width:0;height:0;border-top:4px solid transparent;border-bottom:4px solid transparent;border-left:7px solid #1a1a1a"></div>
<div class="a " style="left:845px;top:871px;width:14px;height:14px;background:linear-gradient(#5a5a5a,#3c3c3c);border:1px solid #222;border-radius:3px"></div>
<div class="t " style="left:865px;top:872.59px;font-size:12.3px;color:#000;">Background Images</div>
<svg class="a" style="left:960px;top:868px" width="16" height="16"><line x1="0" y1="0" x2="16" y2="16" stroke="rgba(40,40,40,0.55)" stroke-width="1"/><line x1="1" y1="0" x2="16" y2="15" stroke="rgba(200,200,200,0.35)" stroke-width="1"/><line x1="4" y1="0" x2="16" y2="12" stroke="rgba(40,40,40,0.55)" stroke-width="1"/><line x1="5" y1="0" x2="16" y2="11" stroke="rgba(200,200,200,0.35)" stroke-width="1"/><line x1="8" y1="0" x2="16" y2="8" stroke="rgba(40,40,40,0.55)" stroke-width="1"/><line x1="9" y1="0" x2="16" y2="7" stroke="rgba(200,200,200,0.35)" stroke-width="1"/></svg>
<div class="a " style="left:823px;top:890px;width:155px;height:1px;background:#4e4e4e"></div>
<div class="a " style="left:823px;top:891px;width:155px;height:1px;background:#8a8a8a"></div>
<div class="a" style="left:834px;top:898px;width:0;height:0;border-top:4px solid transparent;border-bottom:4px solid transparent;border-left:7px solid #1a1a1a"></div>
<div class="t " style="left:845px;top:896.59px;font-size:12.3px;color:#000;">Transform Orientations</div>
<svg class="a" style="left:960px;top:892px" width="16" height="16"><line x1="0" y1="0" x2="16" y2="16" stroke="rgba(40,40,40,0.55)" stroke-width="1"/><line x1="1" y1="0" x2="16" y2="15" stroke="rgba(200,200,200,0.35)" stroke-width="1"/><line x1="4" y1="0" x2="16" y2="12" stroke="rgba(40,40,40,0.55)" stroke-width="1"/><line x1="5" y1="0" x2="16" y2="11" stroke="rgba(200,200,200,0.35)" stroke-width="1"/><line x1="8" y1="0" x2="16" y2="8" stroke="rgba(40,40,40,0.55)" stroke-width="1"/><line x1="9" y1="0" x2="16" y2="7" stroke="rgba(200,200,200,0.35)" stroke-width="1"/></svg>
<div class="a " style="left:983px;top:62px;width:13px;height:847px;background:#5e5e5e;border:1px solid #4e4e4e;border-radius:7px"></div>
<div class="a " style="left:983px;top:354px;width:13px;height:555px;background:linear-gradient(90deg,#8e8e8e,#a0a0a0 45%,#8a8a8a);border:1px solid #4a4a4a;border-radius:7px"></div>
<div class="a " style="left:8px;top:914px;width:992px;height:26px;background:#727272"></div>
<div class="a " style="left:8px;top:914px;width:992px;height:1px;background:#8a8a8a"></div>
<svg class="a" style="left:8px;top:924px" width="16" height="16"><line x1="0" y1="0" x2="16" y2="16" stroke="rgba(30,30,30,0.7)" stroke-width="1"/><line x1="0" y1="1" x2="15" y2="16" stroke="rgba(210,210,210,0.45)" stroke-width="1"/><line x1="0" y1="4" x2="12" y2="16" stroke="rgba(30,30,30,0.7)" stroke-width="1"/><line x1="0" y1="5" x2="11" y2="16" stroke="rgba(210,210,210,0.45)" stroke-width="1"/><line x1="0" y1="8" x2="8" y2="16" stroke="rgba(30,30,30,0.7)" stroke-width="1"/><line x1="0" y1="9" x2="7" y2="16" stroke="rgba(210,210,210,0.45)" stroke-width="1"/></svg>
<div class="a " style="left:17px;top:917px;width:30px;height:20px;background:linear-gradient(#555,#3a3a3a);border:1px solid #1a1a1a;border-radius:4px;"></div>
<svg class="a" style="left:21px;top:919px;" width="16" height="16" viewBox="0 0 16 16"><path d="M8 1 L14 3.5 V11.5 L8 14.5 L2 11.5 V3.5Z" fill="#eee" stroke="#111" stroke-width="1.1"/><path d="M8 6 L14 3.5 V11.5 L8 14.5Z" fill="#8a8a8a"/></svg>
<svg class="a" style="left:37px;top:920px;" width="8" height="14" viewBox="0 0 8 14"><path d="M4 0.5 L7.5 5.5 L0.5 5.5Z M4 13.5 L7.5 8.5 L0.5 8.5Z" fill="#c8c8c8"/></svg>
<div class="t " style="left:60px;top:923.43px;font-size:11.3px;color:#000;">View</div>
<div class="t " style="left:104px;top:923.43px;font-size:11.3px;color:#000;">Select</div>
<div class="t " style="left:155px;top:923.43px;font-size:11.3px;color:#000;">Add</div>
<div class="t " style="left:194px;top:923.43px;font-size:11.3px;color:#000;">Object</div>
<div class="a " style="left:240px;top:917px;width:112px;height:20px;background:linear-gradient(#555,#383838);border:1px solid #1a1a1a;border-radius:4px;"><div class="bl" style="left:23px;right:0;top:1px;text-align:left;line-height:18px;font-size:11.3px;color:#fff">Object Mode</div></div>
<svg class="a" style="left:245px;top:920px;" width="15" height="15" viewBox="0 0 15 15"><path d="M7.5 1 L13.5 3.5 V11 L7.5 14 L1.5 11 V3.5Z" fill="#f5b862" stroke="#3a2a10" stroke-width="1"/><path d="M7.5 6 L13.5 3.5 V11 L7.5 14Z" fill="#e08a20"/></svg>
<svg class="a" style="left:342px;top:920px;" width="8" height="14" viewBox="0 0 8 14"><path d="M4 0.5 L7.5 5.5 L0.5 5.5Z M4 13.5 L7.5 8.5 L0.5 8.5Z" fill="#c8c8c8"/></svg>
<div class="a " style="left:358px;top:917px;width:35px;height:20px;background:linear-gradient(#555,#3a3a3a);border:1px solid #1a1a1a;border-radius:4px;"></div>
<svg class="a" style="left:362px;top:920px;" width="15" height="15" viewBox="0 0 15 15"><circle cx="7.5" cy="7.5" r="6" fill="#fff" stroke="#222"/><circle cx="7.5" cy="7.5" r="6" fill="none" stroke="#c02020" stroke-width="3" stroke-dasharray="4 5.4"/><circle cx="7.5" cy="7.5" r="2" fill="#c02020"/></svg>
<svg class="a" style="left:383px;top:920px;" width="8" height="14" viewBox="0 0 8 14"><path d="M4 0.5 L7.5 5.5 L0.5 5.5Z M4 13.5 L7.5 8.5 L0.5 8.5Z" fill="#c8c8c8"/></svg>
<div class="a " style="left:398px;top:917px;width:36px;height:20px;background:linear-gradient(#555,#3a3a3a);border:1px solid #1a1a1a;border-radius:4px 0px 0px 4px;"></div>
<svg class="a" style="left:402px;top:920px;" width="15" height="15" viewBox="0 0 15 15"><circle cx="5" cy="5" r="3.5" fill="#fff" stroke="#2050c0" stroke-width="1.5"/><circle cx="10" cy="10" r="3.5" fill="#fff" stroke="#2050c0" stroke-width="1.5"/></svg>
<svg class="a" style="left:424px;top:920px;" width="8" height="14" viewBox="0 0 8 14"><path d="M4 0.5 L7.5 5.5 L0.5 5.5Z M4 13.5 L7.5 8.5 L0.5 8.5Z" fill="#c8c8c8"/></svg>
<div class="a " style="left:433px;top:917px;width:20px;height:20px;background:linear-gradient(#a6a6a6,#8e8e8e);border:1px solid #2a2a2a;border-radius:0px 4px 4px 0px;"></div>
<svg class="a" style="left:435px;top:920px;" width="16" height="15" viewBox="0 0 16 15"><path d="M2 9 H14 M2 9 L5 6 M2 9 L5 12 M14 9 L11 6 M14 9 L11 12" stroke="#fff" stroke-width="1.3" fill="none"/><circle cx="3" cy="3" r="1.3" fill="#cde"/><circle cx="8" cy="3" r="1.3" fill="#cde"/><circle cx="13" cy="3" r="1.3" fill="#cde"/></svg>
<div class="a " style="left:458px;top:917px;width:20px;height:20px;background:linear-gradient(#555,#3a3a3a);border:1px solid #1a1a1a;border-radius:4px 0px 0px 4px;"></div>
<svg class="a" style="left:460px;top:919px;" width="16" height="16" viewBox="0 0 16 16"><path d="M8 1.5 V9 M8 9 L2.5 13.5 M8 9 L13.5 13.5" stroke="#f0f0f0" stroke-width="3"/><path d="M8 1.5 V9" stroke="#3a5ae0" stroke-width="1.4"/><path d="M8 9 L2.5 13.5" stroke="#e03a3a" stroke-width="1.4"/><path d="M8 9 L13.5 13.5" stroke="#40d040" stroke-width="1.4"/></svg>
<div class="a " style="left:477px;top:917px;width:20px;height:20px;background:linear-gradient(#6a95d6,#4a73b5);border:1px solid #1a1a1a;border-radius:0;"></div>
<svg class="a" style="left:479px;top:919px;" width="16" height="16" viewBox="0 0 16 16"><path d="M2.5 13.5 L10 6" stroke="#1a2a60" stroke-width="3.4" stroke-linecap="round"/><path d="M2.5 13.5 L10 6" stroke="#b8d0ff" stroke-width="1.6" stroke-linecap="round"/><path d="M14 2 L12.5 9 L7 3.5Z" fill="#b8d0ff" stroke="#1a2a60" stroke-width="1"/></svg>
<div class="a " style="left:496px;top:917px;width:21px;height:20px;background:linear-gradient(#555,#3a3a3a);border:1px solid #1a1a1a;border-radius:0;"></div>
<svg class="a" style="left:499px;top:920px;" width="14" height="14" viewBox="0 0 14 14"><path d="M2 13 Q3 3 13 2" stroke="#5a80c0" stroke-width="1.8" fill="none"/></svg>
<div class="a " style="left:516px;top:917px;width:21px;height:20px;background:linear-gradient(#555,#3a3a3a);border:1px solid #1a1a1a;border-radius:0;"></div>
<svg class="a" style="left:519px;top:920px;" width="14" height="14" viewBox="0 0 14 14"><path d="M2 12 L8 6" stroke="#5a80c0" stroke-width="2"/><rect x="7" y="2" width="5" height="5" fill="#5a80c0"/></svg>
<div class="a " style="left:536px;top:917px;width:74px;height:20px;background:linear-gradient(#555,#383838);border:1px solid #1a1a1a;border-radius:0px 4px 4px 0px;"><div class="bl" style="left:8px;right:0;top:1px;text-align:left;line-height:18px;font-size:11.3px;color:#fff">Global</div></div>
<svg class="a" style="left:599px;top:920px;" width="8" height="14" viewBox="0 0 8 14"><path d="M4 0.5 L7.5 5.5 L0.5 5.5Z M4 13.5 L7.5 8.5 L0.5 8.5Z" fill="#c8c8c8"/></svg>
<div class="a " style="left:615px;top:917px;width:49px;height:20px;background:#777;border:1px solid #333;border-radius:4px;overflow:hidden"><div class="a" style="left:9.6px;top:0;width:1px;height:20px;background:#333"></div><div class="a" style="left:19.2px;top:0;width:1px;height:20px;background:#333"></div><div class="a" style="left:28.8px;top:0;width:1px;height:20px;background:#333"></div><div class="a" style="left:38.4px;top:0;width:1px;height:20px;background:#333"></div><div class="a" style="left:0;top:9px;width:49px;height:1px;background:#333"></div></div>
<div class="a " style="left:671px;top:917px;width:49px;height:20px;background:#777;border:1px solid #333;border-radius:4px;overflow:hidden"><div class="a" style="left:9.6px;top:0;width:1px;height:20px;background:#333"></div><div class="a" style="left:19.2px;top:0;width:1px;height:20px;background:#333"></div><div class="a" style="left:28.8px;top:0;width:1px;height:20px;background:#333"></div><div class="a" style="left:38.4px;top:0;width:1px;height:20px;background:#333"></div><div class="a" style="left:0;top:9px;width:49px;height:1px;background:#333"></div></div>
<div class="a " style="left:618px;top:919px;width:5px;height:5px;background:#f09020;border:1px solid #222"></div>
<div class="a " style="left:628px;top:920px;width:4px;height:4px;background:#999;border:1px solid #444;border-radius:2px"></div>
<div class="a " style="left:726px;top:917px;width:19px;height:20px;background:linear-gradient(#a6a6a6,#8e8e8e);border:1px solid #2a2a2a;border-radius:4px;"></div>
<svg class="a" style="left:728px;top:919px;" width="15" height="16" viewBox="0 0 15 16"><rect x="2" y="3" width="9" height="10" fill="#ddd" stroke="#222"/><path d="M9 7 h3 a2 2 0 0 1 0 4 h-3" stroke="#222" fill="none"/></svg>
<div class="a " style="left:751px;top:917px;width:19px;height:20px;background:linear-gradient(#a6a6a6,#8e8e8e);border:1px solid #2a2a2a;border-radius:4px;"></div>
<svg class="a" style="left:752px;top:919px;" width="17" height="17" viewBox="0 0 17 17"><circle cx="8.5" cy="8.5" r="5.5" fill="none" stroke="#888" stroke-width="1.2"/><circle cx="8.5" cy="8.5" r="3" fill="none" stroke="#888"/></svg>
<div class="a " style="left:775px;top:917px;width:20px;height:20px;background:linear-gradient(#a6a6a6,#8e8e8e);border:1px solid #2a2a2a;border-radius:4px 0px 0px 4px;"></div>
<svg class="a" style="left:777px;top:920px;" width="15" height="15" viewBox="0 0 15 15"><path d="M3 12 L10 3 M6 13 L13 6" stroke="#666" stroke-width="2.5"/></svg>
<div class="a " style="left:794px;top:917px;width:35px;height:20px;background:linear-gradient(#555,#3a3a3a);border:1px solid #1a1a1a;border-radius:0px 4px 4px 0px;"></div>
<svg class="a" style="left:797px;top:919px;" width="16" height="16" viewBox="0 0 16 16"><path d="M5 1 V15 M11 1 V15 M1 6 H15 M1 11 H15" stroke="#fff" stroke-width="1.2"/><circle cx="5" cy="5" r="3" fill="#5a9ae0" stroke="#fff"/></svg>
<svg class="a" style="left:820px;top:920px;" width="8" height="14" viewBox="0 0 8 14"><path d="M4 0.5 L7.5 5.5 L0.5 5.5Z M4 13.5 L7.5 8.5 L0.5 8.5Z" fill="#c8c8c8"/></svg>
<div class="a " style="left:835px;top:917px;width:21px;height:20px;background:linear-gradient(#a6a6a6,#8e8e8e);border:1px solid #2a2a2a;border-radius:4px 0px 0px 4px;"></div>
<svg class="a" style="left:837px;top:920px;" width="16" height="15" viewBox="0 0 16 15"><rect x="1" y="4" width="13" height="10" fill="#bbb" stroke="#222"/><circle cx="7.5" cy="9" r="3" fill="#5a2a3a" stroke="#222"/><path d="M13 1 L14 3 L16 3.5 L14 4 L13 6 L12 4 L10 3.5 L12 3Z" fill="#ff0"/></svg>
<div class="a " style="left:855px;top:917px;width:20px;height:20px;background:linear-gradient(#a6a6a6,#8e8e8e);border:1px solid #2a2a2a;border-radius:0px 4px 4px 0px;"></div>
<svg class="a" style="left:857px;top:920px;" width="16" height="15" viewBox="0 0 16 15"><rect x="1" y="6" width="14" height="8" fill="#555" stroke="#222"/><path d="M1 2 L14 0.5 L14.5 4 L1.5 5.5Z" fill="#eee" stroke="#222" stroke-width="0.7"/><path d="M4 1.5 L5 5 M8 1 L9 4.5" stroke="#222"/></svg>
<div class="a " style="left:1001px;top:57px;width:346px;height:857px;background:#393939"></div>
<div class="a " style="left:1001px;top:78px;width:14px;height:14px;background:#2e2e2e;border-radius:3px"></div>
<svg class="a" style="left:1003px;top:80px;" width="10" height="10" viewBox="0 0 10 10"><path d="M5 1.5 V8.5 M1.5 5 H8.5" stroke="#8a8a8a" stroke-width="1.6"/></svg>
<div class="a " style="left:1070px;top:334px;width:277px;height:369px;background:#fff"></div>
<svg class="a" style="left:1072px;top:336px" width="275" height="131"><defs>
<linearGradient id="rtc" x1="0" y1="0" x2="5.9" y2="0" gradientUnits="userSpaceOnUse"><stop offset="0" stop-color="#d4603e"/><stop offset="0.35" stop-color="#f07e5a"/><stop offset="0.75" stop-color="#dc6642"/><stop offset="1" stop-color="#a8452a"/></linearGradient>
<pattern id="rt" patternUnits="userSpaceOnUse" width="5.9" height="7.4">
<rect width="5.9" height="7.4" fill="url(#rtc)"/>
<path d="M0 6.6 Q3 5.6 5.9 6.8" stroke="#5a2414" stroke-width="1.0" fill="none"/>
<path d="M5.6 0 V7.4" stroke="#6a2a18" stroke-width="0.7"/>
</pattern>
<linearGradient id="rtg" x1="0" y1="0" x2="1" y2="1"><stop offset="0" stop-color="rgba(0,0,0,0.05)"/><stop offset="0.5" stop-color="rgba(255,120,80,0.1)"/><stop offset="1" stop-color="rgba(0,0,0,0.08)"/></linearGradient>
</defs><rect width="275" height="131" fill="url(#rt)"/><rect width="275" height="131" fill="url(#rtg)"/></svg>
<svg class="a" style="left:1101px;top:474px" width="246" height="223"><defs>
<pattern id="bt" patternUnits="userSpaceOnUse" width="31.2" height="24.2" x="0" y="3">
<rect width="31.2" height="24.2" fill="#d98a5e"/>
<path d="M0 8.5 Q7.8 14.5 15.6 8.5 Q23.4 14.5 31.2 8.5" stroke="#7a3820" stroke-width="1" fill="none"/>
<path d="M-7.8 20.6 Q0 26.6 7.8 20.6 Q15.6 26.6 23.4 20.6 Q31.2 26.6 39 20.6" stroke="#7a3820" stroke-width="1" fill="none"/>
<path d="M0 0 V9 M15.6 0 V9 M7.8 12 V21 M23.4 12 V21" stroke="#8a4a2c" stroke-width="0.7"/>
</pattern></defs><rect width="246" height="223" fill="url(#bt)"/><rect width="246" height="4" fill="#e0966a"/></svg>
<div class="a " style="left:1347px;top:57px;width:221px;height:857px;background:#727272"></div>
<div class="a " style="left:1347px;top:57px;width:1px;height:857px;background:#7e7e7e"></div>
<div class="a" style="left:1359px;top:65px;width:0;height:0;border-left:4px solid transparent;border-right:4px solid transparent;border-top:7px solid #1a1a1a"></div>
<div class="a " style="left:1372px;top:62px;width:14px;height:14px;background:linear-gradient(#5a5a5a,#3c3c3c);border:1px solid #222;border-radius:3px"><svg width="14" height="14" viewBox="0 0 14 14" style="position:absolute;left:0;top:-2px"><path d="M3 7.2 L6 10.2 L12.5 1.8" stroke="#e8e8e8" stroke-width="1.7" fill="none" stroke-linecap="round" stroke-linejoin="round"/></svg></div>
<div class="t " style="left:1392px;top:62.59px;font-size:12.3px;color:#000;">Grease Pencil</div>
<svg class="a" style="left:1546px;top:58px" width="16" height="16"><line x1="0" y1="0" x2="16" y2="16" stroke="rgba(40,40,40,0.55)" stroke-width="1"/><line x1="1" y1="0" x2="16" y2="15" stroke="rgba(200,200,200,0.35)" stroke-width="1"/><line x1="4" y1="0" x2="16" y2="12" stroke="rgba(40,40,40,0.55)" stroke-width="1"/><line x1="5" y1="0" x2="16" y2="11" stroke="rgba(200,200,200,0.35)" stroke-width="1"/><line x1="8" y1="0" x2="16" y2="8" stroke="rgba(40,40,40,0.55)" stroke-width="1"/><line x1="9" y1="0" x2="16" y2="7" stroke="rgba(200,200,200,0.35)" stroke-width="1"/></svg>
<div class="a " style="left:1355px;top:95px;width:32px;height:19px;background:linear-gradient(#555,#3a3a3a);border:1px solid #1a1a1a;border-radius:4px 0px 0px 4px;"></div>
<svg class="a" style="left:1358px;top:97px;" width="15" height="15" viewBox="0 0 15 15"><path d="M2 13 L3 10 L11 2 L13 4 L5 12Z" fill="#8ac040" stroke="#2a3a10" stroke-width="0.8"/><path d="M11 2 L13 4" stroke="#e03050" stroke-width="2.4"/><path d="M2 13 L3 10 L5 12Z" fill="#f0e0c0"/></svg>
<svg class="a" style="left:1377px;top:97px;" width="8" height="14" viewBox="0 0 8 14"><path d="M4 0.5 L7.5 5.5 L0.5 5.5Z M4 13.5 L7.5 8.5 L0.5 8.5Z" fill="#c8c8c8"/></svg>
<div class="a " style="left:1386px;top:95px;width:174px;height:19px;background:linear-gradient(#b0b0b0,#8c8c8c);border:1px solid #2a2a2a;border-radius:0px 4px 4px 0px;"><div class="bl" style="left:0px;right:0;top:1px;text-align:center;line-height:17px;font-size:11.3px;color:#000">New</div></div>
<svg class="a" style="left:1393px;top:99px;" width="12" height="12" viewBox="0 0 12 12"><path d="M6 1 V11 M1 6 H11" stroke="#222" stroke-width="3.2"/><path d="M6 1.5 V10.5 M1.5 6 H10.5" stroke="#fff" stroke-width="1.6"/></svg>
<div class="a " style="left:1355px;top:117px;width:205px;height:19px;background:linear-gradient(#b0b0b0,#8c8c8c);border:1px solid #2a2a2a;border-radius:4px;"><div class="bl" style="left:0px;right:0;top:1px;text-align:center;line-height:17px;font-size:11.3px;color:#000">New Layer</div></div>
<div class="a " style="left:1355px;top:139px;width:102px;height:19px;background:linear-gradient(#8a8a8a,#7c7c7c);border:1px solid #545454;border-radius:4px 0px 0px 4px;"><div class="bl" style="left:0px;right:0;top:1px;text-align:center;line-height:17px;font-size:11.3px;color:#5e5e5e">Delete Frame</div></div>
<div class="a " style="left:1456px;top:139px;width:104px;height:19px;background:linear-gradient(#8a8a8a,#7c7c7c);border:1px solid #545454;border-radius:0px 4px 4px 0px;"><div class="bl" style="left:0px;right:0;top:1px;text-align:center;line-height:17px;font-size:11.3px;color:#5e5e5e">Convert</div></div>
<div class="a " style="left:1350px;top:165px;width:216px;height:1px;background:#4e4e4e"></div>
<div class="a " style="left:1350px;top:166px;width:216px;height:1px;background:#8a8a8a"></div>
<div class="a" style="left:1359px;top:174px;width:0;height:0;border-left:4px solid transparent;border-right:4px solid transparent;border-top:7px solid #1a1a1a"></div>
<div class="t " style="left:1372px;top:171.59px;font-size:12.3px;color:#000;">Image</div>
<svg class="a" style="left:1546px;top:168px" width="16" height="16"><line x1="0" y1="0" x2="16" y2="16" stroke="rgba(40,40,40,0.55)" stroke-width="1"/><line x1="1" y1="0" x2="16" y2="15" stroke="rgba(200,200,200,0.35)" stroke-width="1"/><line x1="4" y1="0" x2="16" y2="12" stroke="rgba(40,40,40,0.55)" stroke-width="1"/><line x1="5" y1="0" x2="16" y2="11" stroke="rgba(200,200,200,0.35)" stroke-width="1"/><line x1="8" y1="0" x2="16" y2="8" stroke="rgba(40,40,40,0.55)" stroke-width="1"/><line x1="9" y1="0" x2="16" y2="7" stroke="rgba(200,200,200,0.35)" stroke-width="1"/></svg>
<div class="a " style="left:1355px;top:199px;width:32px;height:19px;background:linear-gradient(#555,#3a3a3a);border:1px solid #1a1a1a;border-radius:4px 0px 0px 4px;"></div>
<svg class="a" style="left:1358px;top:201px;" width="15" height="15" viewBox="0 0 15 15"><rect x="2" y="1" width="11" height="13" fill="#f4f4f4" stroke="#222" stroke-width="0.9"/><rect x="3.5" y="3" width="8" height="5" fill="#e890a0"/><path d="M3.5 9 H11.5 M3.5 11 H11.5" stroke="#2a3a8a" stroke-width="1.2"/></svg>
<svg class="a" style="left:1377px;top:202px;" width="8" height="14" viewBox="0 0 8 14"><path d="M4 0.5 L7.5 5.5 L0.5 5.5Z M4 13.5 L7.5 8.5 L0.5 8.5Z" fill="#c8c8c8"/></svg>
<div class="a " style="left:1386px;top:199px;width:94px;height:19px;background:linear-gradient(#9c9c9c,#b8b8b8);border:1px solid #2a2a2a;border-radius:0;"><div class="bl" style="left:6px;right:0;top:1px;text-align:left;line-height:17px;font-size:11.3px;color:#000">Dach_022.bmp</div></div>
<div class="a " style="left:1479px;top:199px;width:21px;height:19px;background:linear-gradient(#a6a6a6,#8e8e8e);border:1px solid #2a2a2a;border-radius:0;"><div class="bl" style="left:0px;right:0;top:1px;text-align:center;line-height:17px;font-size:11.3px;color:#000">F</div></div>
<div class="a " style="left:1499px;top:199px;width:21px;height:19px;background:linear-gradient(#a6a6a6,#8e8e8e);border:1px solid #2a2a2a;border-radius:0;"></div>
<svg class="a" style="left:1503px;top:202px;" width="12" height="12" viewBox="0 0 12 12"><path d="M6 1 V11 M1 6 H11" stroke="#222" stroke-width="3.2"/><path d="M6 1.5 V10.5 M1.5 6 H10.5" stroke="#fff" stroke-width="1.6"/></svg>
<div class="a " style="left:1519px;top:199px;width:21px;height:19px;background:linear-gradient(#a6a6a6,#8e8e8e);border:1px solid #2a2a2a;border-radius:0;"></div>
<svg class="a" style="left:1522px;top:202px;" width="14" height="14" viewBox="0 0 14 14"><path d="M1 4 H5 L6 2 H12 V12 H1Z" fill="#e8dca0" stroke="#333" stroke-width="0.8"/><rect x="3" y="1" width="8" height="5" fill="#fff" stroke="#555" stroke-width="0.6"/><path d="M1 6 H13 V12 H1Z" fill="#d8c880" stroke="#333" stroke-width="0.8"/></svg>
<div class="a " style="left:1539px;top:199px;width:21px;height:19px;background:linear-gradient(#a6a6a6,#8e8e8e);border:1px solid #2a2a2a;border-radius:0px 4px 4px 0px;"></div>
<svg class="a" style="left:1543px;top:202px;" width="12" height="12" viewBox="0 0 12 12"><path d="M2 2 L10 10 M10 2 L2 10" stroke="#222" stroke-width="3.2"/><path d="M2.3 2.3 L9.7 9.7 M9.7 2.3 L2.3 9.7" stroke="#fff" stroke-width="1.6"/></svg>
<div class="t " style="left:1362px;top:228.43px;font-size:11.3px;color:#000;">Source:</div>
<div class="a " style="left:1428px;top:224px;width:132px;height:19px;background:linear-gradient(#555,#383838);border:1px solid #1a1a1a;border-radius:4px;"><div class="bl" style="left:7px;right:0;top:1px;text-align:left;line-height:17px;font-size:11.3px;color:#fff">Single Image</div></div>
<svg class="a" style="left:1549px;top:226px;" width="8" height="14" viewBox="0 0 8 14"><path d="M4 0.5 L7.5 5.5 L0.5 5.5Z M4 13.5 L7.5 8.5 L0.5 8.5Z" fill="#c8c8c8"/></svg>
<div class="a " style="left:1355px;top:249px;width:20px;height:19px;background:linear-gradient(#a6a6a6,#8e8e8e);border:1px solid #2a2a2a;border-radius:4px 0px 0px 4px;"></div>
<svg class="a" style="left:1358px;top:252px;" width="14" height="13" viewBox="0 0 14 13"><path d="M1 7 L7 3 L13 6 V10 L7 13 L1 10Z" fill="#d8d0a0" stroke="#333" stroke-width="0.8"/><path d="M1 7 L7 10 L13 6" stroke="#333" fill="none" stroke-width="0.8"/></svg>
<div class="a " style="left:1374px;top:249px;width:146px;height:19px;background:linear-gradient(#9c9c9c,#b8b8b8);border:1px solid #2a2a2a;border-radius:0;"><div class="bl" style="left:5px;right:0;top:1px;text-align:left;line-height:17px;font-size:11.3px;color:#000">//..\..\#tekst...h_022.bmp</div></div>
<div class="a " style="left:1519px;top:249px;width:21px;height:19px;background:linear-gradient(#a6a6a6,#8e8e8e);border:1px solid #2a2a2a;border-radius:0;"></div>
<svg class="a" style="left:1522px;top:252px;" width="14" height="14" viewBox="0 0 14 14"><path d="M1 4 H5 L6 2 H12 V12 H1Z" fill="#e8dca0" stroke="#333" stroke-width="0.8"/><rect x="3" y="1" width="8" height="5" fill="#fff" stroke="#555" stroke-width="0.6"/><path d="M1 6 H13 V12 H1Z" fill="#d8c880" stroke="#333" stroke-width="0.8"/></svg>
<div class="a " style="left:1539px;top:249px;width:21px;height:19px;background:linear-gradient(#a6a6a6,#8e8e8e);border:1px solid #2a2a2a;border-radius:0px 4px 4px 0px;"></div>
<svg class="a" style="left:1542px;top:252px;" width="14" height="14" viewBox="0 0 14 14"><path d="M2 6 Q3 2 8 2 L10 2 M9 0 L11.5 2 L9 4.5 M12 8 Q11 12 6 12 L4 12 M5 10 L2.5 12 L5 14" stroke="#222" stroke-width="2.6" fill="none"/><path d="M2 6 Q3 2 8 2 L10 2 M9 0 L11.5 2 L9 4.5 M12 8 Q11 12 6 12 L4 12 M5 10 L2.5 12 L5 14" stroke="#fff" stroke-width="1.2" fill="none"/></svg>
<div class="t " style="left:1362px;top:279.43px;font-size:11.3px;color:#000;">Image: size 1024 x 1024, RGB byte</div>
<div class="t " style="left:1362px;top:304.43px;font-size:11.3px;color:#000;">Input Color Space:</div>
<div class="a " style="left:1355px;top:321px;width:205px;height:19px;background:linear-gradient(#555,#383838);border:1px solid #1a1a1a;border-radius:4px;"><div class="bl" style="left:6px;right:0;top:1px;text-align:left;line-height:17px;font-size:11.3px;color:#fff">sRGB</div></div>
<svg class="a" style="left:1549px;top:323px;" width="8" height="14" viewBox="0 0 8 14"><path d="M4 0.5 L7.5 5.5 L0.5 5.5Z M4 13.5 L7.5 8.5 L0.5 8.5Z" fill="#c8c8c8"/></svg>
<div class="a " style="left:1358px;top:346px;width:14px;height:14px;background:linear-gradient(#5a5a5a,#3c3c3c);border:1px solid #222;border-radius:3px;"></div>
<div class="t " style="left:1380px;top:349.43px;font-size:11.3px;color:#000;">View as Render</div>
<div class="a " style="left:1358px;top:371px;width:14px;height:14px;background:linear-gradient(#5a5a5a,#3c3c3c);border:1px solid #222;border-radius:3px;"><svg width="14" height="14" viewBox="0 0 14 14" style="position:absolute;left:0;top:-2px"><path d="M3 7.2 L6 10.2 L12.5 1.8" stroke="#e8e8e8" stroke-width="1.7" fill="none" stroke-linecap="round" stroke-linejoin="round"/></svg></div>
<div class="t " style="left:1380px;top:374.43px;font-size:11.3px;color:#fff;">Use Alpha</div>
<div class="t " style="left:1362px;top:395.43px;font-size:11.3px;color:#000;">Alpha:</div>
<div class="a " style="left:1428px;top:390px;width:132px;height:19px;background:linear-gradient(#555,#383838);border:1px solid #1a1a1a;border-radius:4px;"><div class="bl" style="left:7px;right:0;top:1px;text-align:left;line-height:17px;font-size:11.3px;color:#fff">Straight</div></div>
<svg class="a" style="left:1549px;top:392px;" width="8" height="14" viewBox="0 0 8 14"><path d="M4 0.5 L7.5 5.5 L0.5 5.5Z M4 13.5 L7.5 8.5 L0.5 8.5Z" fill="#c8c8c8"/></svg>
<div class="a " style="left:1358px;top:428px;width:14px;height:14px;background:linear-gradient(#5a5a5a,#3c3c3c);border:1px solid #222;border-radius:3px;"></div>
<div class="t " style="left:1380px;top:431.43px;font-size:11.3px;color:#000;">Fields</div>
<div class="a " style="left:1355px;top:448px;width:102px;height:19px;background:linear-gradient(#7a93bb,#6480ad);border:1px solid #4a4a4a;border-radius:4px 0px 0px 4px;"><div class="bl" style="left:0px;right:0;top:1px;text-align:center;line-height:17px;font-size:11.3px;color:#3a4e70">Upper First</div></div>
<div class="a " style="left:1456px;top:448px;width:104px;height:19px;background:linear-gradient(#666,#575757);border:1px solid #4a4a4a;border-radius:0px 4px 4px 0px;"><div class="bl" style="left:0px;right:0;top:1px;text-align:center;line-height:17px;font-size:11.3px;color:#a8a8a8">Lower First</div></div>
<div class="a " style="left:1350px;top:475px;width:216px;height:1px;background:#4e4e4e"></div>
<div class="a " style="left:1350px;top:476px;width:216px;height:1px;background:#8a8a8a"></div>
<div class="a" style="left:1359px;top:483px;width:0;height:0;border-left:4px solid transparent;border-right:4px solid transparent;border-top:7px solid #1a1a1a"></div>
<div class="t " style="left:1372px;top:480.59px;font-size:12.3px;color:#000;">Game Properties</div>
<svg class="a" style="left:1546px;top:478px" width="16" height="16"><line x1="0" y1="0" x2="16" y2="16" stroke="rgba(40,40,40,0.55)" stroke-width="1"/><line x1="1" y1="0" x2="16" y2="15" stroke="rgba(200,200,200,0.35)" stroke-width="1"/><line x1="4" y1="0" x2="16" y2="12" stroke="rgba(40,40,40,0.55)" stroke-width="1"/><line x1="5" y1="0" x2="16" y2="11" stroke="rgba(200,200,200,0.35)" stroke-width="1"/><line x1="8" y1="0" x2="16" y2="8" stroke="rgba(40,40,40,0.55)" stroke-width="1"/><line x1="9" y1="0" x2="16" y2="7" stroke="rgba(200,200,200,0.35)" stroke-width="1"/></svg>
<div class="a " style="left:1358px;top:510px;width:14px;height:14px;background:linear-gradient(#5a5a5a,#3c3c3c);border:1px solid #222;border-radius:3px;"></div>
<div class="t " style="left:1380px;top:513.43px;font-size:11.3px;color:#000;">Animated</div>
<div class="t " style="left:1469px;top:513.43px;font-size:11.3px;color:#000;">Clamp:</div>
<div class="a " style="left:1355px;top:530px;width:98px;height:20px;background:linear-gradient(#8c8c8c,#969696);border:1px solid #5a5a5a;border-radius:8px 8px 0px 0px;"><div class="bl" style="left:14px;top:1px;line-height:18px;color:#5e5e5e">Start:</div><div class="bl" style="right:15px;top:1px;line-height:18px;color:#5e5e5e">0</div><div class="arl" style="top:6.0px;border-right-color:#8a8a8a"></div><div class="arr" style="top:6.0px;border-left-color:#8a8a8a"></div></div>
<div class="a " style="left:1355px;top:549px;width:98px;height:20px;background:linear-gradient(#8c8c8c,#969696);border:1px solid #5a5a5a;border-radius:0;"><div class="bl" style="left:14px;top:1px;line-height:18px;color:#5e5e5e">End:</div><div class="bl" style="right:15px;top:1px;line-height:18px;color:#5e5e5e">0</div><div class="arl" style="top:6.0px;border-right-color:#8a8a8a"></div><div class="arr" style="top:6.0px;border-left-color:#8a8a8a"></div></div>
<div class="a " style="left:1355px;top:568px;width:98px;height:21px;background:linear-gradient(#8c8c8c,#969696);border:1px solid #5a5a5a;border-radius:0px 0px 8px 8px;"><div class="bl" style="left:14px;top:1px;line-height:19px;color:#5e5e5e">Speed:</div><div class="bl" style="right:15px;top:1px;line-height:19px;color:#5e5e5e">1</div><div class="arl" style="top:6.5px;border-right-color:#8a8a8a"></div><div class="arr" style="top:6.5px;border-left-color:#8a8a8a"></div></div>
<div class="a " style="left:1465px;top:532px;width:14px;height:14px;background:linear-gradient(#5a5a5a,#3c3c3c);border:1px solid #222;border-radius:3px;"></div>
<div class="t " style="left:1487px;top:535.43px;font-size:11.3px;color:#000;">X</div>
<div class="a " style="left:1465px;top:554px;width:14px;height:14px;background:linear-gradient(#5a5a5a,#3c3c3c);border:1px solid #222;border-radius:3px;"></div>
<div class="t " style="left:1487px;top:557.43px;font-size:11.3px;color:#000;">Y</div>
<div class="a " style="left:1461px;top:582px;width:99px;height:19px;background:linear-gradient(#6a95d6,#4a73b5);border:1px solid #1a1a1a;border-radius:4px 4px 0px 0px;"><div class="bl" style="left:7px;right:0;top:1px;text-align:left;line-height:17px;font-size:11.3px;color:#000">UV Coordinates</div></div>
<div class="a " style="left:1461px;top:600px;width:99px;height:21px;background:linear-gradient(#555,#3a3a3a);border:1px solid #1a1a1a;border-radius:0px 0px 4px 4px;"><div class="bl" style="left:7px;right:0;top:1px;text-align:left;line-height:19px;font-size:11.3px;color:#fff">Reflection</div></div>
<div class="a " style="left:1358px;top:594px;width:14px;height:14px;background:linear-gradient(#5a5a5a,#3c3c3c);border:1px solid #222;border-radius:3px;"></div>
<div class="t " style="left:1380px;top:597.43px;font-size:11.3px;color:#000;">Tiles</div>
<div class="a " style="left:1355px;top:614px;width:98px;height:20px;background:linear-gradient(#8c8c8c,#969696);border:1px solid #5a5a5a;border-radius:8px 8px 0px 0px;"><div class="bl" style="left:14px;top:1px;line-height:18px;color:#5e5e5e">X:</div><div class="bl" style="right:15px;top:1px;line-height:18px;color:#5e5e5e">1</div><div class="arl" style="top:6.0px;border-right-color:#8a8a8a"></div><div class="arr" style="top:6.0px;border-left-color:#8a8a8a"></div></div>
<div class="a " style="left:1355px;top:633px;width:98px;height:20px;background:linear-gradient(#8c8c8c,#969696);border:1px solid #5a5a5a;border-radius:0px 0px 8px 8px;"><div class="bl" style="left:14px;top:1px;line-height:18px;color:#5e5e5e">Y:</div><div class="bl" style="right:15px;top:1px;line-height:18px;color:#5e5e5e">1</div><div class="arl" style="top:6.0px;border-right-color:#8a8a8a"></div><div class="arr" style="top:6.0px;border-left-color:#8a8a8a"></div></div>
<div class="a " style="left:1350px;top:660px;width:216px;height:1px;background:#4e4e4e"></div>
<div class="a " style="left:1350px;top:661px;width:216px;height:1px;background:#8a8a8a"></div>
<div class="a" style="left:1359px;top:669px;width:0;height:0;border-left:4px solid transparent;border-right:4px solid transparent;border-top:7px solid #1a1a1a"></div>
<div class="t " style="left:1372px;top:666.59px;font-size:12.3px;color:#000;">Display</div>
<svg class="a" style="left:1546px;top:663px" width="16" height="16"><line x1="0" y1="0" x2="16" y2="16" stroke="rgba(40,40,40,0.55)" stroke-width="1"/><line x1="1" y1="0" x2="16" y2="15" stroke="rgba(200,200,200,0.35)" stroke-width="1"/><line x1="4" y1="0" x2="16" y2="12" stroke="rgba(40,40,40,0.55)" stroke-width="1"/><line x1="5" y1="0" x2="16" y2="11" stroke="rgba(200,200,200,0.35)" stroke-width="1"/><line x1="8" y1="0" x2="16" y2="8" stroke="rgba(40,40,40,0.55)" stroke-width="1"/><line x1="9" y1="0" x2="16" y2="7" stroke="rgba(200,200,200,0.35)" stroke-width="1"/></svg>
<div class="t " style="left:1362px;top:699.43px;font-size:11.3px;color:#000;">Aspect Ratio:</div>
<div class="t " style="left:1469px;top:699.43px;font-size:11.3px;color:#000;">Coordinates:</div>
<div class="a " style="left:1355px;top:714px;width:98px;height:20px;background:linear-gradient(#a6a6a6,#bababa);border:1px solid #2a2a2a;border-radius:8px 8px 0px 0px;"><div class="bl" style="left:14px;top:1px;line-height:18px;color:#000">X:</div><div class="bl" style="right:15px;top:1px;line-height:18px;color:#000">1.00</div><div class="arl" style="top:6.0px;border-right-color:#808080"></div><div class="arr" style="top:6.0px;border-left-color:#808080"></div></div>
<div class="a " style="left:1355px;top:733px;width:98px;height:20px;background:linear-gradient(#a6a6a6,#bababa);border:1px solid #2a2a2a;border-radius:0px 0px 8px 8px;"><div class="bl" style="left:14px;top:1px;line-height:18px;color:#000">Y:</div><div class="bl" style="right:15px;top:1px;line-height:18px;color:#000">1.00</div><div class="arl" style="top:6.0px;border-right-color:#808080"></div><div class="arr" style="top:6.0px;border-left-color:#808080"></div></div>
<div class="a " style="left:1465px;top:718px;width:14px;height:14px;background:linear-gradient(#5a5a5a,#3c3c3c);border:1px solid #222;border-radius:3px;"></div>
<div class="t " style="left:1487px;top:721.43px;font-size:11.3px;color:#000;">Repeat</div>
<div class="a " style="left:1001px;top:914px;width:567px;height:26px;background:#727272"></div>
<div class="a " style="left:1001px;top:914px;width:567px;height:1px;background:#8a8a8a"></div>
<svg class="a" style="left:1001px;top:924px" width="16" height="16"><line x1="0" y1="0" x2="16" y2="16" stroke="rgba(30,30,30,0.7)" stroke-width="1"/><line x1="0" y1="1" x2="15" y2="16" stroke="rgba(210,210,210,0.45)" stroke-width="1"/><line x1="0" y1="4" x2="12" y2="16" stroke="rgba(30,30,30,0.7)" stroke-width="1"/><line x1="0" y1="5" x2="11" y2="16" stroke="rgba(210,210,210,0.45)" stroke-width="1"/><line x1="0" y1="8" x2="8" y2="16" stroke="rgba(30,30,30,0.7)" stroke-width="1"/><line x1="0" y1="9" x2="7" y2="16" stroke="rgba(210,210,210,0.45)" stroke-width="1"/></svg>
<div class="a " style="left:1010px;top:918px;width:29px;height:19px;background:linear-gradient(#555,#3a3a3a);border:1px solid #1a1a1a;border-radius:4px;"></div>
<svg class="a" style="left:1013px;top:920px;" width="16" height="15" viewBox="0 0 16 15"><rect x="1" y="2" width="13" height="11" fill="#f0f0f0" stroke="#222" stroke-width="0.9"/><rect x="2.5" y="3.5" width="10" height="4" fill="#e890a0"/><path d="M2.5 9 H12.5 M2.5 11 H12.5" stroke="#2a3a8a" stroke-width="1.2"/></svg>
<svg class="a" style="left:1030px;top:920px;" width="8" height="14" viewBox="0 0 8 14"><path d="M4 0.5 L7.5 5.5 L0.5 5.5Z M4 13.5 L7.5 8.5 L0.5 8.5Z" fill="#c8c8c8"/></svg>
<div class="t " style="left:1052px;top:923.43px;font-size:11.3px;color:#000;">View</div>
<div class="t " style="left:1096px;top:923.43px;font-size:11.3px;color:#000;">Image</div>
<div class="a " style="left:1141px;top:918px;width:32px;height:19px;background:linear-gradient(#555,#3a3a3a);border:1px solid #1a1a1a;border-radius:4px 0px 0px 4px;"></div>
<svg class="a" style="left:1145px;top:920px;" width="15" height="15" viewBox="0 0 15 15"><rect x="2" y="1" width="11" height="13" fill="#f4f4f4" stroke="#222" stroke-width="0.9"/><rect x="3.5" y="3" width="8" height="5" fill="#e890a0"/><path d="M3.5 9 H11.5 M3.5 11 H11.5" stroke="#2a3a8a" stroke-width="1.2"/></svg>
<svg class="a" style="left:1164px;top:920px;" width="8" height="14" viewBox="0 0 8 14"><path d="M4 0.5 L7.5 5.5 L0.5 5.5Z M4 13.5 L7.5 8.5 L0.5 8.5Z" fill="#c8c8c8"/></svg>
<div class="a " style="left:1172px;top:918px;width:120px;height:19px;background:linear-gradient(#9c9c9c,#b8b8b8);border:1px solid #2a2a2a;border-radius:0;"><div class="bl" style="left:7px;right:0;top:1px;text-align:left;line-height:17px;font-size:11.3px;color:#000">Dach_022.bmp</div></div>
<div class="a " style="left:1291px;top:918px;width:21px;height:19px;background:linear-gradient(#a6a6a6,#8e8e8e);border:1px solid #2a2a2a;border-radius:0;"><div class="bl" style="left:0px;right:0;top:1px;text-align:center;line-height:17px;font-size:11.3px;color:#000">F</div></div>
<div class="a " style="left:1311px;top:918px;width:21px;height:19px;background:linear-gradient(#a6a6a6,#8e8e8e);border:1px solid #2a2a2a;border-radius:0;"></div>
<svg class="a" style="left:1316px;top:922px;" width="12" height="12" viewBox="0 0 12 12"><path d="M6 1 V11 M1 6 H11" stroke="#222" stroke-width="3.2"/><path d="M6 1.5 V10.5 M1.5 6 H10.5" stroke="#fff" stroke-width="1.6"/></svg>
<div class="a " style="left:1331px;top:918px;width:21px;height:19px;background:linear-gradient(#a6a6a6,#8e8e8e);border:1px solid #2a2a2a;border-radius:0;"></div>
<svg class="a" style="left:1334px;top:921px;" width="14" height="14" viewBox="0 0 14 14"><path d="M1 4 H5 L6 2 H12 V12 H1Z" fill="#e8dca0" stroke="#333" stroke-width="0.8"/><rect x="3" y="1" width="8" height="5" fill="#fff" stroke="#555" stroke-width="0.6"/><path d="M1 6 H13 V12 H1Z" fill="#d8c880" stroke="#333" stroke-width="0.8"/></svg>
<div class="a " style="left:1351px;top:918px;width:21px;height:19px;background:linear-gradient(#a6a6a6,#8e8e8e);border:1px solid #2a2a2a;border-radius:0px 4px 4px 0px;"></div>
<svg class="a" style="left:1355px;top:922px;" width="12" height="12" viewBox="0 0 12 12"><path d="M2 2 L10 10 M10 2 L2 10" stroke="#222" stroke-width="3.2"/><path d="M2.3 2.3 L9.7 9.7 M9.7 2.3 L2.3 9.7" stroke="#fff" stroke-width="1.6"/></svg>
<div class="a " style="left:1377px;top:918px;width:20px;height:19px;background:linear-gradient(#a6a6a6,#8e8e8e);border:1px solid #2a2a2a;border-radius:4px;"></div>
<svg class="a" style="left:1379px;top:920px;" width="15" height="15" viewBox="0 0 15 15"><path d="M2 14 L7 9" stroke="#222" stroke-width="2.2"/><path d="M2 14 L7 9" stroke="#fff" stroke-width="1"/><path d="M6 6 L9 3 L13 7 L10 10Z M8 2 L14 8" stroke="#222" fill="#eee" stroke-width="0.9"/></svg>
<div class="a " style="left:1403px;top:918px;width:65px;height:19px;background:linear-gradient(#555,#3a3a3a);border:1px solid #1a1a1a;border-radius:4px;"><div class="bl" style="left:23px;right:0;top:1px;text-align:left;line-height:17px;font-size:11.3px;color:#fff">View</div></div>
<svg class="a" style="left:1407px;top:920px;" width="15" height="15" viewBox="0 0 15 15"><rect x="2" y="1" width="11" height="13" fill="#f4f4f4" stroke="#222" stroke-width="0.9"/><rect x="3.5" y="3" width="8" height="5" fill="#e890a0"/><path d="M3.5 9 H11.5 M3.5 11 H11.5" stroke="#2a3a8a" stroke-width="1.2"/></svg>
<svg class="a" style="left:1457px;top:920px;" width="8" height="14" viewBox="0 0 8 14"><path d="M4 0.5 L7.5 5.5 L0.5 5.5Z M4 13.5 L7.5 8.5 L0.5 8.5Z" fill="#c8c8c8"/></svg>
<div class="a " style="left:1478px;top:918px;width:21px;height:19px;background:linear-gradient(#6a95d6,#4a73b5);border:1px solid #1a1a1a;border-radius:4px 0px 0px 4px;"></div>
<svg class="a" style="left:1481px;top:920px;" width="15" height="15" viewBox="0 0 15 15"><path d="M1 1 H14 L1 14Z" fill="#e03030"/><path d="M3 3 H7 V7 H3Z" fill="#fff"/><path d="M1 14 L14 1" stroke="#fff" stroke-width="1.5"/></svg>
<div class="a " style="left:1498px;top:918px;width:21px;height:19px;background:linear-gradient(#555,#3a3a3a);border:1px solid #1a1a1a;border-radius:0;"></div>
<svg class="a" style="left:1501px;top:921px;" width="14" height="14" viewBox="0 0 14 14"><rect x="1" y="1" width="12" height="12" fill="#ddd"/><path d="M1 1 h3 v3 h-3z M7 1 h3 v3 h-3z M4 4 h3 v3 h-3z M10 4 h3 v3 h-3z M1 7 h3 v3 h-3z M7 7 h3 v3 h-3z M4 10 h3 v3 h-3z M10 10 h3 v3 h-3z" fill="#c04040"/></svg>
<div class="a " style="left:1518px;top:918px;width:21px;height:19px;background:linear-gradient(#555,#3a3a3a);border:1px solid #1a1a1a;border-radius:0px 4px 4px 0px;"></div>
<svg class="a" style="left:1521px;top:921px;" width="14" height="14" viewBox="0 0 14 14"><path d="M1 13 L13 1 V13Z" fill="#ddd"/><path d="M1 13 L13 1 H1Z" fill="#666"/></svg>
<div class="a " style="left:1569px;top:57px;width:343px;height:26px;background:#6e6e6e"></div>
<div class="a " style="left:1569px;top:57px;width:343px;height:1px;background:#7a7a7a"></div>
<div class="a " style="left:1569px;top:82px;width:343px;height:1px;background:#656565"></div>
<div class="a " style="left:1578px;top:60px;width:30px;height:20px;background:linear-gradient(#555,#3a3a3a);border:1px solid #1a1a1a;border-radius:4px;"></div>
<svg class="a" style="left:1581px;top:62px;" width="16" height="16" viewBox="0 0 16 16"><rect x="1" y="1" width="6" height="3" fill="#f0a040"/><path d="M3 4 V13 M3 8 H7 M3 13 H7" stroke="#ccd" stroke-width="0.8"/><rect x="7" y="7" width="6" height="2.5" fill="#fff"/><rect x="7" y="12" width="6" height="2.5" fill="#fff"/></svg>
<svg class="a" style="left:1598px;top:63px;" width="8" height="14" viewBox="0 0 8 14"><path d="M4 0.5 L7.5 5.5 L0.5 5.5Z M4 13.5 L7.5 8.5 L0.5 8.5Z" fill="#c8c8c8"/></svg>
<div class="t " style="left:1621px;top:66.43px;font-size:11.3px;color:#000;">View</div>
<div class="t " style="left:1665px;top:66.43px;font-size:11.3px;color:#000;">Search</div>
<div class="a " style="left:1713px;top:60px;width:117px;height:20px;background:linear-gradient(#555,#383838);border:1px solid #1a1a1a;border-radius:4px;"><div class="bl" style="left:6px;right:0;top:1px;text-align:left;line-height:18px;font-size:11.3px;color:#fff">All Scenes</div></div>
<svg class="a" style="left:1819px;top:63px;" width="8" height="14" viewBox="0 0 8 14"><path d="M4 0.5 L7.5 5.5 L0.5 5.5Z M4 13.5 L7.5 8.5 L0.5 8.5Z" fill="#c8c8c8"/></svg>
<div class="a " style="left:1836px;top:60px;width:76px;height:20px;background:linear-gradient(#9c9c9c,#b8b8b8);border:1px solid #2a2a2a;border-radius:8px 0px 0px 8px;"></div>
<svg class="a" style="left:1840px;top:62px;" width="16" height="16" viewBox="0 0 16 16"><circle cx="9.5" cy="6" r="4.5" fill="#e8eef8" stroke="#222" stroke-width="1.2"/><path d="M6.5 9 L1.5 14" stroke="#222" stroke-width="3"/><path d="M6.5 9 L2 13.5" stroke="#d09050" stroke-width="1.5"/></svg>
<svg class="a" style="left:1896px;top:58px" width="16" height="16"><line x1="0" y1="0" x2="16" y2="16" stroke="rgba(40,40,40,0.55)" stroke-width="1"/><line x1="1" y1="0" x2="16" y2="15" stroke="rgba(200,200,200,0.35)" stroke-width="1"/><line x1="4" y1="0" x2="16" y2="12" stroke="rgba(40,40,40,0.55)" stroke-width="1"/><line x1="5" y1="0" x2="16" y2="11" stroke="rgba(200,200,200,0.35)" stroke-width="1"/><line x1="8" y1="0" x2="16" y2="8" stroke="rgba(40,40,40,0.55)" stroke-width="1"/><line x1="9" y1="0" x2="16" y2="7" stroke="rgba(200,200,200,0.35)" stroke-width="1"/></svg>
<div class="a " style="left:1569px;top:83px;width:343px;height:143px;background:#727272"></div>
<div class="a " style="left:1569px;top:84px;width:343px;height:20px;background:#6e6e6e"></div>
<div class="a " style="left:1569px;top:104px;width:343px;height:20px;background:#757575"></div>
<div class="a " style="left:1569px;top:124px;width:343px;height:20px;background:#6e6e6e"></div>
<div class="a " style="left:1569px;top:144px;width:343px;height:20px;background:#757575"></div>
<div class="a " style="left:1569px;top:164px;width:343px;height:20px;background:#6e6e6e"></div>
<div class="a " style="left:1569px;top:184px;width:343px;height:20px;background:#757575"></div>
<div class="a " style="left:1569px;top:204px;width:343px;height:20px;background:#6e6e6e"></div>
<div class="a " style="left:1853px;top:83px;width:1px;height:143px;background:#656565"></div>
<div class="a " style="left:1873px;top:83px;width:1px;height:143px;background:#656565"></div>
<div class="a " style="left:1893px;top:83px;width:1px;height:143px;background:#656565"></div>
<div class="a " style="left:1596px;top:98px;width:1px;height:96px;background:#3a3a3a"></div>
<div class="a " style="left:1597px;top:154px;width:10px;height:1px;background:#3a3a3a"></div>
<div class="a " style="left:1597px;top:174px;width:10px;height:1px;background:#3a3a3a"></div>
<div class="a " style="left:1597px;top:194px;width:10px;height:1px;background:#3a3a3a"></div>
<div class="a " style="left:1584px;top:94px;width:8px;height:1px;background:#3a3a3a"></div>
<svg class="a" style="left:1573px;top:88px;" width="11" height="11" viewBox="0 0 11 11"><circle cx="5.5" cy="5.5" r="4.5" fill="#fff" stroke="#111" stroke-width="1.3"/><path d="M3 5.5 H8" stroke="#111" stroke-width="1.4"/></svg>
<svg class="a" style="left:1591px;top:85px;" width="18" height="18" viewBox="0 0 18 18"><circle cx="9" cy="9" r="8.5" fill="rgba(200,200,200,0.5)"/><circle cx="4" cy="3.5" r="2.2" fill="#e8f090" opacity="0.9"/><rect x="8.5" y="2" width="5.5" height="9" rx="1.8" fill="#5a7ad8" stroke="#1a2a5a" stroke-width="0.7"/><circle cx="6" cy="11.5" r="3.5" fill="#f0f0f0" stroke="#333" stroke-width="0.7"/></svg>
<div class="t " style="left:1610px;top:90.43px;font-size:11.3px;color:#000;">Scene</div>
<svg class="a" style="left:1598px;top:108px;" width="11" height="11" viewBox="0 0 11 11"><circle cx="5.5" cy="5.5" r="4.5" fill="#fff" stroke="#111" stroke-width="1.3"/><path d="M3 5.5 H8" stroke="#111" stroke-width="1.4"/><path d="M5.5 3 V8" stroke="#111" stroke-width="1.4"/></svg>
<svg class="a" style="left:1611px;top:106px;" width="16" height="16" viewBox="0 0 16 16"><rect x="3" y="3" width="11" height="12" fill="#f4f0d0" stroke="#222" stroke-width="0.8"/><rect x="1" y="1" width="11" height="12" fill="#fff" stroke="#222" stroke-width="0.8"/><rect x="4" y="3" width="4" height="6" fill="#5a7ad8"/></svg>
<div class="t " style="left:1630px;top:110.43px;font-size:11.3px;color:#000;">RenderLayers</div>
<div class="a " style="left:1708px;top:109px;width:2px;height:12px;background:#444"></div>
<svg class="a" style="left:1717px;top:105px;" width="17" height="17" viewBox="0 0 17 17"><circle cx="8.5" cy="8.5" r="8" fill="rgba(190,190,190,0.5)"/><rect x="4" y="4" width="10" height="11" fill="#f4f0d0" stroke="#222" stroke-width="0.8"/><rect x="2.5" y="2.5" width="10" height="11" fill="#fff" stroke="#222" stroke-width="0.8"/><rect x="5" y="4" width="4" height="6" fill="#5a7ad8"/></svg>
<svg class="a" style="left:1610px;top:125px;" width="18" height="18" viewBox="0 0 18 18"><circle cx="9" cy="9" r="8.5" fill="rgba(160,170,200,0.7)"/><circle cx="9" cy="9" r="6.5" fill="#3a78b8" stroke="#1a2a4a" stroke-width="0.8"/><path d="M5 6 Q8 4 9 7 Q7 10 5 9Z M10 10 Q13 9 13 12 L11 14Z" fill="#6ab060"/></svg>
<div class="t " style="left:1630px;top:130.43px;font-size:11.3px;color:#000;">World</div>
<svg class="a" style="left:1592px;top:148px;" width="11" height="11" viewBox="0 0 11 11"><circle cx="5.5" cy="5.5" r="4.5" fill="#fff" stroke="#111" stroke-width="1.3"/><path d="M3 5.5 H8" stroke="#111" stroke-width="1.4"/><path d="M5.5 3 V8" stroke="#111" stroke-width="1.4"/></svg>
<svg class="a" style="left:1610px;top:145px;" width="18" height="18" viewBox="0 0 18 18"><circle cx="9" cy="9" r="8.5" fill="rgba(220,140,60,0.6)"/><path d="M2 3 L16 3 L9 15Z" fill="none" stroke="#f0a040" stroke-width="2"/><path d="M2 3 L16 3 L9 15Z" fill="none" stroke="#5a2a00" stroke-width="0.5"/></svg>
<div class="t " style="left:1630px;top:150.43px;font-size:11.3px;color:#fff;">1_2000_House</div>
<div class="a " style="left:1716px;top:149px;width:2px;height:12px;background:#444"></div>
<svg class="a" style="left:1726px;top:146px;" width="16" height="16" viewBox="0 0 16 16"><path d="M2 3 L14 3 L8 14Z" fill="none" stroke="#111" stroke-width="1"/><circle cx="2" cy="3" r="1.6" fill="#fff" stroke="#111" stroke-width="0.6"/><circle cx="14" cy="3" r="1.6" fill="#fff" stroke="#111" stroke-width="0.6"/><circle cx="8" cy="14" r="1.6" fill="#fff" stroke="#111" stroke-width="0.6"/></svg>
<svg class="a" style="left:1592px;top:168px;" width="11" height="11" viewBox="0 0 11 11"><circle cx="5.5" cy="5.5" r="4.5" fill="#fff" stroke="#111" stroke-width="1.3"/><path d="M3 5.5 H8" stroke="#111" stroke-width="1.4"/><path d="M5.5 3 V8" stroke="#111" stroke-width="1.4"/></svg>
<svg class="a" style="left:1610px;top:165px;" width="18" height="18" viewBox="0 0 18 18"><circle cx="5" cy="5" r="3.5" fill="#f0a040" stroke="#5a2a00" stroke-width="0.7"/><circle cx="11" cy="5" r="3.5" fill="#f0a040" stroke="#5a2a00" stroke-width="0.7"/><rect x="2" y="8" width="11" height="6" fill="#f0a040" stroke="#5a2a00" stroke-width="0.7"/><path d="M13 9 L17 7 V15 L13 13Z" fill="#f0a040" stroke="#5a2a00" stroke-width="0.7"/></svg>
<div class="t " style="left:1630px;top:170.43px;font-size:11.3px;color:#000;">Camera</div>
<div class="a " style="left:1679px;top:169px;width:2px;height:12px;background:#444"></div>
<svg class="a" style="left:1687px;top:164px;" width="20" height="20" viewBox="0 0 20 20"><circle cx="10" cy="10" r="9.5" fill="rgba(180,180,180,0.45)"/><circle cx="7" cy="7" r="3" fill="#999" stroke="#666"/><circle cx="13" cy="7" r="3" fill="#999" stroke="#666"/><rect x="4" y="10" width="10" height="5" fill="#999" stroke="#666"/></svg>
<svg class="a" style="left:1592px;top:188px;" width="11" height="11" viewBox="0 0 11 11"><circle cx="5.5" cy="5.5" r="4.5" fill="#fff" stroke="#111" stroke-width="1.3"/><path d="M3 5.5 H8" stroke="#111" stroke-width="1.4"/><path d="M5.5 3 V8" stroke="#111" stroke-width="1.4"/></svg>
<svg class="a" style="left:1610px;top:185px;" width="16" height="18" viewBox="0 0 16 18"><circle cx="8" cy="6.5" r="5" fill="#f5e090" stroke="#5a4010" stroke-width="0.8"/><rect x="5.5" y="11" width="5" height="4" fill="#c8a050" stroke="#5a4010" stroke-width="0.6"/></svg>
<div class="t " style="left:1630px;top:190.43px;font-size:11.3px;color:#000;">Lamp</div>
<div class="a " style="left:1668px;top:189px;width:2px;height:12px;background:#444"></div>
<svg class="a" style="left:1678px;top:185px;" width="18" height="18" viewBox="0 0 18 18"><circle cx="9" cy="9" r="3" fill="#b0b060"/><path d="M2 2 L6 6 M16 2 L12 6 M2 16 L6 12 M16 16 L12 12 M2 2 H5 M2 2 V5 M16 2 H13 M16 2 V5 M2 16 H5 M2 16 V13 M16 16 H13 M16 16 V13" stroke="#a8a890" stroke-width="1"/></svg>
<svg class="a" style="left:1855px;top:148px;" width="16" height="12" viewBox="0 0 16 12"><path d="M1 6 Q8 -1 15 6 Q8 13 1 6Z" fill="#fff" stroke="#111" stroke-width="1"/><circle cx="8" cy="6" r="2.6" fill="#111"/></svg>
<svg class="a" style="left:1877px;top:146px;" width="12" height="16" viewBox="0 0 12 16"><path d="M2 1 L2 13 L5 10 L7.5 15 L9.5 14 L7 9 L11 9Z" fill="#fff" stroke="#111" stroke-width="1"/></svg>
<svg class="a" style="left:1894px;top:147px;" width="16" height="14" viewBox="0 0 16 14"><rect x="1" y="3" width="13" height="10" fill="#ccc" stroke="#111"/><rect x="3" y="1" width="4" height="2" fill="#111"/><circle cx="7.5" cy="8" r="3" fill="#777" stroke="#111"/></svg>
<svg class="a" style="left:1855px;top:168px;" width="16" height="12" viewBox="0 0 16 12"><path d="M1 6 Q8 -1 15 6 Q8 13 1 6Z" fill="#fff" stroke="#111" stroke-width="1"/><circle cx="8" cy="6" r="2.6" fill="#111"/></svg>
<svg class="a" style="left:1877px;top:166px;" width="12" height="16" viewBox="0 0 12 16"><path d="M2 1 L2 13 L5 10 L7.5 15 L9.5 14 L7 9 L11 9Z" fill="#fff" stroke="#111" stroke-width="1"/></svg>
<svg class="a" style="left:1894px;top:167px;" width="16" height="14" viewBox="0 0 16 14"><rect x="1" y="3" width="13" height="10" fill="#ccc" stroke="#111"/><rect x="3" y="1" width="4" height="2" fill="#111"/><circle cx="7.5" cy="8" r="3" fill="#777" stroke="#111"/></svg>
<svg class="a" style="left:1855px;top:188px;" width="16" height="12" viewBox="0 0 16 12"><path d="M1 6 Q8 -1 15 6 Q8 13 1 6Z" fill="#fff" stroke="#111" stroke-width="1"/><circle cx="8" cy="6" r="2.6" fill="#111"/></svg>
<svg class="a" style="left:1877px;top:186px;" width="12" height="16" viewBox="0 0 12 16"><path d="M2 1 L2 13 L5 10 L7.5 15 L9.5 14 L7 9 L11 9Z" fill="#fff" stroke="#111" stroke-width="1"/></svg>
<svg class="a" style="left:1894px;top:187px;" width="16" height="14" viewBox="0 0 16 14"><rect x="1" y="3" width="13" height="10" fill="#ccc" stroke="#111"/><rect x="3" y="1" width="4" height="2" fill="#111"/><circle cx="7.5" cy="8" r="3" fill="#777" stroke="#111"/></svg>
<svg class="a" style="left:1569px;top:208px" width="16" height="16"><line x1="0" y1="0" x2="16" y2="16" stroke="rgba(30,30,30,0.7)" stroke-width="1"/><line x1="0" y1="1" x2="15" y2="16" stroke="rgba(210,210,210,0.45)" stroke-width="1"/><line x1="0" y1="4" x2="12" y2="16" stroke="rgba(30,30,30,0.7)" stroke-width="1"/><line x1="0" y1="5" x2="11" y2="16" stroke="rgba(210,210,210,0.45)" stroke-width="1"/><line x1="0" y1="8" x2="8" y2="16" stroke="rgba(30,30,30,0.7)" stroke-width="1"/><line x1="0" y1="9" x2="7" y2="16" stroke="rgba(210,210,210,0.45)" stroke-width="1"/></svg>
<div class="a " style="left:1569px;top:227px;width:343px;height:805px;background:#727272"></div>
<div class="a " style="left:1569px;top:227px;width:343px;height:26px;background:#6a6a6a"></div>
<div class="a " style="left:1569px;top:252px;width:343px;height:1px;background:#7a7a7a"></div>
<div class="a " style="left:1578px;top:230px;width:30px;height:20px;background:linear-gradient(#555,#3a3a3a);border:1px solid #1a1a1a;border-radius:4px;"></div>
<svg class="a" style="left:1581px;top:232px;" width="16" height="16" viewBox="0 0 16 16"><rect x="2" y="3" width="11" height="4" rx="1.5" fill="#fff" stroke="#222" stroke-width="0.7"/><rect x="3" y="4" width="5" height="2" fill="#555"/><rect x="2" y="9" width="11" height="4.5" rx="2" fill="#fff" stroke="#222" stroke-width="0.7"/><path d="M4 11.2 L6 10 V12.5Z M11 11.2 L9 10 V12.5Z" fill="#222"/></svg>
<svg class="a" style="left:1598px;top:233px;" width="8" height="14" viewBox="0 0 8 14"><path d="M4 0.5 L7.5 5.5 L0.5 5.5Z M4 13.5 L7.5 8.5 L0.5 8.5Z" fill="#c8c8c8"/></svg>
<div class="a " style="left:1616px;top:230px;width:240px;height:20px;background:linear-gradient(#555,#3a3a3a);border:1px solid #1a1a1a;border-radius:4px"></div>
<div class="a " style="left:1776px;top:230px;width:21px;height:20px;background:linear-gradient(#6a95d6,#4a73b5);border:1px solid #1a1a1a"></div>
<div class="a " style="left:1636px;top:231px;width:1px;height:18px;background:#222"></div>
<div class="a " style="left:1656px;top:231px;width:1px;height:18px;background:#222"></div>
<div class="a " style="left:1676px;top:231px;width:1px;height:18px;background:#222"></div>
<div class="a " style="left:1696px;top:231px;width:1px;height:18px;background:#222"></div>
<div class="a " style="left:1716px;top:231px;width:1px;height:18px;background:#222"></div>
<div class="a " style="left:1736px;top:231px;width:1px;height:18px;background:#222"></div>
<div class="a " style="left:1756px;top:231px;width:1px;height:18px;background:#222"></div>
<div class="a " style="left:1776px;top:231px;width:1px;height:18px;background:#222"></div>
<div class="a " style="left:1796px;top:231px;width:1px;height:18px;background:#222"></div>
<div class="a " style="left:1816px;top:231px;width:1px;height:18px;background:#222"></div>
<div class="a " style="left:1836px;top:231px;width:1px;height:18px;background:#222"></div>
<svg class="a" style="left:1618px;top:232px;" width="16" height="16" viewBox="0 0 16 16"><rect x="1" y="4" width="13" height="9" fill="#777" stroke="#222" stroke-width="0.8"/><circle cx="8" cy="8.5" r="3" fill="#555" stroke="#aaa"/><rect x="2" y="2" width="4" height="2" fill="#888"/></svg>
<svg class="a" style="left:1638px;top:232px;" width="16" height="16" viewBox="0 0 16 16"><rect x="3" y="3" width="10" height="11" fill="#999" stroke="#222" stroke-width="0.8"/><rect x="1" y="1" width="10" height="11" fill="#bbb" stroke="#222" stroke-width="0.8"/><rect x="3" y="3" width="4" height="5" fill="#4a6ac8"/></svg>
<svg class="a" style="left:1658px;top:232px;" width="16" height="16" viewBox="0 0 16 16"><circle cx="4" cy="3.5" r="2" fill="#e8f090" opacity="0.7"/><rect x="8" y="2" width="5" height="8" rx="1.5" fill="#4a6ac8"/><circle cx="6" cy="11" r="3.3" fill="#ccc" stroke="#333" stroke-width="0.6"/></svg>
<svg class="a" style="left:1678px;top:232px;" width="16" height="16" viewBox="0 0 16 16"><circle cx="8" cy="8" r="6.3" fill="#3a78b8" stroke="#222" stroke-width="0.6"/><path d="M4 5 Q7 3 8 6 Q6 9 4 8Z M9 9 Q12 8 12 11 L10 13Z" fill="#6ab060"/></svg>
<svg class="a" style="left:1698px;top:232px;" width="16" height="16" viewBox="0 0 16 16"><path d="M8 1.5 L14 4 V11.5 L8 14.5 L2 11.5 V4Z" fill="#e0a050" stroke="#3a2a10" stroke-width="0.8"/><path d="M8 6.5 L14 4 V11.5 L8 14.5Z" fill="#b87830"/></svg>
<svg class="a" style="left:1718px;top:232px;" width="16" height="16" viewBox="0 0 16 16"><path d="M3 11 L7 7 M6 12 L10 8" stroke="#ccc" stroke-width="1"/><rect x="1" y="8" width="7" height="4" rx="2" transform="rotate(-45 4.5 10)" fill="none" stroke="#ddd" stroke-width="1.3"/><rect x="7" y="3" width="7" height="4" rx="2" transform="rotate(-45 10.5 5)" fill="none" stroke="#ddd" stroke-width="1.3"/></svg>
<svg class="a" style="left:1738px;top:232px;" width="16" height="16" viewBox="0 0 16 16"><path d="M2 14 L9 7 M8 3 Q10 0 13 2 L11 4 L12 5 L14 3 Q16 6 12 8 Z" stroke="#5a88c8" stroke-width="2" fill="#5a88c8"/></svg>
<svg class="a" style="left:1758px;top:232px;" width="16" height="16" viewBox="0 0 16 16"><path d="M2 3 L14 3 L8 14Z" fill="none" stroke="#ccc" stroke-width="1"/><circle cx="2" cy="3" r="1.5" fill="#ddd"/><circle cx="14" cy="3" r="1.5" fill="#ddd"/><circle cx="8" cy="14" r="1.5" fill="#ddd"/></svg>
<svg class="a" style="left:1778px;top:232px;" width="16" height="16" viewBox="0 0 16 16"><defs><radialGradient id="mtg" cx="0.35" cy="0.3" r="0.75"><stop offset="0" stop-color="#fff"/><stop offset="0.7" stop-color="#c8c8c8"/><stop offset="1" stop-color="#555"/></radialGradient></defs><circle cx="8" cy="8" r="6.5" fill="url(#mtg)" stroke="#333" stroke-width="0.7"/><path d="M8 1.5 A6.5 6.5 0 0 0 1.5 8 H8Z M8 8 H14.5 A6.5 6.5 0 0 1 8 14.5Z" fill="rgba(190,70,60,0.55)"/></svg>
<svg class="a" style="left:1798px;top:232px;" width="16" height="16" viewBox="0 0 16 16"><rect x="2" y="2" width="12" height="12" fill="#ddd"/><path d="M2 2 h3 v3 h-3z M8 2 h3 v3 h-3z M5 5 h3 v3 h-3z M11 5 h3 v3 h-3z M2 8 h3 v3 h-3z M8 8 h3 v3 h-3z M5 11 h3 v3 h-3z M11 11 h3 v3 h-3z" fill="#a03a3a"/></svg>
<svg class="a" style="left:1818px;top:232px;" width="16" height="16" viewBox="0 0 16 16"><path d="M4 1 V7 M1 4 H7 M11 6 V14 M7 10 H15 M3 10 V14 M1 12 H5" stroke="#f0e8a0" stroke-width="1.2"/></svg>
<svg class="a" style="left:1838px;top:232px;" width="16" height="16" viewBox="0 0 16 16"><path d="M2 9 L6 13 L13 3" stroke="#4a6ac8" stroke-width="2.2" fill="none"/><circle cx="12" cy="4" r="2.5" fill="#ccc"/></svg>
<svg class="a" style="left:1896px;top:228px" width="16" height="16"><line x1="0" y1="0" x2="16" y2="16" stroke="rgba(40,40,40,0.55)" stroke-width="1"/><line x1="1" y1="0" x2="16" y2="15" stroke="rgba(200,200,200,0.35)" stroke-width="1"/><line x1="4" y1="0" x2="16" y2="12" stroke="rgba(40,40,40,0.55)" stroke-width="1"/><line x1="5" y1="0" x2="16" y2="11" stroke="rgba(200,200,200,0.35)" stroke-width="1"/><line x1="8" y1="0" x2="16" y2="8" stroke="rgba(40,40,40,0.55)" stroke-width="1"/><line x1="9" y1="0" x2="16" y2="7" stroke="rgba(200,200,200,0.35)" stroke-width="1"/></svg>
<svg class="a" style="left:1569px;top:1016px" width="16" height="16"><line x1="0" y1="0" x2="16" y2="16" stroke="rgba(30,30,30,0.7)" stroke-width="1"/><line x1="0" y1="1" x2="15" y2="16" stroke="rgba(210,210,210,0.45)" stroke-width="1"/><line x1="0" y1="4" x2="12" y2="16" stroke="rgba(30,30,30,0.7)" stroke-width="1"/><line x1="0" y1="5" x2="11" y2="16" stroke="rgba(210,210,210,0.45)" stroke-width="1"/><line x1="0" y1="8" x2="8" y2="16" stroke="rgba(30,30,30,0.7)" stroke-width="1"/><line x1="0" y1="9" x2="7" y2="16" stroke="rgba(210,210,210,0.45)" stroke-width="1"/></svg>
<svg class="a" style="left:1579px;top:264px;" width="16" height="16" viewBox="0 0 16 16"><path d="M2 15 L7 10" stroke="#222" stroke-width="2.4"/><path d="M2 15 L7 10" stroke="#fff" stroke-width="1"/><path d="M5 7 L10 2 L15 7 L10 12Z" fill="#eee" stroke="#222" stroke-width="0.9"/></svg>
<svg class="a" style="left:1601px;top:263px;" width="16" height="16" viewBox="0 0 16 16"><circle cx="4" cy="3.5" r="2.2" fill="#e8f090" opacity="0.9"/><rect x="8.5" y="2" width="5.5" height="9" rx="1.8" fill="#5a7ad8" stroke="#1a2a5a" stroke-width="0.7"/><circle cx="6" cy="11.5" r="3.5" fill="#f0f0f0" stroke="#333" stroke-width="0.7"/></svg>
<svg class="a" style="left:1622px;top:267px;" width="6" height="8" viewBox="0 0 6 8"><path d="M1 1 L5 4 L1 7Z" fill="#444"/></svg>
<svg class="a" style="left:1642px;top:263px;" width="16" height="16" viewBox="0 0 16 16"><path d="M8 1.5 L14 4 V11.5 L8 14.5 L2 11.5 V4Z" fill="#f5b862" stroke="#3a2a10" stroke-width="0.9"/><path d="M8 6.5 L14 4 V11.5 L8 14.5Z" fill="#e08a20"/><path d="M2 4 L8 6.5 L14 4" stroke="#fff3d0" fill="none" stroke-width="0.8"/></svg>
<div class="t " style="left:1661px;top:267.43px;font-size:11.3px;color:#000;">1_2000_House</div>
<svg class="a" style="left:1753px;top:267px;" width="6" height="8" viewBox="0 0 6 8"><path d="M1 1 L5 4 L1 7Z" fill="#444"/></svg>
<svg class="a" style="left:1772px;top:263px;" width="16" height="16" viewBox="0 0 16 16"><defs><radialGradient id="mtg" cx="0.35" cy="0.3" r="0.75"><stop offset="0" stop-color="#fff"/><stop offset="0.7" stop-color="#c8c8c8"/><stop offset="1" stop-color="#555"/></radialGradient></defs><circle cx="8" cy="8" r="6.5" fill="url(#mtg)" stroke="#333" stroke-width="0.7"/><path d="M8 1.5 A6.5 6.5 0 0 0 1.5 8 H8Z M8 8 H14.5 A6.5 6.5 0 0 1 8 14.5Z" fill="rgba(190,70,60,0.55)"/></svg>
<div class="t " style="left:1792px;top:267.43px;font-size:11.3px;color:#000;">Dach</div>
<div class="a " style="left:1578px;top:298px;width:281px;height:62px;background:#7c7c7c;border:1px solid #4a4a4a;border-radius:5px"></div>
<div class="a " style="left:1584px;top:326px;width:270px;height:18px;background:#5680c2"></div>
<svg class="a" style="left:1585px;top:307px;" width="16" height="16" viewBox="0 0 16 16"><circle cx="8" cy="8" r="7" fill="#e8d8d0" stroke="#888" stroke-width="0.6"/><path d="M8 4 A4 4 0 0 0 8 12 A2.5 4 0 0 1 8 4Z" fill="#222"/></svg>
<div class="t " style="left:1606px;top:311.43px;font-size:11.3px;color:#000;">haus</div>
<svg class="a" style="left:1585px;top:327px;" width="16" height="16" viewBox="0 0 16 16"><defs><radialGradient id="mb" cx="0.4" cy="0.35" r="0.7"><stop offset="0" stop-color="#e89060"/><stop offset="1" stop-color="#7a2a10"/></radialGradient></defs><circle cx="8" cy="8" r="7" fill="url(#mb)"/></svg>
<div class="t " style="left:1606px;top:331.43px;font-size:11.3px;color:#000;">Dach</div>
<svg class="a" style="left:1586px;top:343px;" width="11" height="11" viewBox="0 0 11 11"><circle cx="5.5" cy="5.5" r="4.5" fill="none" stroke="#555" stroke-width="1"/><path d="M3 5.5 H8 M5.5 3 V8" stroke="#555"/></svg>
<div class="a " style="left:1720px;top:348px;width:14px;height:1px;background:#222"></div>
<div class="a " style="left:1720px;top:351px;width:14px;height:1px;background:#222"></div>
<div class="a " style="left:1867px;top:298px;width:20px;height:19px;background:linear-gradient(#b0b0b0,#8c8c8c);border:1px solid #2a2a2a;border-radius:4px 4px 0px 0px;"></div>
<svg class="a" style="left:1871px;top:302px;" width="12" height="12" viewBox="0 0 12 12"><path d="M6 1 V11 M1 6 H11" stroke="#222" stroke-width="3.2"/><path d="M6 1.5 V10.5 M1.5 6 H10.5" stroke="#fff" stroke-width="1.6"/></svg>
<div class="a " style="left:1867px;top:316px;width:20px;height:20px;background:linear-gradient(#b0b0b0,#8c8c8c);border:1px solid #2a2a2a;border-radius:0;"></div>
<svg class="a" style="left:1871px;top:320px;" width="12" height="12" viewBox="0 0 12 12"><path d="M1 6 H11" stroke="#222" stroke-width="3.2"/><path d="M1.5 6 H10.5" stroke="#fff" stroke-width="1.6"/></svg>
<div class="a " style="left:1867px;top:336px;width:20px;height:20px;background:linear-gradient(#555,#3a3a3a);border:1px solid #1a1a1a;border-radius:0px 0px 4px 4px;"></div>
<svg class="a" style="left:1871px;top:340px;" width="12" height="12" viewBox="0 0 12 12"><path d="M1 2 H11 L6 11Z" fill="#111"/><path d="M8 5 L6 11" stroke="#eee" stroke-width="1"/></svg>
<div class="a " style="left:1578px;top:366px;width:31px;height:19px;background:linear-gradient(#555,#3a3a3a);border:1px solid #1a1a1a;border-radius:4px 0px 0px 4px;"></div>
<svg class="a" style="left:1581px;top:368px;" width="15" height="15" viewBox="0 0 15 15"><circle cx="7.5" cy="7.5" r="6.5" fill="url(#mtg)" stroke="#333" stroke-width="0.7"/><path d="M7.5 1 A6.5 6.5 0 0 0 1 7.5 H7.5Z M7.5 7.5 H14 A6.5 6.5 0 0 1 7.5 14Z" fill="rgba(190,70,60,0.55)"/></svg>
<svg class="a" style="left:1598px;top:369px;" width="8" height="14" viewBox="0 0 8 14"><path d="M4 0.5 L7.5 5.5 L0.5 5.5Z M4 13.5 L7.5 8.5 L0.5 8.5Z" fill="#c8c8c8"/></svg>
<div class="a " style="left:1608px;top:366px;width:105px;height:19px;background:linear-gradient(#9c9c9c,#b8b8b8);border:1px solid #2a2a2a;border-radius:0;"><div class="bl" style="left:7px;right:0;top:1px;text-align:left;line-height:17px;font-size:11.3px;color:#000">Dach</div></div>
<div class="a " style="left:1712px;top:366px;width:21px;height:19px;background:linear-gradient(#a6a6a6,#8e8e8e);border:1px solid #2a2a2a;border-radius:0;"><div class="bl" style="left:0px;right:0;top:1px;text-align:center;line-height:17px;font-size:11.3px;color:#000">F</div></div>
<div class="a " style="left:1732px;top:366px;width:21px;height:19px;background:linear-gradient(#a6a6a6,#8e8e8e);border:1px solid #2a2a2a;border-radius:0;"></div>
<svg class="a" style="left:1737px;top:370px;" width="12" height="12" viewBox="0 0 12 12"><path d="M6 1 V11 M1 6 H11" stroke="#222" stroke-width="3.2"/><path d="M6 1.5 V10.5 M1.5 6 H10.5" stroke="#fff" stroke-width="1.6"/></svg>
<div class="a " style="left:1752px;top:366px;width:21px;height:19px;background:linear-gradient(#a6a6a6,#8e8e8e);border:1px solid #2a2a2a;border-radius:0px 4px 4px 0px;"></div>
<svg class="a" style="left:1756px;top:370px;" width="12" height="12" viewBox="0 0 12 12"><path d="M2 2 L10 10 M10 2 L2 10" stroke="#222" stroke-width="3.2"/><path d="M2.3 2.3 L9.7 9.7 M9.7 2.3 L2.3 9.7" stroke="#fff" stroke-width="1.6"/></svg>
<div class="a " style="left:1781px;top:366px;width:20px;height:19px;background:linear-gradient(#a6a6a6,#8e8e8e);border:1px solid #2a2a2a;border-radius:4px;"></div>
<svg class="a" style="left:1783px;top:368px;" width="16" height="16" viewBox="0 0 16 16"><rect x="1" y="1" width="8" height="6" fill="#fff" stroke="#222" stroke-width="0.8"/><rect x="1" y="9" width="8" height="6" fill="#fff" stroke="#222" stroke-width="0.8"/><path d="M9 4 Q15 4 15 8 Q15 12 9 12" stroke="#4a7ad0" stroke-width="1.4" fill="none"/></svg>
<div class="a " style="left:1809px;top:366px;width:78px;height:19px;background:linear-gradient(#555,#383838);border:1px solid #1a1a1a;border-radius:4px;"><div class="bl" style="left:8px;right:0;top:1px;text-align:left;line-height:17px;font-size:11.3px;color:#fff">Data</div></div>
<svg class="a" style="left:1876px;top:369px;" width="8" height="14" viewBox="0 0 8 14"><path d="M4 0.5 L7.5 5.5 L0.5 5.5Z M4 13.5 L7.5 8.5 L0.5 8.5Z" fill="#c8c8c8"/></svg>
<div class="a " style="left:1578px;top:391px;width:77px;height:19px;background:linear-gradient(#6a95d6,#4a73b5);border:1px solid #1a1a1a;border-radius:4px 0px 0px 4px;"><div class="bl" style="left:0px;right:0;top:1px;text-align:center;line-height:17px;font-size:11.3px;color:#000">Surface</div></div>
<div class="a " style="left:1654px;top:391px;width:77px;height:19px;background:linear-gradient(#555,#3a3a3a);border:1px solid #1a1a1a;border-radius:0;"><div class="bl" style="left:0px;right:0;top:1px;text-align:center;line-height:17px;font-size:11.3px;color:#fff">Wire</div></div>
<div class="a " style="left:1730px;top:391px;width:78px;height:19px;background:linear-gradient(#555,#3a3a3a);border:1px solid #1a1a1a;border-radius:0;"><div class="bl" style="left:0px;right:0;top:1px;text-align:center;line-height:17px;font-size:11.3px;color:#fff">Volume</div></div>
<div class="a " style="left:1807px;top:391px;width:80px;height:19px;background:linear-gradient(#555,#3a3a3a);border:1px solid #1a1a1a;border-radius:0px 4px 4px 0px;"><div class="bl" style="left:0px;right:0;top:1px;text-align:center;line-height:17px;font-size:11.3px;color:#fff">Halo</div></div>
<div class="a " style="left:1573px;top:418px;width:326px;height:1px;background:#4e4e4e"></div>
<div class="a " style="left:1573px;top:419px;width:326px;height:1px;background:#8a8a8a"></div>
<div class="a" style="left:1582px;top:426px;width:0;height:0;border-left:4px solid transparent;border-right:4px solid transparent;border-top:7px solid #1a1a1a"></div>
<div class="t " style="left:1594px;top:423.59px;font-size:12.3px;color:#000;">Preview</div>
<svg class="a" style="left:1870px;top:421px" width="16" height="16"><line x1="0" y1="0" x2="16" y2="16" stroke="rgba(40,40,40,0.55)" stroke-width="1"/><line x1="1" y1="0" x2="16" y2="15" stroke="rgba(200,200,200,0.35)" stroke-width="1"/><line x1="4" y1="0" x2="16" y2="12" stroke="rgba(40,40,40,0.55)" stroke-width="1"/><line x1="5" y1="0" x2="16" y2="11" stroke="rgba(200,200,200,0.35)" stroke-width="1"/><line x1="8" y1="0" x2="16" y2="8" stroke="rgba(40,40,40,0.55)" stroke-width="1"/><line x1="9" y1="0" x2="16" y2="7" stroke="rgba(200,200,200,0.35)" stroke-width="1"/></svg>
<svg class="a" style="left:1578px;top:450px" width="271" height="112" viewBox="0 0 271 112"><defs><clipPath id="pc"><rect x="0" y="0" width="271" height="112" rx="5"/></clipPath></defs><g clip-path="url(#pc)"><rect width="271" height="112" fill="#a2a2a2"/><polygon points="-8.0,-71.7 20.7,-56.5 20.7,-28.7 -8.0,-40.1" fill="#a4a4a4"/><polygon points="-8.0,-40.1 20.7,-28.7 20.7,-2.0 -8.0,-9.7" fill="#2f2f2f"/><polygon points="-8.0,-9.7 20.7,-2.0 20.7,26.3 -8.0,22.5" fill="#a4a4a4"/><polygon points="-8.0,22.5 20.7,26.3 20.7,54.7 -8.0,54.7" fill="#2f2f2f"/><polygon points="-8.0,54.7 20.7,54.7 20.7,82.1 -8.0,85.8" fill="#a4a4a4"/><polygon points="-8.0,85.8 20.7,82.1 20.7,111.4 -8.0,119.1" fill="#2f2f2f"/><polygon points="-8.0,119.1 20.7,111.4 20.7,140.9 -8.0,152.6" fill="#a4a4a4"/><polygon points="-8.0,152.6 20.7,140.9 20.7,171.5 -8.0,187.4" fill="#2f2f2f"/><polygon points="20.7,-56.5 55.0,-38.4 55.0,-15.1 20.7,-28.7" fill="#2f2f2f"/><polygon points="20.7,-28.7 55.0,-15.1 55.0,7.2 20.7,-2.0" fill="#a4a4a4"/><polygon points="20.7,-2.0 55.0,7.2 55.0,31.0 20.7,26.3" fill="#2f2f2f"/><polygon points="20.7,26.3 55.0,31.0 55.0,54.7 20.7,54.7" fill="#a4a4a4"/><polygon points="20.7,54.7 55.0,54.7 55.0,77.6 20.7,82.1" fill="#2f2f2f"/><polygon points="20.7,82.1 55.0,77.6 55.0,102.2 20.7,111.4" fill="#a4a4a4"/><polygon points="20.7,111.4 55.0,102.2 55.0,126.8 20.7,140.9" fill="#2f2f2f"/><polygon points="20.7,140.9 55.0,126.8 55.0,152.4 20.7,171.5" fill="#a4a4a4"/><polygon points="55.0,-38.4 79.8,-25.3 79.8,-5.3 55.0,-15.1" fill="#a4a4a4"/><polygon points="55.0,-15.1 79.8,-5.3 79.8,13.9 55.0,7.2" fill="#2f2f2f"/><polygon points="55.0,7.2 79.8,13.9 79.8,34.3 55.0,31.0" fill="#a4a4a4"/><polygon points="55.0,31.0 79.8,34.3 79.8,54.7 55.0,54.7" fill="#2f2f2f"/><polygon points="55.0,54.7 79.8,54.7 79.8,74.4 55.0,77.6" fill="#a4a4a4"/><polygon points="55.0,77.6 79.8,74.4 79.8,95.5 55.0,102.2" fill="#2f2f2f"/><polygon points="55.0,102.2 79.8,95.5 79.8,116.7 55.0,126.8" fill="#a4a4a4"/><polygon points="55.0,126.8 79.8,116.7 79.8,138.7 55.0,152.4" fill="#2f2f2f"/><polygon points="280.6,-71.7 251.9,-56.5 251.9,-28.7 280.6,-40.1" fill="#2f2f2f"/><polygon points="280.6,-40.1 251.9,-28.7 251.9,-2.0 280.6,-9.7" fill="#a4a4a4"/><polygon points="280.6,-9.7 251.9,-2.0 251.9,26.3 280.6,22.5" fill="#2f2f2f"/><polygon points="280.6,22.5 251.9,26.3 251.9,54.7 280.6,54.7" fill="#a4a4a4"/><polygon points="280.6,54.7 251.9,54.7 251.9,82.1 280.6,85.8" fill="#2f2f2f"/><polygon points="280.6,85.8 251.9,82.1 251.9,111.4 280.6,119.1" fill="#a4a4a4"/><polygon points="280.6,119.1 251.9,111.4 251.9,140.9 280.6,152.6" fill="#2f2f2f"/><polygon points="280.6,152.6 251.9,140.9 251.9,171.5 280.6,187.4" fill="#a4a4a4"/><polygon points="251.9,-56.5 217.6,-38.4 217.6,-15.1 251.9,-28.7" fill="#a4a4a4"/><polygon points="251.9,-28.7 217.6,-15.1 217.6,7.2 251.9,-2.0" fill="#2f2f2f"/><polygon points="251.9,-2.0 217.6,7.2 217.6,31.0 251.9,26.3" fill="#a4a4a4"/><polygon points="251.9,26.3 217.6,31.0 217.6,54.7 251.9,54.7" fill="#2f2f2f"/><polygon points="251.9,54.7 217.6,54.7 217.6,77.6 251.9,82.1" fill="#a4a4a4"/><polygon points="251.9,82.1 217.6,77.6 217.6,102.2 251.9,111.4" fill="#2f2f2f"/><polygon points="251.9,111.4 217.6,102.2 217.6,126.8 251.9,140.9" fill="#a4a4a4"/><polygon points="251.9,140.9 217.6,126.8 217.6,152.4 251.9,171.5" fill="#2f2f2f"/><polygon points="217.6,-38.4 192.8,-25.3 192.8,-5.3 217.6,-15.1" fill="#2f2f2f"/><polygon points="217.6,-15.1 192.8,-5.3 192.8,13.9 217.6,7.2" fill="#a4a4a4"/><polygon points="217.6,7.2 192.8,13.9 192.8,34.3 217.6,31.0" fill="#2f2f2f"/><polygon points="217.6,31.0 192.8,34.3 192.8,54.7 217.6,54.7" fill="#a4a4a4"/><polygon points="217.6,54.7 192.8,54.7 192.8,74.4 217.6,77.6" fill="#2f2f2f"/><polygon points="217.6,77.6 192.8,74.4 192.8,95.5 217.6,102.2" fill="#a4a4a4"/><polygon points="217.6,102.2 192.8,95.5 192.8,116.7 217.6,126.8" fill="#2f2f2f"/><polygon points="217.6,126.8 192.8,116.7 192.8,138.7 217.6,152.4" fill="#a4a4a4"/><rect x="79.8" y="13.9" width="19.7" height="20.4" fill="#a4a4a4"/><rect x="79.8" y="34.3" width="19.7" height="20.4" fill="#2f2f2f"/><rect x="79.8" y="54.7" width="19.7" height="19.7" fill="#a4a4a4"/><rect x="79.8" y="74.4" width="19.7" height="21.1" fill="#2f2f2f"/><rect x="79.8" y="95.5" width="19.7" height="21.2" fill="#a4a4a4"/><rect x="99.5" y="13.9" width="18.8" height="20.4" fill="#2f2f2f"/><rect x="99.5" y="34.3" width="18.8" height="20.4" fill="#a4a4a4"/><rect x="99.5" y="54.7" width="18.8" height="19.7" fill="#2f2f2f"/><rect x="99.5" y="74.4" width="18.8" height="21.1" fill="#a4a4a4"/><rect x="99.5" y="95.5" width="18.8" height="21.2" fill="#2f2f2f"/><rect x="118.3" y="13.9" width="18.0" height="20.4" fill="#a4a4a4"/><rect x="118.3" y="34.3" width="18.0" height="20.4" fill="#2f2f2f"/><rect x="118.3" y="54.7" width="18.0" height="19.7" fill="#a4a4a4"/><rect x="118.3" y="74.4" width="18.0" height="21.1" fill="#2f2f2f"/><rect x="118.3" y="95.5" width="18.0" height="21.2" fill="#a4a4a4"/><rect x="136.3" y="13.9" width="18.7" height="20.4" fill="#2f2f2f"/><rect x="136.3" y="34.3" width="18.7" height="20.4" fill="#a4a4a4"/><rect x="136.3" y="54.7" width="18.7" height="19.7" fill="#2f2f2f"/><rect x="136.3" y="74.4" width="18.7" height="21.1" fill="#a4a4a4"/><rect x="136.3" y="95.5" width="18.7" height="21.2" fill="#2f2f2f"/><rect x="155.0" y="13.9" width="18.9" height="20.4" fill="#a4a4a4"/><rect x="155.0" y="34.3" width="18.9" height="20.4" fill="#2f2f2f"/><rect x="155.0" y="54.7" width="18.9" height="19.7" fill="#a4a4a4"/><rect x="155.0" y="74.4" width="18.9" height="21.1" fill="#2f2f2f"/><rect x="155.0" y="95.5" width="18.9" height="21.2" fill="#a4a4a4"/><rect x="173.9" y="13.9" width="18.9" height="20.4" fill="#2f2f2f"/><rect x="173.9" y="34.3" width="18.9" height="20.4" fill="#a4a4a4"/><rect x="173.9" y="54.7" width="18.9" height="19.7" fill="#2f2f2f"/><rect x="173.9" y="74.4" width="18.9" height="21.1" fill="#a4a4a4"/><rect x="173.9" y="95.5" width="18.9" height="21.2" fill="#2f2f2f"/><polygon points="79.8,95.5 192.8,95.5 271,125 0,125" fill="#a4a4a4"/><polygon points="41.3,95.5 60.3,95.5 -41.7,104 -71.2,104" fill="#2f2f2f" opacity="0.9"/><polygon points="79.3,95.5 98.3,95.5 38.3,104 8.8,104" fill="#2f2f2f" opacity="0.9"/><polygon points="117.3,95.5 136.3,95.5 118.3,104 88.8,104" fill="#2f2f2f" opacity="0.9"/><polygon points="155.3,95.5 174.3,95.5 198.3,104 168.8,104" fill="#2f2f2f" opacity="0.9"/><polygon points="193.3,95.5 212.3,95.5 278.3,104 248.8,104" fill="#2f2f2f" opacity="0.9"/><polygon points="231.3,95.5 250.3,95.5 358.3,104 328.8,104" fill="#2f2f2f" opacity="0.9"/><polygon points="-31.7,104 -3.7,104 -63.7,112 -103.7,112" fill="#2f2f2f" opacity="0.9"/><polygon points="24.3,104 52.3,104 16.3,112 -23.7,112" fill="#2f2f2f" opacity="0.9"/><polygon points="80.3,104 108.3,104 96.3,112 56.3,112" fill="#2f2f2f" opacity="0.9"/><polygon points="136.3,104 164.3,104 176.3,112 136.3,112" fill="#2f2f2f" opacity="0.9"/><polygon points="192.3,104 220.3,104 256.3,112 216.3,112" fill="#2f2f2f" opacity="0.9"/><polygon points="248.3,104 276.3,104 336.3,112 296.3,112" fill="#2f2f2f" opacity="0.9"/><polygon points="304.3,104 332.3,104 416.3,112 376.3,112" fill="#2f2f2f" opacity="0.9"/><defs><radialGradient id="sph" cx="0.42" cy="0.38" r="0.62"><stop offset="0" stop-color="#d08050"/><stop offset="0.55" stop-color="#b8683a"/><stop offset="0.85" stop-color="#8a4420"/><stop offset="1" stop-color="#5a2a12"/></radialGradient><radialGradient id="spk" cx="0.5" cy="0.5" r="0.5"><stop offset="0" stop-color="#ffe8e0" stop-opacity="0.95"/><stop offset="1" stop-color="#e09070" stop-opacity="0"/></radialGradient><radialGradient id="wh" cx="0.4" cy="0.35" r="0.7"><stop offset="0" stop-color="#ffffff"/><stop offset="1" stop-color="#c8c8cc"/></radialGradient></defs><circle cx="135.2" cy="54.7" r="49.6" fill="url(#sph)"/><circle cx="136" cy="56" r="42" fill="none" stroke="rgba(90,40,15,0.1)" stroke-width="2"/><circle cx="136" cy="56" r="34" fill="none" stroke="rgba(90,40,15,0.1)" stroke-width="2"/><circle cx="136" cy="56" r="26" fill="none" stroke="rgba(90,40,15,0.1)" stroke-width="2"/><circle cx="124" cy="33" r="13" fill="url(#spk)"/><path d="M125 39 L142 37 L152 46 L154 60 L148 72 L133 75 L121 69 L117 55Z" fill="url(#wh)"/></g><rect x="0.5" y="0.5" width="270" height="111" rx="5" fill="none" stroke="#333"/></svg>
<div class="a " style="left:1858px;top:450px;width:29px;height:120px;background:linear-gradient(#555,#3a3a3a);border:1px solid #1a1a1a;border-radius:5px"></div>
<div class="a " style="left:1858px;top:470px;width:29px;height:20px;background:linear-gradient(#6a95d6,#4a73b5);border:1px solid #1a1a1a"></div>
<div class="a " style="left:1859px;top:470px;width:27px;height:1px;background:#222"></div>
<div class="a " style="left:1859px;top:490px;width:27px;height:1px;background:#222"></div>
<div class="a " style="left:1859px;top:510px;width:27px;height:1px;background:#222"></div>
<div class="a " style="left:1859px;top:530px;width:27px;height:1px;background:#222"></div>
<div class="a " style="left:1859px;top:550px;width:27px;height:1px;background:#222"></div>
<svg class="a" style="left:1864px;top:453px;" width="16" height="16" viewBox="0 0 16 16"><rect x="2" y="2" width="12" height="12" fill="#aaa" stroke="#333"/></svg>
<svg class="a" style="left:1864px;top:473px;" width="16" height="16" viewBox="0 0 16 16"><circle cx="8" cy="8" r="6" fill="#eee" stroke="#222"/></svg>
<svg class="a" style="left:1864px;top:493px;" width="16" height="16" viewBox="0 0 16 16"><path d="M8 1.5 L14 4 V11.5 L8 14.5 L2 11.5 V4Z" fill="#999" stroke="#333" stroke-width="0.8"/></svg>
<svg class="a" style="left:1864px;top:513px;" width="16" height="16" viewBox="0 0 16 16"><path d="M2 5 Q2 2 5 3 Q8 0 11 3 Q14 2 14 5 Q14 8 11 8 L10 13 L6 13 L5 8 Q2 8 2 5Z" fill="#999" stroke="#333" stroke-width="0.8"/></svg>
<svg class="a" style="left:1864px;top:533px;" width="16" height="16" viewBox="0 0 16 16"><path d="M3 14 Q4 6 8 3 M7 14 Q8 7 11 4 M11 14 Q12 8 14 6" stroke="#999" stroke-width="1.2" fill="none"/></svg>
<svg class="a" style="left:1864px;top:553px;" width="16" height="16" viewBox="0 0 16 16"><circle cx="8" cy="10" r="4.5" fill="#bbb"/><circle cx="11" cy="5" r="3" fill="#889"/><circle cx="4" cy="3" r="1.5" fill="#ee9"/></svg>
<div class="a " style="left:1705px;top:565px;width:14px;height:1px;background:#222"></div>
<div class="a " style="left:1705px;top:568px;width:14px;height:1px;background:#222"></div>
<div class="a " style="left:1573px;top:578px;width:326px;height:1px;background:#4e4e4e"></div>
<div class="a " style="left:1573px;top:579px;width:326px;height:1px;background:#8a8a8a"></div>
<div class="a" style="left:1582px;top:586px;width:0;height:0;border-left:4px solid transparent;border-right:4px solid transparent;border-top:7px solid #1a1a1a"></div>
<div class="t " style="left:1594px;top:583.59px;font-size:12.3px;color:#000;">Diffuse</div>
<svg class="a" style="left:1870px;top:581px" width="16" height="16"><line x1="0" y1="0" x2="16" y2="16" stroke="rgba(40,40,40,0.55)" stroke-width="1"/><line x1="1" y1="0" x2="16" y2="15" stroke="rgba(200,200,200,0.35)" stroke-width="1"/><line x1="4" y1="0" x2="16" y2="12" stroke="rgba(40,40,40,0.55)" stroke-width="1"/><line x1="5" y1="0" x2="16" y2="11" stroke="rgba(200,200,200,0.35)" stroke-width="1"/><line x1="8" y1="0" x2="16" y2="8" stroke="rgba(40,40,40,0.55)" stroke-width="1"/><line x1="9" y1="0" x2="16" y2="7" stroke="rgba(200,200,200,0.35)" stroke-width="1"/></svg>
<div class="a " style="left:1578px;top:611px;width:150px;height:19px;background:#e6e6e6;border:1px solid #2a2a2a;border-radius:5px"></div>
<div class="a " style="left:1736px;top:611px;width:151px;height:19px;background:linear-gradient(#555,#383838);border:1px solid #1a1a1a;border-radius:4px;"><div class="bl" style="left:8px;right:0;top:1px;text-align:left;line-height:17px;font-size:11.3px;color:#fff">Lambert</div></div>
<svg class="a" style="left:1876px;top:613px;" width="8" height="14" viewBox="0 0 8 14"><path d="M4 0.5 L7.5 5.5 L0.5 5.5Z M4 13.5 L7.5 8.5 L0.5 8.5Z" fill="#c8c8c8"/></svg>
<div class="a " style="left:1578px;top:633px;width:150px;height:19px;background:linear-gradient(#a6a6a6,#bababa);border:1px solid #2a2a2a;overflow:hidden;border-radius:8px;"><div class="a" style="left:0;top:0;bottom:0;width:80.0%;background:linear-gradient(#7a7a7a,#8a8a8a)"></div><div class="bl" style="left:14px;top:1px;line-height:17px;color:#000">Intensity:</div><div class="bl" style="right:15px;top:1px;line-height:17px;color:#000">0.800</div></div>
<div class="a " style="left:1739px;top:635px;width:14px;height:14px;background:linear-gradient(#5a5a5a,#3c3c3c);border:1px solid #222;border-radius:3px;"></div>
<div class="t " style="left:1761px;top:638.43px;font-size:11.3px;color:#000;">Ramp</div>
<div class="a " style="left:1573px;top:664px;width:326px;height:1px;background:#4e4e4e"></div>
<div class="a " style="left:1573px;top:665px;width:326px;height:1px;background:#8a8a8a"></div>
<div class="a" style="left:1582px;top:674px;width:0;height:0;border-left:4px solid transparent;border-right:4px solid transparent;border-top:7px solid #1a1a1a"></div>
<div class="t " style="left:1594px;top:670.59px;font-size:12.3px;color:#000;">Specular</div>
<svg class="a" style="left:1870px;top:667px" width="16" height="16"><line x1="0" y1="0" x2="16" y2="16" stroke="rgba(40,40,40,0.55)" stroke-width="1"/><line x1="1" y1="0" x2="16" y2="15" stroke="rgba(200,200,200,0.35)" stroke-width="1"/><line x1="4" y1="0" x2="16" y2="12" stroke="rgba(40,40,40,0.55)" stroke-width="1"/><line x1="5" y1="0" x2="16" y2="11" stroke="rgba(200,200,200,0.35)" stroke-width="1"/><line x1="8" y1="0" x2="16" y2="8" stroke="rgba(40,40,40,0.55)" stroke-width="1"/><line x1="9" y1="0" x2="16" y2="7" stroke="rgba(200,200,200,0.35)" stroke-width="1"/></svg>
<div class="a " style="left:1578px;top:698px;width:150px;height:19px;background:#ffffff;border:1px solid #2a2a2a;border-radius:5px"></div>
<div class="a " style="left:1736px;top:698px;width:151px;height:19px;background:linear-gradient(#555,#383838);border:1px solid #1a1a1a;border-radius:4px;"><div class="bl" style="left:8px;right:0;top:1px;text-align:left;line-height:17px;font-size:11.3px;color:#fff">CookTorr</div></div>
<svg class="a" style="left:1876px;top:700px;" width="8" height="14" viewBox="0 0 8 14"><path d="M4 0.5 L7.5 5.5 L0.5 5.5Z M4 13.5 L7.5 8.5 L0.5 8.5Z" fill="#c8c8c8"/></svg>
<div class="a " style="left:1578px;top:720px;width:150px;height:19px;background:linear-gradient(#a6a6a6,#bababa);border:1px solid #2a2a2a;overflow:hidden;border-radius:8px;"><div class="a" style="left:0;top:0;bottom:0;width:50.0%;background:linear-gradient(#7a7a7a,#8a8a8a)"></div><div class="bl" style="left:14px;top:1px;line-height:17px;color:#000">Intensity:</div><div class="bl" style="right:15px;top:1px;line-height:17px;color:#000">0.500</div></div>
<div class="a " style="left:1739px;top:722px;width:14px;height:14px;background:linear-gradient(#5a5a5a,#3c3c3c);border:1px solid #222;border-radius:3px;"></div>
<div class="t " style="left:1761px;top:725.43px;font-size:11.3px;color:#000;">Ramp</div>
<div class="a " style="left:1578px;top:745px;width:309px;height:19px;background:linear-gradient(#a6a6a6,#bababa);border:1px solid #2a2a2a;border-radius:8px;"><div class="bl" style="left:14px;top:1px;line-height:17px;color:#000">Hardness:</div><div class="bl" style="right:15px;top:1px;line-height:17px;color:#000">50</div><div class="arl" style="top:5.5px;border-right-color:#808080"></div><div class="arr" style="top:5.5px;border-left-color:#808080"></div></div>
<div class="a " style="left:1573px;top:772px;width:326px;height:1px;background:#4e4e4e"></div>
<div class="a " style="left:1573px;top:773px;width:326px;height:1px;background:#8a8a8a"></div>
<div class="a" style="left:1582px;top:780px;width:0;height:0;border-left:4px solid transparent;border-right:4px solid transparent;border-top:7px solid #1a1a1a"></div>
<div class="t " style="left:1594px;top:777.59px;font-size:12.3px;color:#000;">Shading</div>
<svg class="a" style="left:1870px;top:775px" width="16" height="16"><line x1="0" y1="0" x2="16" y2="16" stroke="rgba(40,40,40,0.55)" stroke-width="1"/><line x1="1" y1="0" x2="16" y2="15" stroke="rgba(200,200,200,0.35)" stroke-width="1"/><line x1="4" y1="0" x2="16" y2="12" stroke="rgba(40,40,40,0.55)" stroke-width="1"/><line x1="5" y1="0" x2="16" y2="11" stroke="rgba(200,200,200,0.35)" stroke-width="1"/><line x1="8" y1="0" x2="16" y2="8" stroke="rgba(40,40,40,0.55)" stroke-width="1"/><line x1="9" y1="0" x2="16" y2="7" stroke="rgba(200,200,200,0.35)" stroke-width="1"/></svg>
<div class="a " style="left:1578px;top:805px;width:150px;height:19px;background:linear-gradient(#a6a6a6,#bababa);border:1px solid #2a2a2a;border-radius:8px;"><div class="bl" style="left:14px;top:1px;line-height:17px;color:#000">Emit:</div><div class="bl" style="right:15px;top:1px;line-height:17px;color:#000">0.00</div><div class="arl" style="top:5.5px;border-right-color:#808080"></div><div class="arr" style="top:5.5px;border-left-color:#808080"></div></div>
<div class="a " style="left:1578px;top:827px;width:150px;height:19px;background:linear-gradient(#a6a6a6,#bababa);border:1px solid #2a2a2a;overflow:hidden;border-radius:8px;"><div class="a" style="left:0;top:0;bottom:0;width:100.0%;background:linear-gradient(#7a7a7a,#8a8a8a)"></div><div class="bl" style="left:14px;top:1px;line-height:17px;color:#000">Ambient:</div><div class="bl" style="right:15px;top:1px;line-height:17px;color:#000">1.000</div></div>
<div class="a " style="left:1578px;top:827px;width:150px;height:19px;background:linear-gradient(#7a7a7a,#8a8a8a);border:1px solid #2a2a2a;border-radius:8px"><div class="bl" style="left:13px;top:1px;line-height:17px">Ambient:</div><div class="bl" style="right:15px;top:1px;line-height:17px">1.000</div></div>
<div class="a " style="left:1578px;top:849px;width:150px;height:19px;background:linear-gradient(#a6a6a6,#bababa);border:1px solid #2a2a2a;overflow:hidden;border-radius:8px;"><div class="a" style="left:0;top:0;bottom:0;width:0.0%;background:linear-gradient(#7a7a7a,#8a8a8a)"></div><div class="bl" style="left:14px;top:1px;line-height:17px;color:#000">Translucency:</div><div class="bl" style="right:15px;top:1px;line-height:17px;color:#000">0.000</div></div>
<div class="a " style="left:1579px;top:850px;width:6px;height:17px;background:#808080;border-radius:8px 0 0 8px"></div>
<div class="a " style="left:1739px;top:807px;width:14px;height:14px;background:linear-gradient(#5a5a5a,#3c3c3c);border:1px solid #222;border-radius:3px;"></div>
<div class="t " style="left:1761px;top:810.43px;font-size:11.3px;color:#000;">Shadeless</div>
<div class="a " style="left:1739px;top:829px;width:14px;height:14px;background:linear-gradient(#5a5a5a,#3c3c3c);border:1px solid #222;border-radius:3px;"></div>
<div class="t " style="left:1761px;top:832.43px;font-size:11.3px;color:#000;">Tangent Shading</div>
<div class="a " style="left:1739px;top:851px;width:14px;height:14px;background:linear-gradient(#5a5a5a,#3c3c3c);border:1px solid #222;border-radius:3px;"></div>
<div class="t " style="left:1761px;top:854.43px;font-size:11.3px;color:#000;">Cubic Interpolation</div>
<div class="a " style="left:1573px;top:875px;width:326px;height:1px;background:#4e4e4e"></div>
<div class="a " style="left:1573px;top:876px;width:326px;height:1px;background:#8a8a8a"></div>
<div class="a" style="left:1582px;top:884px;width:0;height:0;border-left:4px solid transparent;border-right:4px solid transparent;border-top:7px solid #1a1a1a"></div>
<div class="a " style="left:1594px;top:881px;width:14px;height:14px;background:linear-gradient(#5a5a5a,#3c3c3c);border:1px solid #222;border-radius:3px"></div>
<div class="t " style="left:1614px;top:881.59px;font-size:12.3px;color:#000;">Transparency</div>
<svg class="a" style="left:1870px;top:878px" width="16" height="16"><line x1="0" y1="0" x2="16" y2="16" stroke="rgba(40,40,40,0.55)" stroke-width="1"/><line x1="1" y1="0" x2="16" y2="15" stroke="rgba(200,200,200,0.35)" stroke-width="1"/><line x1="4" y1="0" x2="16" y2="12" stroke="rgba(40,40,40,0.55)" stroke-width="1"/><line x1="5" y1="0" x2="16" y2="11" stroke="rgba(200,200,200,0.35)" stroke-width="1"/><line x1="8" y1="0" x2="16" y2="8" stroke="rgba(40,40,40,0.55)" stroke-width="1"/><line x1="9" y1="0" x2="16" y2="7" stroke="rgba(200,200,200,0.35)" stroke-width="1"/></svg>
<div class="a " style="left:1578px;top:909px;width:102px;height:19px;background:linear-gradient(#666,#575757);border:1px solid #4a4a4a;border-radius:4px 0px 0px 4px;"><div class="bl" style="left:0px;right:0;top:1px;text-align:center;line-height:17px;font-size:11.3px;color:#a8a8a8">Mask</div></div>
<div class="a " style="left:1679px;top:909px;width:104px;height:19px;background:linear-gradient(#7a93bb,#6480ad);border:1px solid #4a4a4a;border-radius:0;"><div class="bl" style="left:0px;right:0;top:1px;text-align:center;line-height:17px;font-size:11.3px;color:#3a4e70">Z Transparency</div></div>
<div class="a " style="left:1782px;top:909px;width:105px;height:19px;background:linear-gradient(#666,#575757);border:1px solid #4a4a4a;border-radius:0px 4px 4px 0px;"><div class="bl" style="left:0px;right:0;top:1px;text-align:center;line-height:17px;font-size:11.3px;color:#a8a8a8">Raytrace</div></div>
<div class="a " style="left:1578px;top:934px;width:150px;height:19px;background:linear-gradient(#8c8c8c,#969696);border:1px solid #5a5a5a;border-radius:8px;"><div class="bl" style="left:13px;top:1px;line-height:17px;color:#5e5e5e">Alpha:</div><div class="bl" style="right:13px;top:1px;line-height:17px;color:#5e5e5e">1.000</div></div>
<div class="a " style="left:1736px;top:934px;width:151px;height:19px;background:linear-gradient(#8c8c8c,#969696);border:1px solid #5a5a5a;border-radius:8px;"><div class="bl" style="left:14px;top:1px;line-height:17px;color:#5e5e5e">Fresnel:</div><div class="bl" style="right:15px;top:1px;line-height:17px;color:#5e5e5e">0.000</div><div class="arl" style="top:5.5px;border-right-color:#8a8a8a"></div><div class="arr" style="top:5.5px;border-left-color:#8a8a8a"></div></div>
<div class="a " style="left:1578px;top:956px;width:150px;height:19px;background:linear-gradient(#8c8c8c,#969696);border:1px solid #5a5a5a;border-radius:8px;"><div class="bl" style="left:13px;top:1px;line-height:17px;color:#5e5e5e">Specular:</div><div class="bl" style="right:13px;top:1px;line-height:17px;color:#5e5e5e">1.000</div></div>
<div class="a " style="left:1736px;top:956px;width:151px;height:19px;background:linear-gradient(#8c8c8c,#969696);border:1px solid #5a5a5a;border-radius:8px;"><div class="bl" style="left:13px;top:1px;line-height:17px;color:#5e5e5e">Blend:</div><div class="bl" style="right:13px;top:1px;line-height:17px;color:#5e5e5e">1.250</div></div>
<div class="a " style="left:1573px;top:982px;width:326px;height:1px;background:#4e4e4e"></div>
<div class="a " style="left:1573px;top:983px;width:326px;height:1px;background:#8a8a8a"></div>
<div class="a" style="left:1584px;top:990px;width:0;height:0;border-top:4px solid transparent;border-bottom:4px solid transparent;border-left:7px solid #1a1a1a"></div>
<div class="a " style="left:1594px;top:987px;width:14px;height:14px;background:linear-gradient(#5a5a5a,#3c3c3c);border:1px solid #222;border-radius:3px"></div>
<div class="t " style="left:1614px;top:988.59px;font-size:12.3px;color:#000;">Mirror</div>
<svg class="a" style="left:1870px;top:985px" width="16" height="16"><line x1="0" y1="0" x2="16" y2="16" stroke="rgba(40,40,40,0.55)" stroke-width="1"/><line x1="1" y1="0" x2="16" y2="15" stroke="rgba(200,200,200,0.35)" stroke-width="1"/><line x1="4" y1="0" x2="16" y2="12" stroke="rgba(40,40,40,0.55)" stroke-width="1"/><line x1="5" y1="0" x2="16" y2="11" stroke="rgba(200,200,200,0.35)" stroke-width="1"/><line x1="8" y1="0" x2="16" y2="8" stroke="rgba(40,40,40,0.55)" stroke-width="1"/><line x1="9" y1="0" x2="16" y2="7" stroke="rgba(200,200,200,0.35)" stroke-width="1"/></svg>
<div class="a " style="left:1573px;top:1006px;width:326px;height:1px;background:#4e4e4e"></div>
<div class="a " style="left:1573px;top:1007px;width:326px;height:1px;background:#8a8a8a"></div>
<div class="a" style="left:1584px;top:1014px;width:0;height:0;border-top:4px solid transparent;border-bottom:4px solid transparent;border-left:7px solid #1a1a1a"></div>
<div class="a " style="left:1594px;top:1011px;width:14px;height:14px;background:linear-gradient(#5a5a5a,#3c3c3c);border:1px solid #222;border-radius:3px"></div>
<div class="t " style="left:1614px;top:1012.59px;font-size:12.3px;color:#000;">Subsurface Scattering</div>
<svg class="a" style="left:1870px;top:1009px" width="16" height="16"><line x1="0" y1="0" x2="16" y2="16" stroke="rgba(40,40,40,0.55)" stroke-width="1"/><line x1="1" y1="0" x2="16" y2="15" stroke="rgba(200,200,200,0.35)" stroke-width="1"/><line x1="4" y1="0" x2="16" y2="12" stroke="rgba(40,40,40,0.55)" stroke-width="1"/><line x1="5" y1="0" x2="16" y2="11" stroke="rgba(200,200,200,0.35)" stroke-width="1"/><line x1="8" y1="0" x2="16" y2="8" stroke="rgba(40,40,40,0.55)" stroke-width="1"/><line x1="9" y1="0" x2="16" y2="7" stroke="rgba(200,200,200,0.35)" stroke-width="1"/></svg>
<div class="a " style="left:1895px;top:258px;width:13px;height:770px;background:#5e5e5e;border:1px solid #4a4a4a;border-radius:7px"></div>
<div class="a " style="left:1895px;top:258px;width:13px;height:553px;background:linear-gradient(90deg,#8e8e8e,#a0a0a0 45%,#8a8a8a);border:1px solid #4a4a4a;border-radius:7px"></div>
<div class="a " style="left:1908px;top:227px;width:4px;height:805px;background:#6e6e6e"></div>
<div class="a " style="left:1910px;top:227px;width:2px;height:805px;background:#7a686c"></div>
<div class="a " style="left:8px;top:941px;width:1560px;height:47px;background:#727272"></div>
<div class="a " style="left:8px;top:941px;width:264.8px;height:47px;background:#464646"></div>
<div class="a " style="left:272.8px;top:941px;width:1px;height:47px;background:#2a2a2a"></div>
<div class="a " style="left:1416.376px;top:941px;width:151.62400000000002px;height:47px;background:#464646"></div>
<div class="a" style="left:23.2px;top:941px;width:1px;height:47px;background:rgba(50,50,50,0.15)"></div><div class="a" style="left:45.9px;top:941px;width:1px;height:47px;background:rgba(50,50,50,0.35)"></div><div class="a" style="left:68.6px;top:941px;width:1px;height:47px;background:rgba(50,50,50,0.15)"></div><div class="a" style="left:91.3px;top:941px;width:1px;height:47px;background:rgba(50,50,50,0.35)"></div><div class="a" style="left:114.0px;top:941px;width:1px;height:47px;background:rgba(50,50,50,0.15)"></div><div class="a" style="left:136.7px;top:941px;width:1px;height:47px;background:rgba(50,50,50,0.35)"></div><div class="a" style="left:159.4px;top:941px;width:1px;height:47px;background:rgba(50,50,50,0.15)"></div><div class="a" style="left:182.0px;top:941px;width:1px;height:47px;background:rgba(50,50,50,0.35)"></div><div class="a" style="left:204.7px;top:941px;width:1px;height:47px;background:rgba(50,50,50,0.15)"></div><div class="a" style="left:227.4px;top:941px;width:1px;height:47px;background:rgba(50,50,50,0.35)"></div><div class="a" style="left:250.1px;top:941px;width:1px;height:47px;background:rgba(50,50,50,0.15)"></div><div class="a" style="left:272.8px;top:941px;width:1px;height:47px;background:rgba(50,50,50,0.35)"></div><div class="a" style="left:295.5px;top:941px;width:1px;height:47px;background:rgba(50,50,50,0.15)"></div><div class="a" style="left:318.2px;top:941px;width:1px;height:47px;background:rgba(50,50,50,0.35)"></div><div class="a" style="left:340.9px;top:941px;width:1px;height:47px;background:rgba(50,50,50,0.15)"></div><div class="a" style="left:363.6px;top:941px;width:1px;height:47px;background:rgba(50,50,50,0.35)"></div><div class="a" style="left:386.2px;top:941px;width:1px;height:47px;background:rgba(50,50,50,0.15)"></div><div class="a" style="left:408.9px;top:941px;width:1px;height:47px;background:rgba(50,50,50,0.35)"></div><div class="a" style="left:431.6px;top:941px;width:1px;height:47px;background:rgba(50,50,50,0.15)"></div><div class="a" style="left:454.3px;top:941px;width:1px;height:47px;background:rgba(50,50,50,0.35)"></div><div class="a" style="left:477.0px;top:941px;width:1px;height:47px;background:rgba(50,50,50,0.15)"></div><div class="a" style="left:499.7px;top:941px;width:1px;height:47px;background:rgba(50,50,50,0.35)"></div><div class="a" style="left:522.4px;top:941px;width:1px;height:47px;background:rgba(50,50,50,0.15)"></div><div class="a" style="left:545.1px;top:941px;width:1px;height:47px;background:rgba(50,50,50,0.35)"></div><div class="a" style="left:567.8px;top:941px;width:1px;height:47px;background:rgba(50,50,50,0.15)"></div><div class="a" style="left:590.5px;top:941px;width:1px;height:47px;background:rgba(50,50,50,0.35)"></div><div class="a" style="left:613.2px;top:941px;width:1px;height:47px;background:rgba(50,50,50,0.15)"></div><div class="a" style="left:635.8px;top:941px;width:1px;height:47px;background:rgba(50,50,50,0.35)"></div><div class="a" style="left:658.5px;top:941px;width:1px;height:47px;background:rgba(50,50,50,0.15)"></div><div class="a" style="left:681.2px;top:941px;width:1px;height:47px;background:rgba(50,50,50,0.35)"></div><div class="a" style="left:703.9px;top:941px;width:1px;height:47px;background:rgba(50,50,50,0.15)"></div><div class="a" style="left:726.6px;top:941px;width:1px;height:47px;background:rgba(50,50,50,0.35)"></div><div class="a" style="left:749.3px;top:941px;width:1px;height:47px;background:rgba(50,50,50,0.15)"></div><div class="a" style="left:772.0px;top:941px;width:1px;height:47px;background:rgba(50,50,50,0.35)"></div><div class="a" style="left:794.7px;top:941px;width:1px;height:47px;background:rgba(50,50,50,0.15)"></div><div class="a" style="left:817.4px;top:941px;width:1px;height:47px;background:rgba(50,50,50,0.35)"></div><div class="a" style="left:840.0px;top:941px;width:1px;height:47px;background:rgba(50,50,50,0.15)"></div><div class="a" style="left:862.7px;top:941px;width:1px;height:47px;background:rgba(50,50,50,0.35)"></div><div class="a" style="left:885.4px;top:941px;width:1px;height:47px;background:rgba(50,50,50,0.15)"></div><div class="a" style="left:908.1px;top:941px;width:1px;height:47px;background:rgba(50,50,50,0.35)"></div><div class="a" style="left:930.8px;top:941px;width:1px;height:47px;background:rgba(50,50,50,0.15)"></div><div class="a" style="left:953.5px;top:941px;width:1px;height:47px;background:rgba(50,50,50,0.35)"></div><div class="a" style="left:976.2px;top:941px;width:1px;height:47px;background:rgba(50,50,50,0.15)"></div><div class="a" style="left:998.9px;top:941px;width:1px;height:47px;background:rgba(50,50,50,0.35)"></div><div class="a" style="left:1021.6px;top:941px;width:1px;height:47px;background:rgba(50,50,50,0.15)"></div><div class="a" style="left:1044.3px;top:941px;width:1px;height:47px;background:rgba(50,50,50,0.35)"></div><div class="a" style="left:1067.0px;top:941px;width:1px;height:47px;background:rgba(50,50,50,0.15)"></div><div class="a" style="left:1089.6px;top:941px;width:1px;height:47px;background:rgba(50,50,50,0.35)"></div><div class="a" style="left:1112.3px;top:941px;width:1px;height:47px;background:rgba(50,50,50,0.15)"></div><div class="a" style="left:1135.0px;top:941px;width:1px;height:47px;background:rgba(50,50,50,0.35)"></div><div class="a" style="left:1157.7px;top:941px;width:1px;height:47px;background:rgba(50,50,50,0.15)"></div><div class="a" style="left:1180.4px;top:941px;width:1px;height:47px;background:rgba(50,50,50,0.35)"></div><div class="a" style="left:1203.1px;top:941px;width:1px;height:47px;background:rgba(50,50,50,0.15)"></div><div class="a" style="left:1225.8px;top:941px;width:1px;height:47px;background:rgba(50,50,50,0.35)"></div><div class="a" style="left:1248.5px;top:941px;width:1px;height:47px;background:rgba(50,50,50,0.15)"></div><div class="a" style="left:1271.2px;top:941px;width:1px;height:47px;background:rgba(50,50,50,0.35)"></div><div class="a" style="left:1293.9px;top:941px;width:1px;height:47px;background:rgba(50,50,50,0.15)"></div><div class="a" style="left:1316.5px;top:941px;width:1px;height:47px;background:rgba(50,50,50,0.35)"></div><div class="a" style="left:1339.2px;top:941px;width:1px;height:47px;background:rgba(50,50,50,0.15)"></div><div class="a" style="left:1361.9px;top:941px;width:1px;height:47px;background:rgba(50,50,50,0.35)"></div><div class="a" style="left:1384.6px;top:941px;width:1px;height:47px;background:rgba(50,50,50,0.15)"></div><div class="a" style="left:1407.3px;top:941px;width:1px;height:47px;background:rgba(50,50,50,0.35)"></div><div class="a" style="left:1430.0px;top:941px;width:1px;height:47px;background:rgba(50,50,50,0.15)"></div><div class="a" style="left:1452.7px;top:941px;width:1px;height:47px;background:rgba(50,50,50,0.35)"></div><div class="a" style="left:1475.4px;top:941px;width:1px;height:47px;background:rgba(50,50,50,0.15)"></div><div class="a" style="left:1498.1px;top:941px;width:1px;height:47px;background:rgba(50,50,50,0.35)"></div><div class="a" style="left:1520.8px;top:941px;width:1px;height:47px;background:rgba(50,50,50,0.15)"></div><div class="a" style="left:1543.4px;top:941px;width:1px;height:47px;background:rgba(50,50,50,0.35)"></div><div class="a" style="left:1566.1px;top:941px;width:1px;height:47px;background:rgba(50,50,50,0.15)"></div>
<div class="a " style="left:275.838px;top:941px;width:4px;height:47px;background:#5cc83c"></div>
<svg class="a" style="left:1552px;top:942px" width="16" height="16"><line x1="0" y1="0" x2="16" y2="16" stroke="rgba(40,40,40,0.55)" stroke-width="1"/><line x1="1" y1="0" x2="16" y2="15" stroke="rgba(200,200,200,0.35)" stroke-width="1"/><line x1="4" y1="0" x2="16" y2="12" stroke="rgba(40,40,40,0.55)" stroke-width="1"/><line x1="5" y1="0" x2="16" y2="11" stroke="rgba(200,200,200,0.35)" stroke-width="1"/><line x1="8" y1="0" x2="16" y2="8" stroke="rgba(40,40,40,0.55)" stroke-width="1"/><line x1="9" y1="0" x2="16" y2="7" stroke="rgba(200,200,200,0.35)" stroke-width="1"/></svg>
<div class="a " style="left:8px;top:988px;width:1560px;height:18px;background:#6a6a6a"></div>
<div class="a " style="left:12px;top:989px;width:1552px;height:15px;background:linear-gradient(#8e8e8e,#b0b0b0 50%,#9a9a9a);border:1px solid #333;border-radius:8px"></div>
<div class="a " style="left:15px;top:991px;width:11px;height:11px;background:#6e6e6e;border-radius:6px"></div>
<div class="t" style="left:14.4px;width:60px;text-align:center;top:991.4px;font-size:11.3px;color:#000">-50</div><div class="t" style="left:59.8px;width:60px;text-align:center;top:991.4px;font-size:11.3px;color:#000">-40</div><div class="t" style="left:105.2px;width:60px;text-align:center;top:991.4px;font-size:11.3px;color:#000">-30</div><div class="t" style="left:150.5px;width:60px;text-align:center;top:991.4px;font-size:11.3px;color:#000">-20</div><div class="t" style="left:195.9px;width:60px;text-align:center;top:991.4px;font-size:11.3px;color:#000">-10</div><div class="t" style="left:245.3px;width:60px;text-align:center;top:991.4px;font-size:11.3px;color:#000">0</div><div class="t" style="left:290.7px;width:60px;text-align:center;top:991.4px;font-size:11.3px;color:#000">10</div><div class="t" style="left:336.1px;width:60px;text-align:center;top:991.4px;font-size:11.3px;color:#000">20</div><div class="t" style="left:381.4px;width:60px;text-align:center;top:991.4px;font-size:11.3px;color:#000">30</div><div class="t" style="left:426.8px;width:60px;text-align:center;top:991.4px;font-size:11.3px;color:#000">40</div><div class="t" style="left:472.2px;width:60px;text-align:center;top:991.4px;font-size:11.3px;color:#000">50</div><div class="t" style="left:517.6px;width:60px;text-align:center;top:991.4px;font-size:11.3px;color:#000">60</div><div class="t" style="left:563.0px;width:60px;text-align:center;top:991.4px;font-size:11.3px;color:#000">70</div><div class="t" style="left:608.3px;width:60px;text-align:center;top:991.4px;font-size:11.3px;color:#000">80</div><div class="t" style="left:653.7px;width:60px;text-align:center;top:991.4px;font-size:11.3px;color:#000">90</div><div class="t" style="left:699.1px;width:60px;text-align:center;top:991.4px;font-size:11.3px;color:#000">100</div><div class="t" style="left:744.5px;width:60px;text-align:center;top:991.4px;font-size:11.3px;color:#000">110</div><div class="t" style="left:789.9px;width:60px;text-align:center;top:991.4px;font-size:11.3px;color:#000">120</div><div class="t" style="left:835.2px;width:60px;text-align:center;top:991.4px;font-size:11.3px;color:#000">130</div><div class="t" style="left:880.6px;width:60px;text-align:center;top:991.4px;font-size:11.3px;color:#000">140</div><div class="t" style="left:926.0px;width:60px;text-align:center;top:991.4px;font-size:11.3px;color:#000">150</div><div class="t" style="left:971.4px;width:60px;text-align:center;top:991.4px;font-size:11.3px;color:#000">160</div><div class="t" style="left:1016.8px;width:60px;text-align:center;top:991.4px;font-size:11.3px;color:#000">170</div><div class="t" style="left:1062.1px;width:60px;text-align:center;top:991.4px;font-size:11.3px;color:#000">180</div><div class="t" style="left:1107.5px;width:60px;text-align:center;top:991.4px;font-size:11.3px;color:#000">190</div><div class="t" style="left:1152.9px;width:60px;text-align:center;top:991.4px;font-size:11.3px;color:#000">200</div><div class="t" style="left:1198.3px;width:60px;text-align:center;top:991.4px;font-size:11.3px;color:#000">210</div><div class="t" style="left:1243.7px;width:60px;text-align:center;top:991.4px;font-size:11.3px;color:#000">220</div><div class="t" style="left:1289.0px;width:60px;text-align:center;top:991.4px;font-size:11.3px;color:#000">230</div><div class="t" style="left:1334.4px;width:60px;text-align:center;top:991.4px;font-size:11.3px;color:#000">240</div><div class="t" style="left:1379.8px;width:60px;text-align:center;top:991.4px;font-size:11.3px;color:#000">250</div><div class="t" style="left:1425.2px;width:60px;text-align:center;top:991.4px;font-size:11.3px;color:#000">260</div><div class="t" style="left:1470.6px;width:60px;text-align:center;top:991.4px;font-size:11.3px;color:#000">270</div><div class="t" style="left:1515.9px;width:60px;text-align:center;top:991.4px;font-size:11.3px;color:#000">280</div>
<div class="a " style="left:8px;top:1006px;width:1560px;height:26px;background:#727272"></div>
<div class="a " style="left:8px;top:1005px;width:1560px;height:1px;background:#5a5a5a"></div>
<svg class="a" style="left:8px;top:1015px" width="16" height="16"><line x1="0" y1="0" x2="16" y2="16" stroke="rgba(30,30,30,0.7)" stroke-width="1"/><line x1="0" y1="1" x2="15" y2="16" stroke="rgba(210,210,210,0.45)" stroke-width="1"/><line x1="0" y1="4" x2="12" y2="16" stroke="rgba(30,30,30,0.7)" stroke-width="1"/><line x1="0" y1="5" x2="11" y2="16" stroke="rgba(210,210,210,0.45)" stroke-width="1"/><line x1="0" y1="8" x2="8" y2="16" stroke="rgba(30,30,30,0.7)" stroke-width="1"/><line x1="0" y1="9" x2="7" y2="16" stroke="rgba(210,210,210,0.45)" stroke-width="1"/></svg>
<div class="a " style="left:17px;top:1009px;width:30px;height:20px;background:linear-gradient(#555,#3a3a3a);border:1px solid #1a1a1a;border-radius:4px;"></div>
<svg class="a" style="left:21px;top:1011px;" width="16" height="16" viewBox="0 0 16 16"><circle cx="8" cy="8" r="6.8" fill="#f0e8e8" stroke="#222" stroke-width="1.1"/><path d="M9.5 4 L6 8 L9.5 11" stroke="#222" stroke-width="1.2" fill="none"/><circle cx="8" cy="2.5" r="0.6" fill="#c33"/><circle cx="13.5" cy="8" r="0.6" fill="#999"/></svg>
<svg class="a" style="left:37px;top:1012px;" width="8" height="14" viewBox="0 0 8 14"><path d="M4 0.5 L7.5 5.5 L0.5 5.5Z M4 13.5 L7.5 8.5 L0.5 8.5Z" fill="#c8c8c8"/></svg>
<div class="t " style="left:60px;top:1015.43px;font-size:11.3px;color:#000;">View</div>
<div class="t " style="left:104px;top:1015.43px;font-size:11.3px;color:#000;">Marker</div>
<div class="t " style="left:159px;top:1015.43px;font-size:11.3px;color:#000;">Frame</div>
<div class="t " style="left:211px;top:1015.43px;font-size:11.3px;color:#000;">Playback</div>
<div class="a " style="left:269px;top:1009px;width:20px;height:20px;background:linear-gradient(#a6a6a6,#8e8e8e);border:1px solid #2a2a2a;border-radius:4px 0px 0px 4px;"></div>
<svg class="a" style="left:271px;top:1011px;" width="16" height="16" viewBox="0 0 16 16"><circle cx="8" cy="8" r="6.5" fill="#fff" stroke="#222" stroke-width="1"/><path d="M8 8 V2 A6 6 0 0 1 14 8Z" fill="#f0a030"/><path d="M8 8 L4 11" stroke="#222"/></svg>
<div class="a " style="left:288px;top:1009px;width:20px;height:20px;background:linear-gradient(#a6a6a6,#8e8e8e);border:1px solid #2a2a2a;border-radius:0px 4px 4px 0px;"></div>
<svg class="a" style="left:291px;top:1011px;" width="14" height="16" viewBox="0 0 14 16"><path d="M4 7 V5 A3 3 0 0 1 10 5 V7" stroke="#333" stroke-width="1.5" fill="none"/><rect x="2.5" y="7" width="9" height="7" fill="#ddd" stroke="#333"/></svg>
<div class="a " style="left:315px;top:1009px;width:116px;height:20px;background:linear-gradient(#a6a6a6,#bababa);border:1px solid #2a2a2a;border-radius:8px 0px 0px 8px;"><div class="bl" style="left:14px;top:1px;line-height:18px;color:#000">Start:</div><div class="bl" style="right:15px;top:1px;line-height:18px;color:#000">1</div><div class="arl" style="top:6.0px;border-right-color:#808080"></div><div class="arr" style="top:6.0px;border-left-color:#808080"></div></div>
<div class="a " style="left:430px;top:1009px;width:111px;height:20px;background:linear-gradient(#a6a6a6,#bababa);border:1px solid #2a2a2a;border-radius:0px 8px 8px 0px;"><div class="bl" style="left:14px;top:1px;line-height:18px;color:#000">End:</div><div class="bl" style="right:15px;top:1px;line-height:18px;color:#000">250</div><div class="arl" style="top:6.0px;border-right-color:#808080"></div><div class="arr" style="top:6.0px;border-left-color:#808080"></div></div>
<div class="a " style="left:548px;top:1009px;width:89px;height:20px;background:linear-gradient(#a6a6a6,#bababa);border:1px solid #2a2a2a;border-radius:8px;"><div class="bl" style="left:14px;top:1px;line-height:18px;color:#000"></div><div class="bl" style="right:15px;top:1px;line-height:18px;color:#000">1</div><div class="arl" style="top:6.0px;border-right-color:#808080"></div><div class="arr" style="top:6.0px;border-left-color:#808080"></div></div>
<div class="a " style="left:653px;top:1009px;width:119px;height:20px;background:linear-gradient(#a8a8a8,#8c8c8c);border:1px solid #2a2a2a;border-radius:4px"></div>
<div class="a " style="left:672.8px;top:1010px;width:1px;height:18px;background:#3a3a3a"></div>
<div class="a " style="left:692.6px;top:1010px;width:1px;height:18px;background:#3a3a3a"></div>
<div class="a " style="left:712.4px;top:1010px;width:1px;height:18px;background:#3a3a3a"></div>
<div class="a " style="left:732.2px;top:1010px;width:1px;height:18px;background:#3a3a3a"></div>
<div class="a " style="left:752.0px;top:1010px;width:1px;height:18px;background:#3a3a3a"></div>
<svg class="a" style="left:656.0px;top:1012px;" width="14" height="14" viewBox="0 0 14 14"><path d="M2 2 V12 M12 2 L5 7 L12 12Z M8 2 L2.5 7 L8 12" stroke="#111" fill="#eee" stroke-width="1"/></svg>
<svg class="a" style="left:675.8px;top:1012px;" width="14" height="14" viewBox="0 0 14 14"><path d="M7 2 L1 7 L7 12Z M13 2 L7 7 L13 12Z" stroke="#111" fill="#eee" stroke-width="1"/></svg>
<svg class="a" style="left:695.6px;top:1012px;" width="14" height="14" viewBox="0 0 14 14"><path d="M11 1.5 L3 7 L11 12.5Z" stroke="#111" fill="#eee" stroke-width="1"/></svg>
<svg class="a" style="left:715.4px;top:1012px;" width="14" height="14" viewBox="0 0 14 14"><path d="M3 1.5 L11 7 L3 12.5Z" stroke="#111" fill="#eee" stroke-width="1"/></svg>
<svg class="a" style="left:735.2px;top:1012px;" width="14" height="14" viewBox="0 0 14 14"><path d="M1 2 L7 7 L1 12Z M7 2 L13 7 L7 12Z" stroke="#111" fill="#eee" stroke-width="1"/></svg>
<svg class="a" style="left:755.0px;top:1012px;" width="14" height="14" viewBox="0 0 14 14"><path d="M12 2 V12 M2 2 L9 7 L2 12Z M6 2 L11.5 7 L6 12" stroke="#111" fill="#eee" stroke-width="1"/></svg>
<div class="a " style="left:778px;top:1009px;width:115px;height:20px;background:linear-gradient(#555,#383838);border:1px solid #1a1a1a;border-radius:4px;"><div class="bl" style="left:7px;right:0;top:1px;text-align:left;line-height:18px;font-size:11.3px;color:#fff">No Sync</div></div>
<svg class="a" style="left:882px;top:1012px;" width="8" height="14" viewBox="0 0 8 14"><path d="M4 0.5 L7.5 5.5 L0.5 5.5Z M4 13.5 L7.5 8.5 L0.5 8.5Z" fill="#c8c8c8"/></svg>
<div class="a " style="left:910px;top:1009px;width:19px;height:20px;background:linear-gradient(#a6a6a6,#8e8e8e);border:1px solid #2a2a2a;border-radius:4px;"></div>
<svg class="a" style="left:912px;top:1011px;" width="15" height="15" viewBox="0 0 15 15"><circle cx="7.5" cy="7.5" r="4.8" fill="#e83010" stroke="#600" stroke-width="0.8"/></svg>
<div class="a " style="left:935px;top:1009px;width:130px;height:20px;background:linear-gradient(#9c9c9c,#b8b8b8);border:1px solid #2a2a2a;border-radius:4px 0px 0px 4px;"></div>
<svg class="a" style="left:939px;top:1010px;" width="18" height="18" viewBox="0 0 18 18"><circle cx="4" cy="13" r="2.6" fill="none" stroke="#222" stroke-width="2.4"/><circle cx="4" cy="13" r="2.6" fill="none" stroke="#f0e0a0" stroke-width="1.2"/><path d="M4 10 V2 M4 4 H7 M4 7 H6 M6 13 L15 8" stroke="#222" stroke-width="2.4"/><path d="M4 10 V2 M4 4 H7 M4 7 H6 M6 13 L15 8" stroke="#f0e0a0" stroke-width="1.2"/></svg>
<div class="a " style="left:1064px;top:1009px;width:21px;height:20px;background:linear-gradient(#a6a6a6,#8e8e8e);border:1px solid #2a2a2a;border-radius:0;"></div>
<svg class="a" style="left:1067px;top:1011px;" width="15" height="15" viewBox="0 0 15 15"><circle cx="4" cy="11" r="2.5" fill="none" stroke="#222" stroke-width="2.3"/><circle cx="4" cy="11" r="2.5" fill="none" stroke="#fff" stroke-width="1"/><path d="M6 9 L13 2" stroke="#222" stroke-width="2.3"/><path d="M6 9 L13 2" stroke="#fff" stroke-width="1"/></svg>
<div class="a " style="left:1084px;top:1009px;width:21px;height:20px;background:linear-gradient(#a6a6a6,#8e8e8e);border:1px solid #2a2a2a;border-radius:0px 4px 4px 0px;"></div>
<svg class="a" style="left:1087px;top:1011px;" width="15" height="15" viewBox="0 0 15 15"><circle cx="4" cy="11" r="2.5" fill="none" stroke="#222" stroke-width="2.3"/><circle cx="4" cy="11" r="2.5" fill="none" stroke="#fff" stroke-width="1"/><path d="M6 9 L13 2" stroke="#222" stroke-width="2.3"/><path d="M6 9 L13 2" stroke="#fff" stroke-width="1"/><path d="M2 2 L13 13 M13 2 L2 13" stroke="#e02020" stroke-width="1.5"/></svg></body></html>
